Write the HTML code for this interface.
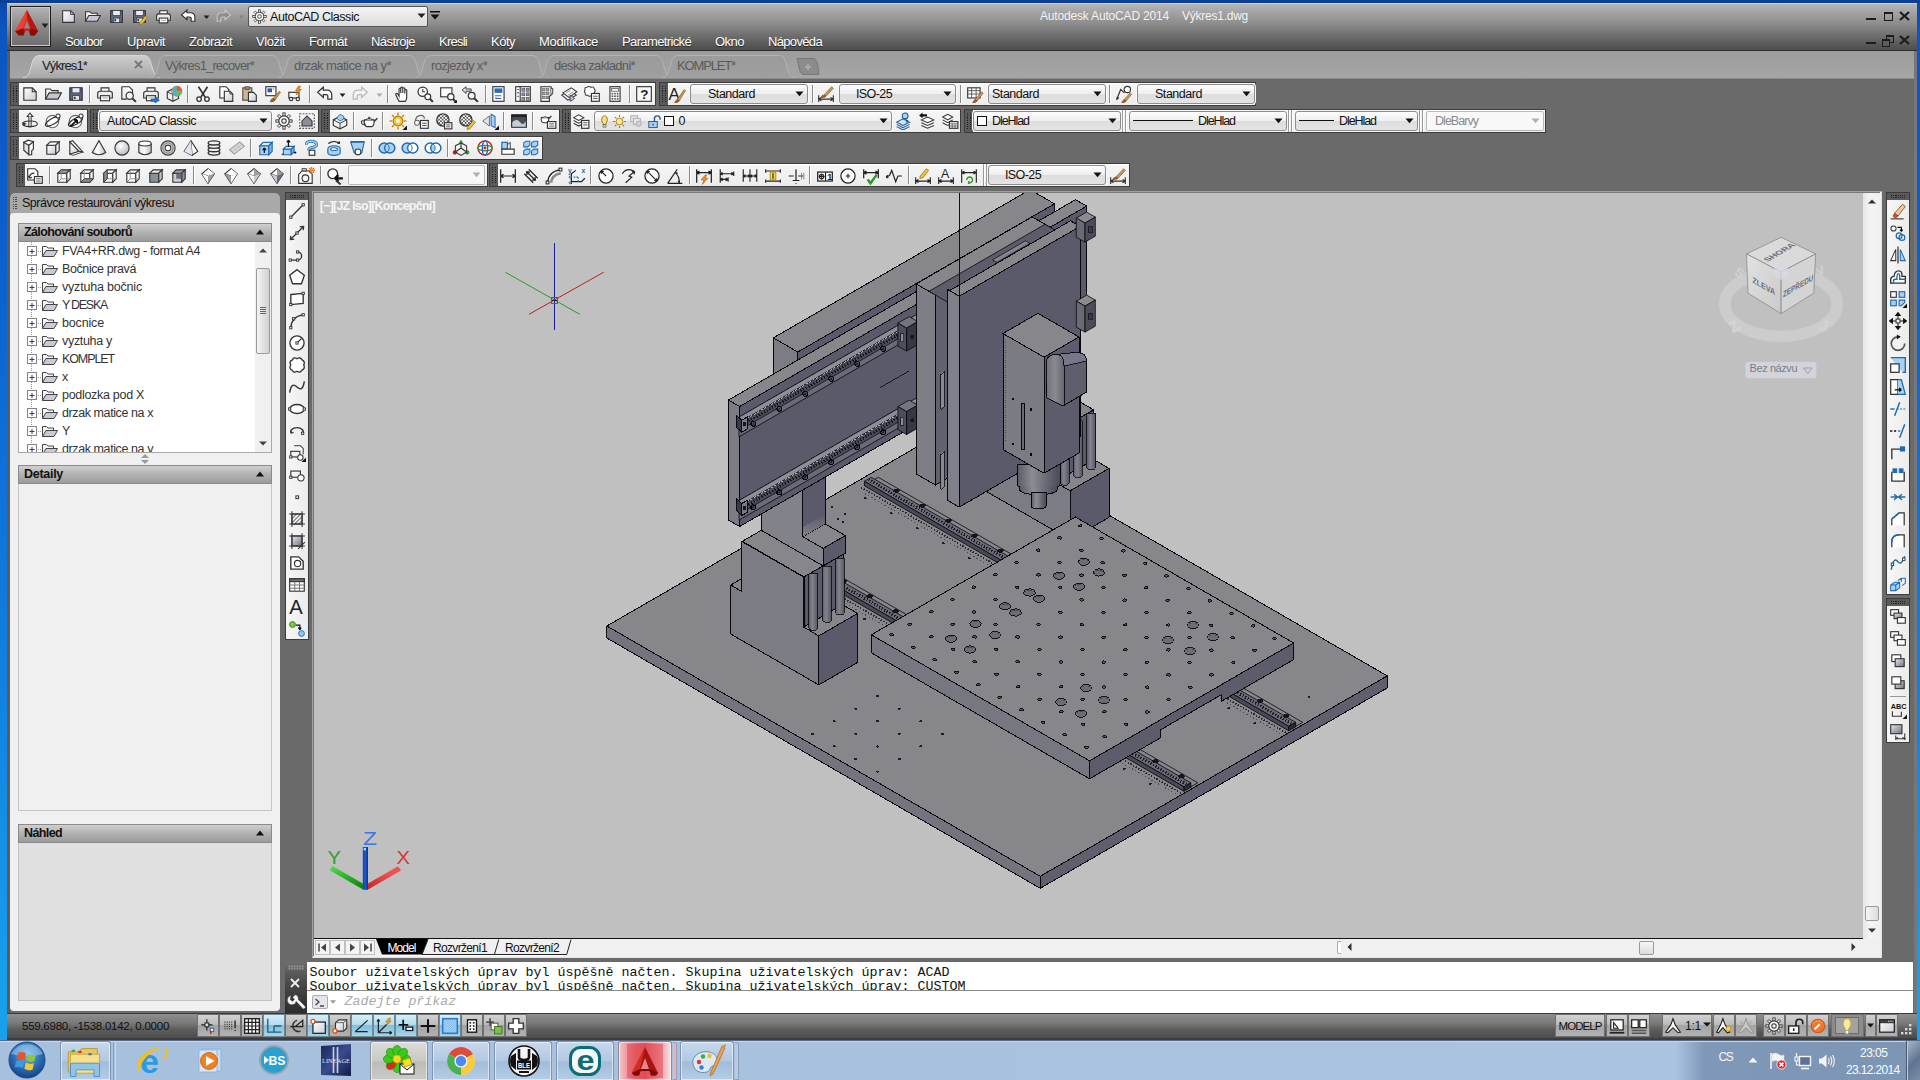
<!DOCTYPE html>
<html lang="cs"><head><meta charset="utf-8"><title>Autodesk AutoCAD 2014 - Výkres1.dwg</title>
<style>
*{box-sizing:border-box;margin:0;padding:0}
html,body{width:1920px;height:1080px;overflow:hidden;background:#0b55c4;font-family:"Liberation Sans",sans-serif}
#r{position:absolute;left:0;top:0;width:1920px;height:1080px;overflow:hidden}
#r div,#r svg{position:absolute}
.t{white-space:nowrap;line-height:1;}
.m{white-space:nowrap;line-height:1;font-family:"Liberation Mono",monospace}
.tb{background:#f0f0f0;border-top:1px solid #fafafa;border-bottom:1px solid #d0d0d0}
.grip{background-image:radial-gradient(circle,#2a2a2a 0.8px,transparent 1px);background-size:3px 3px;background-color:#5a5a5a}
.dd{background:linear-gradient(#fbfbfb,#e6e6e6 55%,#dcdcdc);border:1px solid #8e8e8e;border-radius:3px}
</style></head>
<body><div id="r">
<div style="left:0px;top:0px;width:1920px;height:1080px;background:linear-gradient(#0b47a5 0,#0c55c0 30px,#0d62d2 300px,#1183e0 700px,#18a0ec 1000px)"></div>
<div style="left:0px;top:0px;width:1920px;height:3px;background:#0b3f95"></div>
<div style="left:7px;top:3px;width:1910px;height:1037px;background:#6a6a6a"></div>
<div style="left:7px;top:3px;width:3px;height:1037px;background:#5c5c5c"></div>
<div style="left:7px;top:3px;width:1910px;height:48px;background:linear-gradient(#b6b6b6 0,#a4a4a4 8px,#8c8c8c 20px,#727272 30px,#5a5a5a 40px,#4a4a4a 48px);border-top:1px solid #d0d0d0"></div>
<div style="left:7px;top:50px;width:1910px;height:1px;background:#2e2e2e"></div>
<div style="left:10px;top:6px;width:41px;height:41px;background:linear-gradient(#b4b4b4,#8a8a8a 50%,#6e6e6e);border:1px solid #1e1e1e;box-shadow:inset 0 0 0 1px #c8c8c8"></div>
<svg style="left:13px;top:8px;" width="28" height="30" viewBox="0 0 28 30"><defs><linearGradient id="ag" x1="0" y1="0" x2="1" y2="0"><stop offset="0" stop-color="#f04a38"/><stop offset="0.5" stop-color="#d82a1c"/><stop offset="1" stop-color="#8e0e08"/></linearGradient></defs><path d="M13.9 2 L2 23.2 L5.75 27.6 L10.5 27.6 L12 23 L16 23 L17.5 27.6 L21.5 27.6 L25.1 23.2 Z" fill="url(#ag)"/><path d="M13.9 2 L2 23.2 L9.5 20.5 L13.9 9 Z" fill="#ee4030"/><path d="M13.9 2 L25.1 23.2 L18.5 20.5 L13.9 9 Z" fill="#b41a10"/><path d="M2 23.2 L9.5 20.5 L18.5 20.5 L25.1 23.2 L21.5 27.6 L17.5 27.6 L16 23 L12 23 L10.5 27.6 L5.75 27.6 Z" fill="#8a0e08"/><path d="M9.5 20.5 L18.5 20.5 L16 23 L12 23Z" fill="#c8281c"/><path d="M11 20.5 L13.9 12.5 L17 20.5 Z" fill="#8c8c8c"/></svg>
<svg style="left:41px;top:23px;" width="8" height="6" viewBox="0 0 8 6"><path d="M0.5 0.5 L7.5 0.5 L4 5 Z" fill="#222"/></svg>
<div style="left:248px;top:6px;width:180px;height:21px;background:linear-gradient(#f4f4f4,#dcdcdc);border:1px solid #555;border-radius:2px"></div>
<div class="t" style="left:270px;top:10.92px;font-size:12.5px;color:#111;letter-spacing:-0.457px;">AutoCAD Classic</div>
<svg style="left:417px;top:13px;" width="9" height="6" viewBox="0 0 9 6"><path d="M0.5 0.5 L8.5 0.5 L4.5 5 Z" fill="#222"/></svg>
<svg style="left:430px;top:11px;" width="10" height="9" viewBox="0 0 10 9"><path d="M0 0H10V1.6H0Z M0.5 3.5 L9.5 3.5 L5 8.5 Z" fill="#111"/></svg>
<div class="t" style="left:1040px;top:10.34px;font-size:12px;color:#f2f2f2;letter-spacing:-0.179px;">Autodesk AutoCAD 2014</div>
<div class="t" style="left:1182px;top:10.34px;font-size:12px;color:#f2f2f2;letter-spacing:-0.245px;">Výkres1.dwg</div>
<div style="left:1866px;top:18px;width:10px;height:2px;background:#1c1c1c"></div>
<svg style="left:1899px;top:11px;" width="11" height="10" viewBox="0 0 11 10"><path d="M1 1 L10 9 M10 1 L1 9" stroke="#1c1c1c" stroke-width="2.2"/></svg>
<div style="left:1866px;top:42px;width:10px;height:2px;background:#1c1c1c"></div>
<svg style="left:1899px;top:35px;" width="11" height="10" viewBox="0 0 11 10"><path d="M1 1 L10 9 M10 1 L1 9" stroke="#1c1c1c" stroke-width="2.2"/></svg>
<div style="left:1884px;top:12px;width:9px;height:9px;border:1px solid #1c1c1c;border-top:2px solid #1c1c1c"></div>
<div style="left:1886px;top:35px;width:8px;height:8px;border:1px solid #1c1c1c;border-top:2px solid #1c1c1c"></div>
<div style="left:1882px;top:39px;width:8px;height:8px;border:1px solid #1c1c1c;border-top:2px solid #1c1c1c;background:#5e5e5e"></div>
<div class="t" style="left:65px;top:34.5px;font-size:13px;color:#fff;text-shadow:0 1px 1px rgba(0,0,0,.6);letter-spacing:-0.653px;">Soubor</div>
<div class="t" style="left:127px;top:34.5px;font-size:13px;color:#fff;text-shadow:0 1px 1px rgba(0,0,0,.6);letter-spacing:-0.454px;">Upravit</div>
<div class="t" style="left:189px;top:34.5px;font-size:13px;color:#fff;text-shadow:0 1px 1px rgba(0,0,0,.6);letter-spacing:-0.495px;">Zobrazit</div>
<div class="t" style="left:256px;top:34.5px;font-size:13px;color:#fff;text-shadow:0 1px 1px rgba(0,0,0,.6);letter-spacing:-0.465px;">Vložit</div>
<div class="t" style="left:309px;top:34.5px;font-size:13px;color:#fff;text-shadow:0 1px 1px rgba(0,0,0,.6);letter-spacing:-0.528px;">Formát</div>
<div class="t" style="left:371px;top:34.5px;font-size:13px;color:#fff;text-shadow:0 1px 1px rgba(0,0,0,.6);letter-spacing:-0.551px;">Nástroje</div>
<div class="t" style="left:439px;top:34.5px;font-size:13px;color:#fff;text-shadow:0 1px 1px rgba(0,0,0,.6);letter-spacing:-0.751px;">Kresli</div>
<div class="t" style="left:491px;top:34.5px;font-size:13px;color:#fff;text-shadow:0 1px 1px rgba(0,0,0,.6);letter-spacing:-0.503px;">Kóty</div>
<div class="t" style="left:539px;top:34.5px;font-size:13px;color:#fff;text-shadow:0 1px 1px rgba(0,0,0,.6);letter-spacing:-0.313px;">Modifikace</div>
<div class="t" style="left:622px;top:34.5px;font-size:13px;color:#fff;text-shadow:0 1px 1px rgba(0,0,0,.6);letter-spacing:-0.631px;">Parametrické</div>
<div class="t" style="left:715px;top:34.5px;font-size:13px;color:#fff;text-shadow:0 1px 1px rgba(0,0,0,.6);letter-spacing:-0.518px;">Okno</div>
<div class="t" style="left:768px;top:34.5px;font-size:13px;color:#fff;text-shadow:0 1px 1px rgba(0,0,0,.6);letter-spacing:-0.658px;">Nápověda</div>
<div style="left:10px;top:51px;width:1904px;height:27px;background:linear-gradient(#9c9c9c,#a6a6a6)"></div>
<div style="left:1914px;top:51px;width:3px;height:989px;background:#777"></div>
<svg style="left:23px;top:55px;" width="139" height="23" viewBox="0 0 139 23"><defs><linearGradient id="tga" x1="0" y1="0" x2="0" y2="1"><stop offset="0" stop-color="#cdcdcd"/><stop offset="1" stop-color="#a9a9a9"/></linearGradient><linearGradient id="tgi" x1="0" y1="0" x2="0" y2="1"><stop offset="0" stop-color="#9b9b9b"/><stop offset="1" stop-color="#9f9f9f"/></linearGradient></defs><path d="M0 22.5 C6 22.5 6 18 8 12 C10 4 11 0.5 17 0.5 L120 0.5 C126 0.5 127 4 129 12 C131 18 131 22.5 137 22.5" fill="url(#tga)" stroke="#d8d8d8" stroke-width="1"/></svg>
<div class="t" style="left:42px;top:59.0px;font-size:13px;color:#1a1a1a;letter-spacing:-0.877px;">Výkres1*</div>
<svg style="left:150px;top:55px;" width="140" height="23" viewBox="0 0 140 23"><defs><linearGradient id="tga" x1="0" y1="0" x2="0" y2="1"><stop offset="0" stop-color="#cdcdcd"/><stop offset="1" stop-color="#a9a9a9"/></linearGradient><linearGradient id="tgi" x1="0" y1="0" x2="0" y2="1"><stop offset="0" stop-color="#9b9b9b"/><stop offset="1" stop-color="#9f9f9f"/></linearGradient></defs><path d="M0 22.5 C6 22.5 6 18 8 12 C10 4 11 0.5 17 0.5 L121 0.5 C127 0.5 128 4 130 12 C132 18 132 22.5 138 22.5" fill="url(#tgi)" stroke="#b4b4b4" stroke-width="1"/></svg>
<div class="t" style="left:165px;top:59.0px;font-size:13px;color:#5a5a5a;letter-spacing:-0.850px;">Výkres1_recover*</div>
<svg style="left:278px;top:55px;" width="149" height="23" viewBox="0 0 149 23"><defs><linearGradient id="tga" x1="0" y1="0" x2="0" y2="1"><stop offset="0" stop-color="#cdcdcd"/><stop offset="1" stop-color="#a9a9a9"/></linearGradient><linearGradient id="tgi" x1="0" y1="0" x2="0" y2="1"><stop offset="0" stop-color="#9b9b9b"/><stop offset="1" stop-color="#9f9f9f"/></linearGradient></defs><path d="M0 22.5 C6 22.5 6 18 8 12 C10 4 11 0.5 17 0.5 L130 0.5 C136 0.5 137 4 139 12 C141 18 141 22.5 147 22.5" fill="url(#tgi)" stroke="#b4b4b4" stroke-width="1"/></svg>
<div class="t" style="left:294px;top:59.0px;font-size:13px;color:#5a5a5a;letter-spacing:-0.552px;">drzak matice na y*</div>
<svg style="left:415px;top:55px;" width="135" height="23" viewBox="0 0 135 23"><defs><linearGradient id="tga" x1="0" y1="0" x2="0" y2="1"><stop offset="0" stop-color="#cdcdcd"/><stop offset="1" stop-color="#a9a9a9"/></linearGradient><linearGradient id="tgi" x1="0" y1="0" x2="0" y2="1"><stop offset="0" stop-color="#9b9b9b"/><stop offset="1" stop-color="#9f9f9f"/></linearGradient></defs><path d="M0 22.5 C6 22.5 6 18 8 12 C10 4 11 0.5 17 0.5 L116 0.5 C122 0.5 123 4 125 12 C127 18 127 22.5 133 22.5" fill="url(#tgi)" stroke="#b4b4b4" stroke-width="1"/></svg>
<div class="t" style="left:431px;top:59.0px;font-size:13px;color:#5a5a5a;letter-spacing:-0.689px;">rozjezdy x*</div>
<svg style="left:538px;top:55px;" width="136" height="23" viewBox="0 0 136 23"><defs><linearGradient id="tga" x1="0" y1="0" x2="0" y2="1"><stop offset="0" stop-color="#cdcdcd"/><stop offset="1" stop-color="#a9a9a9"/></linearGradient><linearGradient id="tgi" x1="0" y1="0" x2="0" y2="1"><stop offset="0" stop-color="#9b9b9b"/><stop offset="1" stop-color="#9f9f9f"/></linearGradient></defs><path d="M0 22.5 C6 22.5 6 18 8 12 C10 4 11 0.5 17 0.5 L117 0.5 C123 0.5 124 4 126 12 C128 18 128 22.5 134 22.5" fill="url(#tgi)" stroke="#b4b4b4" stroke-width="1"/></svg>
<div class="t" style="left:554px;top:59.0px;font-size:13px;color:#5a5a5a;letter-spacing:-0.670px;">deska zakladni*</div>
<svg style="left:662px;top:55px;" width="135" height="23" viewBox="0 0 135 23"><defs><linearGradient id="tga" x1="0" y1="0" x2="0" y2="1"><stop offset="0" stop-color="#cdcdcd"/><stop offset="1" stop-color="#a9a9a9"/></linearGradient><linearGradient id="tgi" x1="0" y1="0" x2="0" y2="1"><stop offset="0" stop-color="#9b9b9b"/><stop offset="1" stop-color="#9f9f9f"/></linearGradient></defs><path d="M0 22.5 C6 22.5 6 18 8 12 C10 4 11 0.5 17 0.5 L116 0.5 C122 0.5 123 4 125 12 C127 18 127 22.5 133 22.5" fill="url(#tgi)" stroke="#b4b4b4" stroke-width="1"/></svg>
<div class="t" style="left:677px;top:59.0px;font-size:13px;color:#5a5a5a;letter-spacing:-1.148px;">KOMPLET*</div>
<svg style="left:134px;top:60px;" width="9" height="9" viewBox="0 0 9 9"><path d="M1 1 L8 8 M8 1 L1 8" stroke="#777" stroke-width="1.8"/></svg>
<svg style="left:796px;top:57px;" width="24" height="19" viewBox="0 0 24 19"><path d="M1 1.5 L17 1.5 C20 1.5 21 4 22 9 L23 17.5 L8 17.5 C5 17.5 4 15 3 10 Z" fill="#8c8c8c" stroke="#777"/><path d="M9 10 H15 M12 7 V13" stroke="#aaa" stroke-width="2"/></svg>
<div style="left:10px;top:78px;width:1904px;height:1px;background:#8a8a8a"></div>
<div style="left:10px;top:82px;width:9px;height:24px;background:#5a5a5a;border:1px solid #3c3c3c;border-right:none"></div>
<div style="left:13px;top:86px;width:1.4px;height:16px;background:repeating-linear-gradient(to bottom,#1e1e1e 0,#1e1e1e 1.1px,transparent 1.1px,transparent 2.2px)"></div>
<div style="left:15.5px;top:86px;width:1.4px;height:16px;background:repeating-linear-gradient(to bottom,#1e1e1e 0,#1e1e1e 1.1px,transparent 1.1px,transparent 2.2px)"></div>
<div style="left:19px;top:82px;width:637px;height:24px;background:linear-gradient(#f6f6f6,#ececec);border:1px solid #3c3c3c;border-left:none;box-shadow:inset 0 1px 0 #fff"></div>
<div style="left:89px;top:85px;width:1px;height:18px;background:#8a8a8a"></div>
<div style="left:90px;top:85px;width:1px;height:18px;background:#fff"></div>
<div style="left:187px;top:85px;width:1px;height:18px;background:#8a8a8a"></div>
<div style="left:188px;top:85px;width:1px;height:18px;background:#fff"></div>
<div style="left:309px;top:85px;width:1px;height:18px;background:#8a8a8a"></div>
<div style="left:310px;top:85px;width:1px;height:18px;background:#fff"></div>
<div style="left:387px;top:85px;width:1px;height:18px;background:#8a8a8a"></div>
<div style="left:388px;top:85px;width:1px;height:18px;background:#fff"></div>
<div style="left:485px;top:85px;width:1px;height:18px;background:#8a8a8a"></div>
<div style="left:486px;top:85px;width:1px;height:18px;background:#fff"></div>
<div style="left:629px;top:85px;width:1px;height:18px;background:#8a8a8a"></div>
<div style="left:630px;top:85px;width:1px;height:18px;background:#fff"></div>
<div style="left:659px;top:82px;width:9px;height:24px;background:#5a5a5a;border:1px solid #3c3c3c;border-right:none"></div>
<div style="left:662px;top:86px;width:1.4px;height:16px;background:repeating-linear-gradient(to bottom,#1e1e1e 0,#1e1e1e 1.1px,transparent 1.1px,transparent 2.2px)"></div>
<div style="left:664.5px;top:86px;width:1.4px;height:16px;background:repeating-linear-gradient(to bottom,#1e1e1e 0,#1e1e1e 1.1px,transparent 1.1px,transparent 2.2px)"></div>
<div style="left:668px;top:82px;width:588px;height:24px;background:linear-gradient(#f6f6f6,#ececec);border:1px solid #3c3c3c;border-left:none;box-shadow:inset 0 1px 0 #fff"></div>
<div style="left:690px;top:84px;width:118px;height:20px;background:linear-gradient(#fdfdfd,#eeeeee 50%,#dddddd 52%,#e4e4e4);border:1px solid #8c8c8c;border-radius:3px;box-shadow:0 0 0 1px #f8f8f8"></div>
<svg style="left:795px;top:91px;" width="9" height="6" viewBox="0 0 9 6"><path d="M0.5 0.5 L8.5 0.5 L4.5 5.2 Z" fill="#111"/></svg>
<div class="t" style="left:708px;top:87.72px;font-size:12.5px;color:#111;letter-spacing:-0.466px;">Standard</div>
<div style="left:812px;top:85px;width:1px;height:18px;background:#8a8a8a"></div>
<div style="left:813px;top:85px;width:1px;height:18px;background:#fff"></div>
<div style="left:839px;top:84px;width:117px;height:20px;background:linear-gradient(#fdfdfd,#eeeeee 50%,#dddddd 52%,#e4e4e4);border:1px solid #8c8c8c;border-radius:3px;box-shadow:0 0 0 1px #f8f8f8"></div>
<svg style="left:943px;top:91px;" width="9" height="6" viewBox="0 0 9 6"><path d="M0.5 0.5 L8.5 0.5 L4.5 5.2 Z" fill="#111"/></svg>
<div class="t" style="left:856px;top:87.72px;font-size:12.5px;color:#111;letter-spacing:-0.600px;">ISO-25</div>
<div style="left:960px;top:85px;width:1px;height:18px;background:#8a8a8a"></div>
<div style="left:961px;top:85px;width:1px;height:18px;background:#fff"></div>
<div style="left:988px;top:84px;width:118px;height:20px;background:linear-gradient(#fdfdfd,#eeeeee 50%,#dddddd 52%,#e4e4e4);border:1px solid #8c8c8c;border-radius:3px;box-shadow:0 0 0 1px #f8f8f8"></div>
<svg style="left:1093px;top:91px;" width="9" height="6" viewBox="0 0 9 6"><path d="M0.5 0.5 L8.5 0.5 L4.5 5.2 Z" fill="#111"/></svg>
<div class="t" style="left:992px;top:87.72px;font-size:12.5px;color:#111;letter-spacing:-0.466px;">Standard</div>
<div style="left:1109px;top:85px;width:1px;height:18px;background:#8a8a8a"></div>
<div style="left:1110px;top:85px;width:1px;height:18px;background:#fff"></div>
<div style="left:1137px;top:84px;width:118px;height:20px;background:linear-gradient(#fdfdfd,#eeeeee 50%,#dddddd 52%,#e4e4e4);border:1px solid #8c8c8c;border-radius:3px;box-shadow:0 0 0 1px #f8f8f8"></div>
<svg style="left:1242px;top:91px;" width="9" height="6" viewBox="0 0 9 6"><path d="M0.5 0.5 L8.5 0.5 L4.5 5.2 Z" fill="#111"/></svg>
<div class="t" style="left:1155px;top:87.72px;font-size:12.5px;color:#111;letter-spacing:-0.466px;">Standard</div>
<div style="left:10px;top:109px;width:9px;height:24px;background:#5a5a5a;border:1px solid #3c3c3c;border-right:none"></div>
<div style="left:13px;top:113px;width:1.4px;height:16px;background:repeating-linear-gradient(to bottom,#1e1e1e 0,#1e1e1e 1.1px,transparent 1.1px,transparent 2.2px)"></div>
<div style="left:15.5px;top:113px;width:1.4px;height:16px;background:repeating-linear-gradient(to bottom,#1e1e1e 0,#1e1e1e 1.1px,transparent 1.1px,transparent 2.2px)"></div>
<div style="left:19px;top:109px;width:69px;height:24px;background:linear-gradient(#f6f6f6,#ececec);border:1px solid #3c3c3c;border-left:none;box-shadow:inset 0 1px 0 #fff"></div>
<div style="left:90px;top:109px;width:9px;height:24px;background:#5a5a5a;border:1px solid #3c3c3c;border-right:none"></div>
<div style="left:93px;top:113px;width:1.4px;height:16px;background:repeating-linear-gradient(to bottom,#1e1e1e 0,#1e1e1e 1.1px,transparent 1.1px,transparent 2.2px)"></div>
<div style="left:95.5px;top:113px;width:1.4px;height:16px;background:repeating-linear-gradient(to bottom,#1e1e1e 0,#1e1e1e 1.1px,transparent 1.1px,transparent 2.2px)"></div>
<div style="left:99px;top:109px;width:220px;height:24px;background:linear-gradient(#f6f6f6,#ececec);border:1px solid #3c3c3c;border-left:none;box-shadow:inset 0 1px 0 #fff"></div>
<div style="left:99px;top:111px;width:173px;height:20px;background:linear-gradient(#fdfdfd,#eeeeee 50%,#dddddd 52%,#e4e4e4);border:1px solid #8c8c8c;border-radius:3px;box-shadow:0 0 0 1px #f8f8f8"></div>
<svg style="left:259px;top:118px;" width="9" height="6" viewBox="0 0 9 6"><path d="M0.5 0.5 L8.5 0.5 L4.5 5.2 Z" fill="#111"/></svg>
<div class="t" style="left:107px;top:114.72px;font-size:12.5px;color:#111;letter-spacing:-0.457px;">AutoCAD Classic</div>
<div style="left:321px;top:109px;width:9px;height:24px;background:#5a5a5a;border:1px solid #3c3c3c;border-right:none"></div>
<div style="left:324px;top:113px;width:1.4px;height:16px;background:repeating-linear-gradient(to bottom,#1e1e1e 0,#1e1e1e 1.1px,transparent 1.1px,transparent 2.2px)"></div>
<div style="left:326.5px;top:113px;width:1.4px;height:16px;background:repeating-linear-gradient(to bottom,#1e1e1e 0,#1e1e1e 1.1px,transparent 1.1px,transparent 2.2px)"></div>
<div style="left:330px;top:109px;width:230px;height:24px;background:linear-gradient(#f6f6f6,#ececec);border:1px solid #3c3c3c;border-left:none;box-shadow:inset 0 1px 0 #fff"></div>
<div style="left:353px;top:112px;width:1px;height:18px;background:#8a8a8a"></div>
<div style="left:354px;top:112px;width:1px;height:18px;background:#fff"></div>
<div style="left:382px;top:112px;width:1px;height:18px;background:#8a8a8a"></div>
<div style="left:383px;top:112px;width:1px;height:18px;background:#fff"></div>
<div style="left:503px;top:112px;width:1px;height:18px;background:#8a8a8a"></div>
<div style="left:504px;top:112px;width:1px;height:18px;background:#fff"></div>
<div style="left:532px;top:112px;width:1px;height:18px;background:#8a8a8a"></div>
<div style="left:533px;top:112px;width:1px;height:18px;background:#fff"></div>
<div style="left:562px;top:109px;width:9px;height:24px;background:#5a5a5a;border:1px solid #3c3c3c;border-right:none"></div>
<div style="left:565px;top:113px;width:1.4px;height:16px;background:repeating-linear-gradient(to bottom,#1e1e1e 0,#1e1e1e 1.1px,transparent 1.1px,transparent 2.2px)"></div>
<div style="left:567.5px;top:113px;width:1.4px;height:16px;background:repeating-linear-gradient(to bottom,#1e1e1e 0,#1e1e1e 1.1px,transparent 1.1px,transparent 2.2px)"></div>
<div style="left:571px;top:109px;width:390px;height:24px;background:linear-gradient(#f6f6f6,#ececec);border:1px solid #3c3c3c;border-left:none;box-shadow:inset 0 1px 0 #fff"></div>
<div style="left:594px;top:111px;width:298px;height:20px;background:linear-gradient(#fdfdfd,#eeeeee 50%,#dddddd 52%,#e4e4e4);border:1px solid #8c8c8c;border-radius:3px;box-shadow:0 0 0 1px #f8f8f8"></div>
<svg style="left:879px;top:118px;" width="9" height="6" viewBox="0 0 9 6"><path d="M0.5 0.5 L8.5 0.5 L4.5 5.2 Z" fill="#111"/></svg>
<div class="t" style="left:678.5px;top:114.72px;font-size:12.5px;color:#111;">0</div>
<div style="left:964px;top:109px;width:9px;height:24px;background:#5a5a5a;border:1px solid #3c3c3c;border-right:none"></div>
<div style="left:967px;top:113px;width:1.4px;height:16px;background:repeating-linear-gradient(to bottom,#1e1e1e 0,#1e1e1e 1.1px,transparent 1.1px,transparent 2.2px)"></div>
<div style="left:969.5px;top:113px;width:1.4px;height:16px;background:repeating-linear-gradient(to bottom,#1e1e1e 0,#1e1e1e 1.1px,transparent 1.1px,transparent 2.2px)"></div>
<div style="left:973px;top:109px;width:573px;height:24px;background:linear-gradient(#f6f6f6,#ececec);border:1px solid #3c3c3c;border-left:none;box-shadow:inset 0 1px 0 #fff"></div>
<div style="left:973px;top:111px;width:148px;height:20px;background:linear-gradient(#fdfdfd,#eeeeee 50%,#dddddd 52%,#e4e4e4);border:1px solid #8c8c8c;border-radius:3px;box-shadow:0 0 0 1px #f8f8f8"></div>
<svg style="left:1108px;top:118px;" width="9" height="6" viewBox="0 0 9 6"><path d="M0.5 0.5 L8.5 0.5 L4.5 5.2 Z" fill="#111"/></svg>
<div class="t" style="left:992px;top:114.72px;font-size:12.5px;color:#111;letter-spacing:-1.066px;">DleHlad</div>
<div style="left:1122px;top:110px;width:1px;height:22px;background:#9a9a9a"></div>
<div style="left:1123px;top:110px;width:1px;height:22px;background:#fff"></div>
<div style="left:1125px;top:110px;width:1px;height:22px;background:#9a9a9a"></div>
<div style="left:1126px;top:110px;width:1px;height:22px;background:#fff"></div>
<div style="left:1129px;top:111px;width:158px;height:20px;background:linear-gradient(#fdfdfd,#eeeeee 50%,#dddddd 52%,#e4e4e4);border:1px solid #8c8c8c;border-radius:3px;box-shadow:0 0 0 1px #f8f8f8"></div>
<svg style="left:1274px;top:118px;" width="9" height="6" viewBox="0 0 9 6"><path d="M0.5 0.5 L8.5 0.5 L4.5 5.2 Z" fill="#111"/></svg>
<div class="t" style="left:1198px;top:114.72px;font-size:12.5px;color:#111;letter-spacing:-1.066px;">DleHlad</div>
<div style="left:1133px;top:120px;width:60px;height:1px;background:#111"></div>
<div style="left:1288px;top:110px;width:1px;height:22px;background:#9a9a9a"></div>
<div style="left:1289px;top:110px;width:1px;height:22px;background:#fff"></div>
<div style="left:1291px;top:110px;width:1px;height:22px;background:#9a9a9a"></div>
<div style="left:1292px;top:110px;width:1px;height:22px;background:#fff"></div>
<div style="left:1295px;top:111px;width:123px;height:20px;background:linear-gradient(#fdfdfd,#eeeeee 50%,#dddddd 52%,#e4e4e4);border:1px solid #8c8c8c;border-radius:3px;box-shadow:0 0 0 1px #f8f8f8"></div>
<svg style="left:1405px;top:118px;" width="9" height="6" viewBox="0 0 9 6"><path d="M0.5 0.5 L8.5 0.5 L4.5 5.2 Z" fill="#111"/></svg>
<div class="t" style="left:1339px;top:114.72px;font-size:12.5px;color:#111;letter-spacing:-1.066px;">DleHlad</div>
<div style="left:1299px;top:120px;width:35px;height:1px;background:#111"></div>
<div style="left:1419px;top:110px;width:1px;height:22px;background:#9a9a9a"></div>
<div style="left:1420px;top:110px;width:1px;height:22px;background:#fff"></div>
<div style="left:1422px;top:110px;width:1px;height:22px;background:#9a9a9a"></div>
<div style="left:1423px;top:110px;width:1px;height:22px;background:#fff"></div>
<div style="left:1426px;top:111px;width:118px;height:20px;background:#f8f8f8;border:1px solid #b8b8b8;border-radius:2px"></div>
<svg style="left:1531px;top:118px;" width="9" height="6" viewBox="0 0 9 6"><path d="M0.5 0.5 L8.5 0.5 L4.5 5.2 Z" fill="#b0b0b0"/></svg>
<div class="t" style="left:1435px;top:114.72px;font-size:12.5px;color:#8a8a8a;letter-spacing:-0.963px;">DleBarvy</div>
<div style="left:10px;top:136px;width:9px;height:24px;background:#5a5a5a;border:1px solid #3c3c3c;border-right:none"></div>
<div style="left:13px;top:140px;width:1.4px;height:16px;background:repeating-linear-gradient(to bottom,#1e1e1e 0,#1e1e1e 1.1px,transparent 1.1px,transparent 2.2px)"></div>
<div style="left:15.5px;top:140px;width:1.4px;height:16px;background:repeating-linear-gradient(to bottom,#1e1e1e 0,#1e1e1e 1.1px,transparent 1.1px,transparent 2.2px)"></div>
<div style="left:19px;top:136px;width:524px;height:24px;background:linear-gradient(#f6f6f6,#ececec);border:1px solid #3c3c3c;border-left:none;box-shadow:inset 0 1px 0 #fff"></div>
<div style="left:250px;top:139px;width:1px;height:18px;background:#8a8a8a"></div>
<div style="left:251px;top:139px;width:1px;height:18px;background:#fff"></div>
<div style="left:371px;top:139px;width:1px;height:18px;background:#8a8a8a"></div>
<div style="left:372px;top:139px;width:1px;height:18px;background:#fff"></div>
<div style="left:447px;top:139px;width:1px;height:18px;background:#8a8a8a"></div>
<div style="left:448px;top:139px;width:1px;height:18px;background:#fff"></div>
<div style="left:16px;top:163px;width:9px;height:24px;background:#5a5a5a;border:1px solid #3c3c3c;border-right:none"></div>
<div style="left:19px;top:167px;width:1.4px;height:16px;background:repeating-linear-gradient(to bottom,#1e1e1e 0,#1e1e1e 1.1px,transparent 1.1px,transparent 2.2px)"></div>
<div style="left:21.5px;top:167px;width:1.4px;height:16px;background:repeating-linear-gradient(to bottom,#1e1e1e 0,#1e1e1e 1.1px,transparent 1.1px,transparent 2.2px)"></div>
<div style="left:25px;top:163px;width:463px;height:24px;background:linear-gradient(#f6f6f6,#ececec);border:1px solid #3c3c3c;border-left:none;box-shadow:inset 0 1px 0 #fff"></div>
<div style="left:49px;top:166px;width:1px;height:18px;background:#8a8a8a"></div>
<div style="left:50px;top:166px;width:1px;height:18px;background:#fff"></div>
<div style="left:193px;top:166px;width:1px;height:18px;background:#8a8a8a"></div>
<div style="left:194px;top:166px;width:1px;height:18px;background:#fff"></div>
<div style="left:290px;top:166px;width:1px;height:18px;background:#8a8a8a"></div>
<div style="left:291px;top:166px;width:1px;height:18px;background:#fff"></div>
<div style="left:320px;top:166px;width:1px;height:18px;background:#8a8a8a"></div>
<div style="left:321px;top:166px;width:1px;height:18px;background:#fff"></div>
<div style="left:348px;top:165px;width:137px;height:20px;background:#f8f8f8;border:1px solid #b8b8b8;border-radius:2px"></div>
<svg style="left:472px;top:172px;" width="9" height="6" viewBox="0 0 9 6"><path d="M0.5 0.5 L8.5 0.5 L4.5 5.2 Z" fill="#b0b0b0"/></svg>
<div style="left:489px;top:163px;width:9px;height:24px;background:#5a5a5a;border:1px solid #3c3c3c;border-right:none"></div>
<div style="left:492px;top:167px;width:1.4px;height:16px;background:repeating-linear-gradient(to bottom,#1e1e1e 0,#1e1e1e 1.1px,transparent 1.1px,transparent 2.2px)"></div>
<div style="left:494.5px;top:167px;width:1.4px;height:16px;background:repeating-linear-gradient(to bottom,#1e1e1e 0,#1e1e1e 1.1px,transparent 1.1px,transparent 2.2px)"></div>
<div style="left:498px;top:163px;width:632px;height:24px;background:linear-gradient(#f6f6f6,#ececec);border:1px solid #3c3c3c;border-left:none;box-shadow:inset 0 1px 0 #fff"></div>
<div style="left:590px;top:166px;width:1px;height:18px;background:#8a8a8a"></div>
<div style="left:591px;top:166px;width:1px;height:18px;background:#fff"></div>
<div style="left:689px;top:166px;width:1px;height:18px;background:#8a8a8a"></div>
<div style="left:690px;top:166px;width:1px;height:18px;background:#fff"></div>
<div style="left:809px;top:166px;width:1px;height:18px;background:#8a8a8a"></div>
<div style="left:810px;top:166px;width:1px;height:18px;background:#fff"></div>
<div style="left:908px;top:166px;width:1px;height:18px;background:#8a8a8a"></div>
<div style="left:909px;top:166px;width:1px;height:18px;background:#fff"></div>
<div style="left:983px;top:164px;width:1px;height:22px;background:#9a9a9a"></div>
<div style="left:984px;top:164px;width:1px;height:22px;background:#fff"></div>
<div style="left:986px;top:164px;width:1px;height:22px;background:#9a9a9a"></div>
<div style="left:987px;top:164px;width:1px;height:22px;background:#fff"></div>
<div style="left:988px;top:165px;width:118px;height:20px;background:linear-gradient(#fdfdfd,#eeeeee 50%,#dddddd 52%,#e4e4e4);border:1px solid #8c8c8c;border-radius:3px;box-shadow:0 0 0 1px #f8f8f8"></div>
<svg style="left:1093px;top:172px;" width="9" height="6" viewBox="0 0 9 6"><path d="M0.5 0.5 L8.5 0.5 L4.5 5.2 Z" fill="#111"/></svg>
<div class="t" style="left:1005px;top:168.72px;font-size:12.5px;color:#111;letter-spacing:-0.600px;">ISO-25</div>
<div style="left:10px;top:193px;width:270px;height:30px;background:#a9a9a9;border-radius:5px 5px 0 0"></div>
<div style="left:13px;top:197px;width:1.3px;height:12px;background:repeating-linear-gradient(to bottom,#4a4a4a 0,#4a4a4a 1.1px,transparent 1.1px,transparent 2.2px)"></div>
<div style="left:15.3px;top:197px;width:1.3px;height:12px;background:repeating-linear-gradient(to bottom,#4a4a4a 0,#4a4a4a 1.1px,transparent 1.1px,transparent 2.2px)"></div>
<div class="t" style="left:22px;top:197.42px;font-size:12.5px;color:#111;letter-spacing:-0.476px;">Správce restaurování výkresu</div>
<div style="left:10px;top:213px;width:270px;height:798px;background:#f0f0f0;border-radius:4px 4px 4px 4px"></div>
<div style="left:18px;top:223px;width:254px;height:19px;background:linear-gradient(#cfcfcf,#b4b4b4 45%,#9b9b9b);border:1px solid #8a8a8a"></div>
<div class="t" style="left:24px;top:226.42px;font-size:12.5px;color:#111;font-weight:bold;letter-spacing:-0.635px;">Zálohování souborů</div>
<svg style="left:256px;top:229px;" width="8" height="6" viewBox="0 0 8 6"><path d="M0 5.5 L4 0.5 L8 5.5 Z" fill="#111"/></svg>
<div style="left:18px;top:242px;width:254px;height:211px;background:#fff;border:1px solid #a8a8a8;border-top:none"></div>
<svg style="left:19px;top:242px" width="236" height="210" viewBox="0 0 236 210"><path d="M12.5 0 V210" stroke="#999" stroke-dasharray="1 1"/><path d="M17 9.5 H23" stroke="#999" stroke-dasharray="1 1"/><rect x="8.5" y="4.5" width="9" height="9" fill="#fff" stroke="#848484"/><path d="M10.5 9.5 H15.5 M13 7 V12" stroke="#2a3a8a"/><path d="M23.5 14.5 V4.5 H27.5 L29 6 H34.5 V8" fill="#f4f4f4" stroke="#444"/><path d="M23.5 14.5 L27 8.5 H38.5 L35 14.5 Z" fill="#c9ccd4" stroke="#444"/><path d="M17 27.5 H23" stroke="#999" stroke-dasharray="1 1"/><rect x="8.5" y="22.5" width="9" height="9" fill="#fff" stroke="#848484"/><path d="M10.5 27.5 H15.5 M13 25 V30" stroke="#2a3a8a"/><path d="M23.5 32.5 V22.5 H27.5 L29 24 H34.5 V26" fill="#f4f4f4" stroke="#444"/><path d="M23.5 32.5 L27 26.5 H38.5 L35 32.5 Z" fill="#c9ccd4" stroke="#444"/><path d="M17 45.5 H23" stroke="#999" stroke-dasharray="1 1"/><rect x="8.5" y="40.5" width="9" height="9" fill="#fff" stroke="#848484"/><path d="M10.5 45.5 H15.5 M13 43 V48" stroke="#2a3a8a"/><path d="M23.5 50.5 V40.5 H27.5 L29 42 H34.5 V44" fill="#f4f4f4" stroke="#444"/><path d="M23.5 50.5 L27 44.5 H38.5 L35 50.5 Z" fill="#c9ccd4" stroke="#444"/><path d="M17 63.5 H23" stroke="#999" stroke-dasharray="1 1"/><rect x="8.5" y="58.5" width="9" height="9" fill="#fff" stroke="#848484"/><path d="M10.5 63.5 H15.5 M13 61 V66" stroke="#2a3a8a"/><path d="M23.5 68.5 V58.5 H27.5 L29 60 H34.5 V62" fill="#f4f4f4" stroke="#444"/><path d="M23.5 68.5 L27 62.5 H38.5 L35 68.5 Z" fill="#c9ccd4" stroke="#444"/><path d="M17 81.5 H23" stroke="#999" stroke-dasharray="1 1"/><rect x="8.5" y="76.5" width="9" height="9" fill="#fff" stroke="#848484"/><path d="M10.5 81.5 H15.5 M13 79 V84" stroke="#2a3a8a"/><path d="M23.5 86.5 V76.5 H27.5 L29 78 H34.5 V80" fill="#f4f4f4" stroke="#444"/><path d="M23.5 86.5 L27 80.5 H38.5 L35 86.5 Z" fill="#c9ccd4" stroke="#444"/><path d="M17 99.5 H23" stroke="#999" stroke-dasharray="1 1"/><rect x="8.5" y="94.5" width="9" height="9" fill="#fff" stroke="#848484"/><path d="M10.5 99.5 H15.5 M13 97 V102" stroke="#2a3a8a"/><path d="M23.5 104.5 V94.5 H27.5 L29 96 H34.5 V98" fill="#f4f4f4" stroke="#444"/><path d="M23.5 104.5 L27 98.5 H38.5 L35 104.5 Z" fill="#c9ccd4" stroke="#444"/><path d="M17 117.5 H23" stroke="#999" stroke-dasharray="1 1"/><rect x="8.5" y="112.5" width="9" height="9" fill="#fff" stroke="#848484"/><path d="M10.5 117.5 H15.5 M13 115 V120" stroke="#2a3a8a"/><path d="M23.5 122.5 V112.5 H27.5 L29 114 H34.5 V116" fill="#f4f4f4" stroke="#444"/><path d="M23.5 122.5 L27 116.5 H38.5 L35 122.5 Z" fill="#c9ccd4" stroke="#444"/><path d="M17 135.5 H23" stroke="#999" stroke-dasharray="1 1"/><rect x="8.5" y="130.5" width="9" height="9" fill="#fff" stroke="#848484"/><path d="M10.5 135.5 H15.5 M13 133 V138" stroke="#2a3a8a"/><path d="M23.5 140.5 V130.5 H27.5 L29 132 H34.5 V134" fill="#f4f4f4" stroke="#444"/><path d="M23.5 140.5 L27 134.5 H38.5 L35 140.5 Z" fill="#c9ccd4" stroke="#444"/><path d="M17 153.5 H23" stroke="#999" stroke-dasharray="1 1"/><rect x="8.5" y="148.5" width="9" height="9" fill="#fff" stroke="#848484"/><path d="M10.5 153.5 H15.5 M13 151 V156" stroke="#2a3a8a"/><path d="M23.5 158.5 V148.5 H27.5 L29 150 H34.5 V152" fill="#f4f4f4" stroke="#444"/><path d="M23.5 158.5 L27 152.5 H38.5 L35 158.5 Z" fill="#c9ccd4" stroke="#444"/><path d="M17 171.5 H23" stroke="#999" stroke-dasharray="1 1"/><rect x="8.5" y="166.5" width="9" height="9" fill="#fff" stroke="#848484"/><path d="M10.5 171.5 H15.5 M13 169 V174" stroke="#2a3a8a"/><path d="M23.5 176.5 V166.5 H27.5 L29 168 H34.5 V170" fill="#f4f4f4" stroke="#444"/><path d="M23.5 176.5 L27 170.5 H38.5 L35 176.5 Z" fill="#c9ccd4" stroke="#444"/><path d="M17 189.5 H23" stroke="#999" stroke-dasharray="1 1"/><rect x="8.5" y="184.5" width="9" height="9" fill="#fff" stroke="#848484"/><path d="M10.5 189.5 H15.5 M13 187 V192" stroke="#2a3a8a"/><path d="M23.5 194.5 V184.5 H27.5 L29 186 H34.5 V188" fill="#f4f4f4" stroke="#444"/><path d="M23.5 194.5 L27 188.5 H38.5 L35 194.5 Z" fill="#c9ccd4" stroke="#444"/><path d="M17 207.5 H23" stroke="#999" stroke-dasharray="1 1"/><rect x="8.5" y="202.5" width="9" height="9" fill="#fff" stroke="#848484"/><path d="M10.5 207.5 H15.5 M13 205 V210" stroke="#2a3a8a"/><path d="M23.5 212.5 V202.5 H27.5 L29 204 H34.5 V206" fill="#f4f4f4" stroke="#444"/><path d="M23.5 212.5 L27 206.5 H38.5 L35 212.5 Z" fill="#c9ccd4" stroke="#444"/></svg>
<div style="left:19px;top:242px;width:236px;height:210px;overflow:hidden"><div class="t" style="left:43px;top:2.72px;font-size:12.5px;color:#333;letter-spacing:-0.378px">FVA4+RR.dwg - format A4</div><div class="t" style="left:43px;top:20.72px;font-size:12.5px;color:#333;letter-spacing:-0.401px">Bočnice pravá</div><div class="t" style="left:43px;top:38.72px;font-size:12.5px;color:#333;letter-spacing:-0.191px">vyztuha bočnic</div><div class="t" style="left:43px;top:56.72px;font-size:12.5px;color:#333;letter-spacing:-1.280px">Y DESKA</div><div class="t" style="left:43px;top:74.72px;font-size:12.5px;color:#333;letter-spacing:-0.155px">bocnice</div><div class="t" style="left:43px;top:92.72px;font-size:12.5px;color:#333;letter-spacing:-0.311px">vyztuha y</div><div class="t" style="left:43px;top:110.72px;font-size:12.5px;color:#333;letter-spacing:-1.105px">KOMPLET</div><div class="t" style="left:43px;top:128.72px;font-size:12.5px;color:#333;letter-spacing:-0.250px">x</div><div class="t" style="left:43px;top:146.72px;font-size:12.5px;color:#333;letter-spacing:-0.298px">podlozka pod X</div><div class="t" style="left:43px;top:164.72px;font-size:12.5px;color:#333;letter-spacing:-0.409px">drzak matice na x</div><div class="t" style="left:43px;top:182.72px;font-size:12.5px;color:#333;letter-spacing:-1.338px">Y</div><div class="t" style="left:43px;top:200.72px;font-size:12.5px;color:#333;letter-spacing:-0.409px">drzak matice na y</div></div>
<div style="left:255px;top:242px;width:16px;height:210px;background:#f0f0f0"></div>
<svg style="left:259px;top:248px;" width="8" height="5" viewBox="0 0 8 5"><path d="M0 4.5 L4 0.5 L8 4.5Z" fill="#444"/></svg>
<svg style="left:259px;top:441px;" width="8" height="5" viewBox="0 0 8 5"><path d="M0 0.5 L4 4.5 L8 0.5Z" fill="#444"/></svg>
<div style="left:256px;top:268px;width:14px;height:86px;background:linear-gradient(90deg,#f4f4f4,#e2e2e2 50%,#d2d2d2);border:1px solid #9a9a9a;border-radius:2px"></div>
<div style="left:260px;top:307px;width:6px;height:1px;background:#666"></div>
<div style="left:260px;top:309px;width:6px;height:1px;background:#666"></div>
<div style="left:260px;top:311px;width:6px;height:1px;background:#666"></div>
<div style="left:260px;top:313px;width:6px;height:1px;background:#666"></div>
<svg style="left:141px;top:454px;" width="8" height="10" viewBox="0 0 8 10"><path d="M0 4 L4 0 L8 4Z M0 6 L4 10 L8 6Z" fill="#9a9a9a"/></svg>
<div style="left:18px;top:465px;width:254px;height:19px;background:linear-gradient(#cfcfcf,#b4b4b4 45%,#9b9b9b);border:1px solid #8a8a8a"></div>
<div class="t" style="left:24px;top:468.42px;font-size:12.5px;color:#111;font-weight:bold;letter-spacing:-0.284px;">Detaily</div>
<svg style="left:256px;top:471px;" width="8" height="6" viewBox="0 0 8 6"><path d="M0 5.5 L4 0.5 L8 5.5 Z" fill="#111"/></svg>
<div style="left:18px;top:484px;width:254px;height:327px;background:#f0f0f0;border:1px solid #c6c6c6;border-top:none"></div>
<div style="left:18px;top:824px;width:254px;height:19px;background:linear-gradient(#cfcfcf,#b4b4b4 45%,#9b9b9b);border:1px solid #8a8a8a"></div>
<div class="t" style="left:24px;top:827.42px;font-size:12.5px;color:#111;font-weight:bold;letter-spacing:-0.612px;">Náhled</div>
<svg style="left:256px;top:830px;" width="8" height="6" viewBox="0 0 8 6"><path d="M0 5.5 L4 0.5 L8 5.5 Z" fill="#111"/></svg>
<div style="left:18px;top:843px;width:254px;height:158px;background:#e0e0e0;border:1px solid #c2c2c2;border-top:none"></div>
<div style="left:285px;top:192px;width:24px;height:8px;background:#5a5a5a;border:1px solid #3c3c3c;border-bottom:none"></div>
<div style="left:290px;top:194.5px;width:14px;height:1.4px;background:repeating-linear-gradient(to right,#1e1e1e 0,#1e1e1e 1.1px,transparent 1.1px,transparent 2.2px)"></div>
<div style="left:290px;top:197px;width:14px;height:1.4px;background:repeating-linear-gradient(to right,#1e1e1e 0,#1e1e1e 1.1px,transparent 1.1px,transparent 2.2px)"></div>
<div style="left:285px;top:200px;width:24px;height:440px;background:linear-gradient(90deg,#f6f6f6,#ececec);border:1px solid #3c3c3c;border-top:none"></div>
<div style="left:1886px;top:192px;width:24px;height:8px;background:#5a5a5a;border:1px solid #3c3c3c;border-bottom:none"></div>
<div style="left:1891px;top:194.5px;width:14px;height:1.4px;background:repeating-linear-gradient(to right,#1e1e1e 0,#1e1e1e 1.1px,transparent 1.1px,transparent 2.2px)"></div>
<div style="left:1891px;top:197px;width:14px;height:1.4px;background:repeating-linear-gradient(to right,#1e1e1e 0,#1e1e1e 1.1px,transparent 1.1px,transparent 2.2px)"></div>
<div style="left:1886px;top:200px;width:24px;height:395px;background:linear-gradient(90deg,#f6f6f6,#ececec);border:1px solid #3c3c3c;border-top:none"></div>
<div style="left:1886px;top:598px;width:24px;height:8px;background:#5a5a5a;border:1px solid #3c3c3c;border-bottom:none"></div>
<div style="left:1891px;top:600.5px;width:14px;height:1.4px;background:repeating-linear-gradient(to right,#1e1e1e 0,#1e1e1e 1.1px,transparent 1.1px,transparent 2.2px)"></div>
<div style="left:1891px;top:603px;width:14px;height:1.4px;background:repeating-linear-gradient(to right,#1e1e1e 0,#1e1e1e 1.1px,transparent 1.1px,transparent 2.2px)"></div>
<div style="left:1886px;top:606px;width:24px;height:137px;background:linear-gradient(90deg,#f6f6f6,#ececec);border:1px solid #3c3c3c;border-top:none"></div>
<div style="left:312px;top:191px;width:1570px;height:767px;background:#f0f0f0;border-top:1px solid #a0a0a0;border-left:1px solid #a0a0a0;border-right:1px solid #e4e4e4;border-bottom:1px solid #e4e4e4"></div>
<div style="left:313px;top:192px;width:1567px;height:1px;background:#787878"></div>
<div style="left:313px;top:192px;width:1px;height:764px;background:#787878"></div>
<div style="left:314px;top:193px;width:1549px;height:745px;background:#c0c0c0"></div>
<div style="left:314px;top:938px;width:1549px;height:1px;background:#111"></div>
<div style="left:1863px;top:193px;width:17px;height:746px;background:linear-gradient(90deg,#e6e6e6,#f4f4f4 40%,#f0f0f0)"></div>
<svg style="left:1868px;top:199px;" width="8" height="5" viewBox="0 0 8 5"><path d="M0 4.5 L4 0.5 L8 4.5Z" fill="#333"/></svg>
<svg style="left:1868px;top:928px;" width="8" height="5" viewBox="0 0 8 5"><path d="M0 0.5 L4 4.5 L8 0.5Z" fill="#333"/></svg>
<div style="left:1865px;top:906px;width:14px;height:15px;background:linear-gradient(90deg,#f6f6f6,#dcdcdc);border:1px solid #9a9a9a;border-radius:2px"></div>
<div style="left:314px;top:939px;width:1566px;height:17px;background:#f0f0f0"></div>
<div style="left:315px;top:940px;width:15px;height:15px;background:#f4f4f4;border:1px solid #c0c0c0"></div>
<div style="left:330px;top:940px;width:15px;height:15px;background:#f4f4f4;border:1px solid #c0c0c0"></div>
<div style="left:345px;top:940px;width:15px;height:15px;background:#f4f4f4;border:1px solid #c0c0c0"></div>
<div style="left:360px;top:940px;width:15px;height:15px;background:#f4f4f4;border:1px solid #c0c0c0"></div>
<svg style="left:315px;top:940px;" width="60" height="15" viewBox="0 0 60 15"><path d="M4 3.5V11.5" stroke="#444" stroke-width="1.5"/><path d="M11 3.5 L6 7.5 L11 11.5Z M25 3.5 L20 7.5 L25 11.5Z M35 3.5 L40 7.5 L35 11.5Z M49 3.5 L54 7.5 L49 11.5Z" fill="#444"/><path d="M56 3.5V11.5" stroke="#444" stroke-width="1.5"/></svg>
<svg style="left:374px;top:939px;" width="200" height="17" viewBox="0 0 200 17"><path d="M2 0 L8 15.5 L48 15.5 L54 0 Z" fill="#000"/><path d="M48 15.5 L54 0.5 M48 15.5 H120.4 L124.75 0.5 M120.4 15.5 H192.7 L197 0.5" fill="none" stroke="#222"/><path d="M8 16.5 H192" stroke="#fff"/></svg>
<div class="t" style="left:387.5px;top:942.14px;font-size:12px;color:#fff;letter-spacing:-0.936px;">Model</div>
<div class="t" style="left:433px;top:942.14px;font-size:12px;color:#111;letter-spacing:-0.669px;">Rozvržení1</div>
<div class="t" style="left:505px;top:942.14px;font-size:12px;color:#111;letter-spacing:-0.669px;">Rozvržení2</div>
<div style="left:1337px;top:941px;width:4px;height:13px;border:1px solid #aaa;border-right:none;border-radius:2px 0 0 2px;background:#fff"></div>
<svg style="left:1347px;top:943px;" width="5" height="8" viewBox="0 0 5 8"><path d="M4.5 0 L0.5 4 L4.5 8Z" fill="#333"/></svg>
<svg style="left:1851px;top:943px;" width="5" height="8" viewBox="0 0 5 8"><path d="M0.5 0 L4.5 4 L0.5 8Z" fill="#333"/></svg>
<div style="left:1639px;top:941px;width:15px;height:14px;background:linear-gradient(#f6f6f6,#dcdcdc);border:1px solid #9a9a9a;border-radius:2px"></div>
<div style="left:285px;top:962px;width:22px;height:51px;background:linear-gradient(#6e6e6e,#4a4a4a 40%,#2c2c2c)"></div>
<div style="left:288px;top:965px;width:16px;height:5px;background-image:radial-gradient(circle,#9a9a9a 0.8px,transparent 1px);background-size:2.7px 2.5px"></div>
<svg style="left:290px;top:978px;" width="10" height="10" viewBox="0 0 10 10"><path d="M1 1 L9 9 M9 1 L1 9" stroke="#f0f0f0" stroke-width="1.8"/></svg>
<svg style="left:287px;top:994px;" width="19" height="19" viewBox="0 0 19 19"><path d="M4.2 1.6 A4.6 4.6 0 1 0 9.2 7.6 L15.6 14.4 A1.7 1.7 0 0 0 18 12 L11.4 5.6 A4.6 4.6 0 0 0 8 0.6 L5.6 3.4 L7.4 5.4 L5.4 7.2 L3.2 5.4 Z" fill="#f6f6f6" stroke="#222" stroke-width="0.5"/></svg>
<div style="left:307px;top:962px;width:1606px;height:28px;background:#fff;overflow:hidden"><div class="m" style="left:2.6px;top:3.6px;font-size:13.33px;color:#111">Soubor uživatelských úprav byl úspěšně načten. Skupina uživatelských úprav: ACAD</div><div class="m" style="left:2.6px;top:18.4px;font-size:13.33px;color:#111">Soubor uživatelských úprav byl úspěšně načten. Skupina uživatelských úprav: CUSTOM</div></div>
<div style="left:307px;top:990px;width:1606px;height:1px;background:#8a8a8a"></div>
<div style="left:307px;top:991px;width:1606px;height:22px;background:#fff"></div>
<div style="left:312px;top:995px;width:16px;height:14px;background:#e4e6ea;border:1px solid #aab;border-radius:2px"></div>
<svg style="left:314px;top:998px;" width="12" height="9" viewBox="0 0 12 9"><path d="M1.5 1 L5 4 L1.5 7 M6 8 H10" stroke="#445" stroke-width="1.3" fill="none"/></svg>
<svg style="left:330px;top:1000px;" width="6" height="4" viewBox="0 0 6 4"><path d="M0 0.3 L6 0.3 L3 3.7Z" fill="#999"/></svg>
<div class="m" style="left:344.4px;top:995.3px;font-size:13.33px;color:#aaa;font-style:italic">Zadejte příkaz</div>
<div style="left:7px;top:1013px;width:1910px;height:25px;background:linear-gradient(#8e8e8e,#787878 40%,#5e5e5e 62%,#4c4c4c);border-top:1px solid #3a3a3a"></div>
<div style="left:7px;top:1038px;width:1910px;height:2px;background:#3c3c3c"></div>
<div class="t" style="left:22px;top:1020.77px;font-size:11.5px;color:#111;letter-spacing:-0.253px;">559.6980, -1538.0142, 0.0000</div>
<div style="left:197px;top:1014px;width:22px;height:23px;background:linear-gradient(#d2d2d2,#bcbcbc 45%,#a4a4a4 50%,#b2b2b2);border:1px solid #707070"></div>
<div style="left:219px;top:1014px;width:22px;height:23px;background:linear-gradient(#d2d2d2,#bcbcbc 45%,#a4a4a4 50%,#b2b2b2);border:1px solid #707070"></div>
<div style="left:241px;top:1014px;width:22px;height:23px;background:linear-gradient(#d2d2d2,#bcbcbc 45%,#a4a4a4 50%,#b2b2b2);border:1px solid #707070"></div>
<div style="left:263px;top:1014px;width:22px;height:23px;background:linear-gradient(#d8eef8,#b4dcee 45%,#7fc0dc 50%,#a6d6ea);border:1px solid #6d8a96"></div>
<div style="left:285px;top:1014px;width:22px;height:23px;background:linear-gradient(#d2d2d2,#bcbcbc 45%,#a4a4a4 50%,#b2b2b2);border:1px solid #707070"></div>
<div style="left:307px;top:1014px;width:22px;height:23px;background:linear-gradient(#d8eef8,#b4dcee 45%,#7fc0dc 50%,#a6d6ea);border:1px solid #6d8a96"></div>
<div style="left:329px;top:1014px;width:22px;height:23px;background:linear-gradient(#d2d2d2,#bcbcbc 45%,#a4a4a4 50%,#b2b2b2);border:1px solid #707070"></div>
<div style="left:351px;top:1014px;width:22px;height:23px;background:linear-gradient(#d8eef8,#b4dcee 45%,#7fc0dc 50%,#a6d6ea);border:1px solid #6d8a96"></div>
<div style="left:373px;top:1014px;width:22px;height:23px;background:linear-gradient(#d8eef8,#b4dcee 45%,#7fc0dc 50%,#a6d6ea);border:1px solid #6d8a96"></div>
<div style="left:395px;top:1014px;width:22px;height:23px;background:linear-gradient(#d8eef8,#b4dcee 45%,#7fc0dc 50%,#a6d6ea);border:1px solid #6d8a96"></div>
<div style="left:417px;top:1014px;width:22px;height:23px;background:linear-gradient(#d2d2d2,#bcbcbc 45%,#a4a4a4 50%,#b2b2b2);border:1px solid #707070"></div>
<div style="left:439px;top:1014px;width:22px;height:23px;background:linear-gradient(#d8eef8,#b4dcee 45%,#7fc0dc 50%,#a6d6ea);border:1px solid #6d8a96"></div>
<div style="left:461px;top:1014px;width:22px;height:23px;background:linear-gradient(#d2d2d2,#bcbcbc 45%,#a4a4a4 50%,#b2b2b2);border:1px solid #707070"></div>
<div style="left:483px;top:1014px;width:22px;height:23px;background:linear-gradient(#d2d2d2,#bcbcbc 45%,#a4a4a4 50%,#b2b2b2);border:1px solid #707070"></div>
<div style="left:505px;top:1014px;width:22px;height:23px;background:linear-gradient(#d2d2d2,#bcbcbc 45%,#a4a4a4 50%,#b2b2b2);border:1px solid #707070"></div>
<div style="left:1555px;top:1014px;width:50px;height:23px;background:linear-gradient(#d2d2d2,#bcbcbc 45%,#a4a4a4 50%,#b2b2b2);border:1px solid #707070"></div>
<div class="t" style="left:1558.5px;top:1020.77px;font-size:11.5px;color:#111;letter-spacing:-0.928px;">MODELP</div>
<div style="left:1606px;top:1014px;width:22px;height:23px;background:linear-gradient(#d2d2d2,#bcbcbc 45%,#a4a4a4 50%,#b2b2b2);border:1px solid #707070"></div>
<div style="left:1628px;top:1014px;width:22px;height:23px;background:linear-gradient(#d2d2d2,#bcbcbc 45%,#a4a4a4 50%,#b2b2b2);border:1px solid #707070"></div>
<div style="left:1662px;top:1014px;width:50px;height:23px;background:linear-gradient(#d2d2d2,#bcbcbc 45%,#a4a4a4 50%,#b2b2b2);border:1px solid #707070"></div>
<div class="t" style="left:1685px;top:1020.34px;font-size:12px;color:#111;letter-spacing:-0.227px;">1:1</div>
<svg style="left:1703px;top:1022px;" width="8" height="5" viewBox="0 0 8 5"><path d="M0 0.5 L8 0.5 L4 4.5Z" fill="#111"/></svg>
<div style="left:1713px;top:1014px;width:22px;height:23px;background:linear-gradient(#d2d2d2,#bcbcbc 45%,#a4a4a4 50%,#b2b2b2);border:1px solid #707070"></div>
<div style="left:1735px;top:1014px;width:22px;height:23px;background:linear-gradient(#d2d2d2,#bcbcbc 45%,#a4a4a4 50%,#b2b2b2);border:1px solid #707070"></div>
<div style="left:1763px;top:1014px;width:22px;height:23px;background:linear-gradient(#d2d2d2,#bcbcbc 45%,#a4a4a4 50%,#b2b2b2);border:1px solid #707070"></div>
<div style="left:1785px;top:1014px;width:22px;height:23px;background:linear-gradient(#d2d2d2,#bcbcbc 45%,#a4a4a4 50%,#b2b2b2);border:1px solid #707070"></div>
<div style="left:1807px;top:1014px;width:22px;height:23px;background:linear-gradient(#d2d2d2,#bcbcbc 45%,#a4a4a4 50%,#b2b2b2);border:1px solid #707070"></div>
<div style="left:1831px;top:1014px;width:33px;height:23px;background:#8c8c8c;border:1px solid #707070"></div>
<div style="left:1835px;top:1017px;width:24px;height:17px;background:#a2a2a2;border:1px solid #6c6c6c"></div>
<div style="left:1865px;top:1014px;width:11px;height:23px;background:linear-gradient(#d2d2d2,#bcbcbc 45%,#a4a4a4 50%,#b2b2b2);border:1px solid #707070"></div>
<svg style="left:1867px;top:1023px;" width="7" height="5" viewBox="0 0 7 5"><path d="M0 0.5 L7 0.5 L3.5 4.5Z" fill="#111"/></svg>
<div style="left:1876px;top:1014px;width:22px;height:23px;background:linear-gradient(#d2d2d2,#bcbcbc 45%,#a4a4a4 50%,#b2b2b2);border:1px solid #707070"></div>
<svg style="left:1900px;top:1023px;" width="13" height="13" viewBox="0 0 13 13"><g fill="#d8d8d8"><rect x="9" y="1" width="2.4" height="2.4"/><rect x="5" y="5" width="2.4" height="2.4"/><rect x="9" y="5" width="2.4" height="2.4"/><rect x="1" y="9" width="2.4" height="2.4"/><rect x="5" y="9" width="2.4" height="2.4"/><rect x="9" y="9" width="2.4" height="2.4"/></g></svg>
<svg style="left:314px;top:193px" width="1549" height="745" viewBox="314 193 1549 745" shape-rendering="crispEdges"><defs><linearGradient id="cyl" x1="0" y1="0" x2="1" y2="0"><stop offset="0" stop-color="#5a5a68"/><stop offset="0.35" stop-color="#8c8c94"/><stop offset="1" stop-color="#4a4a58"/></linearGradient><linearGradient id="rod" x1="0" y1="0" x2="1" y2="0"><stop offset="0" stop-color="#5e5e6c"/><stop offset="0.4" stop-color="#84848e"/><stop offset="1" stop-color="#565664"/></linearGradient><linearGradient id="fil" x1="0" y1="0" x2="0" y2="1"><stop offset="0" stop-color="#5a5a6a"/><stop offset="1" stop-color="#82828c"/></linearGradient><linearGradient id="cbx" x1="0" y1="0" x2="1" y2="0"><stop offset="0" stop-color="#70707c"/><stop offset="0.5" stop-color="#8a8a92"/><stop offset="1" stop-color="#666674"/></linearGradient></defs><polygon points="1040.2,876.3 1387.3,675.9 953.9,425.6 606.8,626.0" fill="#87878b" stroke="#08080c" stroke-width="1" stroke-linejoin="round" /><polygon points="1040.2,876.3 606.8,626.0 606.8,638.0 1040.2,888.3" fill="#74747e" stroke="#08080c" stroke-width="1" stroke-linejoin="round" /><polygon points="1040.2,876.3 1387.3,675.9 1387.3,687.9 1040.2,888.3" fill="#5f5f6e" stroke="#08080c" stroke-width="1" stroke-linejoin="round" /><ellipse cx="877.5" cy="696.0" rx="1.6" ry="1.1" fill="#1c1c24"/><ellipse cx="855.8" cy="708.6" rx="1.6" ry="1.1" fill="#1c1c24"/><ellipse cx="834.1" cy="721.2" rx="1.6" ry="1.1" fill="#1c1c24"/><ellipse cx="812.4" cy="733.8" rx="1.6" ry="1.1" fill="#1c1c24"/><ellipse cx="899.2" cy="708.6" rx="1.6" ry="1.1" fill="#1c1c24"/><ellipse cx="877.5" cy="721.2" rx="1.6" ry="1.1" fill="#1c1c24"/><ellipse cx="855.8" cy="733.8" rx="1.6" ry="1.1" fill="#1c1c24"/><ellipse cx="834.1" cy="746.4" rx="1.6" ry="1.1" fill="#1c1c24"/><ellipse cx="920.9" cy="721.2" rx="1.6" ry="1.1" fill="#1c1c24"/><ellipse cx="899.2" cy="733.8" rx="1.6" ry="1.1" fill="#1c1c24"/><ellipse cx="877.5" cy="746.4" rx="1.6" ry="1.1" fill="#1c1c24"/><ellipse cx="855.8" cy="759.0" rx="1.6" ry="1.1" fill="#1c1c24"/><ellipse cx="942.6" cy="733.8" rx="1.6" ry="1.1" fill="#1c1c24"/><ellipse cx="920.9" cy="746.4" rx="1.6" ry="1.1" fill="#1c1c24"/><ellipse cx="899.2" cy="759.0" rx="1.6" ry="1.1" fill="#1c1c24"/><ellipse cx="877.5" cy="771.6" rx="1.6" ry="1.1" fill="#1c1c24"/><ellipse cx="832" cy="507" rx="1.6" ry="1" fill="#1c1c24"/><ellipse cx="845" cy="514" rx="1.6" ry="1" fill="#1c1c24"/><ellipse cx="838" cy="519" rx="1.6" ry="1" fill="#1c1c24"/><ellipse cx="843" cy="522" rx="1.6" ry="1" fill="#1c1c24"/><ellipse cx="1309" cy="697" rx="1.6" ry="1" fill="#1c1c24"/><polygon points="1288.7,730.3 1302.6,722.3 878.3,477.3 864.4,485.3" fill="none" stroke="#08080c" stroke-width="0.8" stroke-linejoin="round" /><polygon points="1288.7,726.3 1295.7,722.3 871.3,477.3 864.4,481.3" fill="#6a6a76" stroke="#08080c" stroke-width="0.8" stroke-linejoin="round" /><polygon points="1288.7,726.3 864.4,481.3 864.4,485.8 1288.7,730.8" fill="#4a4a56" stroke="#08080c" stroke-width="0.8" stroke-linejoin="round" /><polygon points="1288.7,726.3 1295.7,722.3 1295.7,726.8 1288.7,730.8" fill="#2c2c36" stroke="#08080c" stroke-width="0.8" stroke-linejoin="round" /><polyline points="1291.3,723.8 868.7,479.8" fill="none" stroke="#1c1c24" stroke-width="3.0" stroke-dasharray="1.2 1.7"/><polyline points="1285.7,732.5 861.4,487.5" fill="none" stroke="#2a2a32" stroke-width="1.8" stroke-dasharray="1.4 1.6"/><polyline points="1280.5,733.5 859.6,490.5" fill="none" stroke="#4a4a54" stroke-width="1.1" stroke-dasharray="1.2 2.6"/><ellipse cx="1286.2" cy="715.8" rx="3.2" ry="2" fill="#15151c"/><ellipse cx="1260.2" cy="700.8" rx="3.2" ry="2" fill="#15151c"/><ellipse cx="1234.2" cy="685.8" rx="3.2" ry="2" fill="#15151c"/><ellipse cx="1208.2" cy="670.8" rx="3.2" ry="2" fill="#15151c"/><ellipse cx="1182.2" cy="655.8" rx="3.2" ry="2" fill="#15151c"/><ellipse cx="1156.2" cy="640.8" rx="3.2" ry="2" fill="#15151c"/><ellipse cx="1130.3" cy="625.8" rx="3.2" ry="2" fill="#15151c"/><ellipse cx="1104.3" cy="610.8" rx="3.2" ry="2" fill="#15151c"/><ellipse cx="1078.3" cy="595.8" rx="3.2" ry="2" fill="#15151c"/><ellipse cx="1052.3" cy="580.8" rx="3.2" ry="2" fill="#15151c"/><ellipse cx="1026.3" cy="565.8" rx="3.2" ry="2" fill="#15151c"/><ellipse cx="1000.4" cy="550.8" rx="3.2" ry="2" fill="#15151c"/><ellipse cx="974.4" cy="535.8" rx="3.2" ry="2" fill="#15151c"/><ellipse cx="948.4" cy="520.8" rx="3.2" ry="2" fill="#15151c"/><ellipse cx="922.4" cy="505.8" rx="3.2" ry="2" fill="#15151c"/><ellipse cx="896.4" cy="490.8" rx="3.2" ry="2" fill="#15151c"/><ellipse cx="1255.0" cy="723.3" rx="1.6" ry="1.0" fill="#1c1c24"/><ellipse cx="1229.0" cy="708.3" rx="1.6" ry="1.0" fill="#1c1c24"/><ellipse cx="1203.0" cy="693.3" rx="1.6" ry="1.0" fill="#1c1c24"/><ellipse cx="1177.0" cy="678.3" rx="1.6" ry="1.0" fill="#1c1c24"/><ellipse cx="1151.1" cy="663.3" rx="1.6" ry="1.0" fill="#1c1c24"/><ellipse cx="1125.1" cy="648.3" rx="1.6" ry="1.0" fill="#1c1c24"/><ellipse cx="1099.1" cy="633.3" rx="1.6" ry="1.0" fill="#1c1c24"/><ellipse cx="1073.1" cy="618.3" rx="1.6" ry="1.0" fill="#1c1c24"/><ellipse cx="1047.1" cy="603.3" rx="1.6" ry="1.0" fill="#1c1c24"/><ellipse cx="1021.1" cy="588.3" rx="1.6" ry="1.0" fill="#1c1c24"/><ellipse cx="995.2" cy="573.3" rx="1.6" ry="1.0" fill="#1c1c24"/><ellipse cx="969.2" cy="558.3" rx="1.6" ry="1.0" fill="#1c1c24"/><ellipse cx="943.2" cy="543.3" rx="1.6" ry="1.0" fill="#1c1c24"/><ellipse cx="917.2" cy="528.3" rx="1.6" ry="1.0" fill="#1c1c24"/><ellipse cx="891.2" cy="513.3" rx="1.6" ry="1.0" fill="#1c1c24"/><ellipse cx="865.3" cy="498.3" rx="1.6" ry="1.0" fill="#1c1c24"/><polygon points="1184.0,790.8 1197.8,782.8 773.5,537.8 759.6,545.8" fill="none" stroke="#08080c" stroke-width="0.8" stroke-linejoin="round" /><polygon points="1184.0,786.8 1190.9,782.8 766.5,537.8 759.6,541.8" fill="#6a6a76" stroke="#08080c" stroke-width="0.8" stroke-linejoin="round" /><polygon points="1184.0,786.8 759.6,541.8 759.6,546.3 1184.0,791.3" fill="#4a4a56" stroke="#08080c" stroke-width="0.8" stroke-linejoin="round" /><polygon points="1184.0,786.8 1190.9,782.8 1190.9,787.3 1184.0,791.3" fill="#2c2c36" stroke="#08080c" stroke-width="0.8" stroke-linejoin="round" /><polyline points="1186.6,784.3 763.9,540.3" fill="none" stroke="#1c1c24" stroke-width="3.0" stroke-dasharray="1.2 1.7"/><polyline points="1180.9,793.0 756.6,548.0" fill="none" stroke="#2a2a32" stroke-width="1.8" stroke-dasharray="1.4 1.6"/><polyline points="1175.7,794.0 754.8,551.0" fill="none" stroke="#4a4a54" stroke-width="1.1" stroke-dasharray="1.2 2.6"/><ellipse cx="1181.4" cy="776.3" rx="3.2" ry="2" fill="#15151c"/><ellipse cx="1155.4" cy="761.3" rx="3.2" ry="2" fill="#15151c"/><ellipse cx="1129.4" cy="746.3" rx="3.2" ry="2" fill="#15151c"/><ellipse cx="1103.4" cy="731.3" rx="3.2" ry="2" fill="#15151c"/><ellipse cx="1077.4" cy="716.3" rx="3.2" ry="2" fill="#15151c"/><ellipse cx="1051.5" cy="701.3" rx="3.2" ry="2" fill="#15151c"/><ellipse cx="1025.5" cy="686.3" rx="3.2" ry="2" fill="#15151c"/><ellipse cx="999.5" cy="671.3" rx="3.2" ry="2" fill="#15151c"/><ellipse cx="973.5" cy="656.3" rx="3.2" ry="2" fill="#15151c"/><ellipse cx="947.5" cy="641.3" rx="3.2" ry="2" fill="#15151c"/><ellipse cx="921.6" cy="626.3" rx="3.2" ry="2" fill="#15151c"/><ellipse cx="895.6" cy="611.3" rx="3.2" ry="2" fill="#15151c"/><ellipse cx="869.6" cy="596.3" rx="3.2" ry="2" fill="#15151c"/><ellipse cx="843.6" cy="581.3" rx="3.2" ry="2" fill="#15151c"/><ellipse cx="817.6" cy="566.3" rx="3.2" ry="2" fill="#15151c"/><ellipse cx="791.7" cy="551.3" rx="3.2" ry="2" fill="#15151c"/><ellipse cx="1150.2" cy="783.8" rx="1.6" ry="1.0" fill="#1c1c24"/><ellipse cx="1124.2" cy="768.8" rx="1.6" ry="1.0" fill="#1c1c24"/><ellipse cx="1098.2" cy="753.8" rx="1.6" ry="1.0" fill="#1c1c24"/><ellipse cx="1072.2" cy="738.8" rx="1.6" ry="1.0" fill="#1c1c24"/><ellipse cx="1046.3" cy="723.8" rx="1.6" ry="1.0" fill="#1c1c24"/><ellipse cx="1020.3" cy="708.8" rx="1.6" ry="1.0" fill="#1c1c24"/><ellipse cx="994.3" cy="693.8" rx="1.6" ry="1.0" fill="#1c1c24"/><ellipse cx="968.3" cy="678.8" rx="1.6" ry="1.0" fill="#1c1c24"/><ellipse cx="942.3" cy="663.8" rx="1.6" ry="1.0" fill="#1c1c24"/><ellipse cx="916.4" cy="648.8" rx="1.6" ry="1.0" fill="#1c1c24"/><ellipse cx="890.4" cy="633.8" rx="1.6" ry="1.0" fill="#1c1c24"/><ellipse cx="864.4" cy="618.8" rx="1.6" ry="1.0" fill="#1c1c24"/><ellipse cx="838.4" cy="603.8" rx="1.6" ry="1.0" fill="#1c1c24"/><ellipse cx="812.4" cy="588.8" rx="1.6" ry="1.0" fill="#1c1c24"/><ellipse cx="786.5" cy="573.8" rx="1.6" ry="1.0" fill="#1c1c24"/><ellipse cx="760.5" cy="558.8" rx="1.6" ry="1.0" fill="#1c1c24"/><polygon points="1070.1,490.8 1109.0,468.4 1020.8,417.5 982.0,439.9" fill="#87878b" stroke="#08080c" stroke-width="1" stroke-linejoin="round" /><polygon points="1070.1,490.8 1109.0,468.4 1109.0,517.4 1070.1,539.8" fill="#5a5a6a" stroke="#08080c" stroke-width="1" stroke-linejoin="round" /><polygon points="1053.7,432.8 1093.5,409.8 1031.8,374.2 991.9,397.2" fill="#87878b" stroke="#08080c" stroke-width="1" stroke-linejoin="round" /><polygon points="1053.7,432.8 1093.5,409.8 1093.5,459.8 1053.7,482.8" fill="#5a5a6a" stroke="#08080c" stroke-width="1" stroke-linejoin="round" /><polygon points="1070.1,539.8 1070.1,490.8 1055.0,482.1 1055.0,432.1 993.2,396.4 993.2,446.4 982.0,439.9 982.0,488.9" fill="#7c7c85" stroke="#08080c" stroke-width="1" stroke-linejoin="round" /><path d="M1060.2 428.7 V482.7 A4.4 2.5 0 0 0 1069.0 482.7 V428.7Z" fill="url(#rod)" stroke="#08080c" stroke-width="0.8"/><path d="M1073.6 420.9 V474.9 A4.4 2.5 0 0 0 1082.4 474.9 V420.9Z" fill="url(#rod)" stroke="#08080c" stroke-width="0.8"/><path d="M1086.9 413.3 V467.3 A4.4 2.5 0 0 0 1095.7 467.3 V413.3Z" fill="url(#rod)" stroke="#08080c" stroke-width="0.8"/><polygon points="1052.2,416.2 1074.5,403.3 1054.1,391.6 1031.8,404.4" fill="#87878b" stroke="#08080c" stroke-width="1" stroke-linejoin="round" /><polygon points="1052.2,416.2 1074.5,403.3 1074.5,420.8 1052.2,433.7" fill="#5a5a6a" stroke="#08080c" stroke-width="1" stroke-linejoin="round" /><polyline points="1052.2,433.7 1074.5,420.8" fill="none" stroke="#08080c" stroke-width="0.8" /><polygon points="1031.8,280.9 1054.1,268.1 1054.1,391.6 1031.8,404.4" fill="#5a5a6a" stroke="#08080c" stroke-width="1" stroke-linejoin="round" /><polygon points="1052.2,433.7 1052.2,416.2 1031.8,404.4 1031.8,280.9 990.4,257.0 990.4,398.0" fill="#82828a" stroke="#08080c" stroke-width="1" stroke-linejoin="round" /><polygon points="1031.8,394.9 1054.1,382.1 1054.1,391.6 1031.8,404.4" fill="url(#fil)" stroke="none" stroke-width="1" stroke-linejoin="round" /><polygon points="1089.6,770.8 871.3,644.8 871.3,651.4 1089.6,777.4" fill="#7c7c85" stroke="#08080c" stroke-width="1" stroke-linejoin="round" /><polygon points="1089.6,770.8 1160.6,729.8 1160.6,736.4 1089.6,777.4" fill="#5a5a6a" stroke="#08080c" stroke-width="1" stroke-linejoin="round" /><polygon points="1221.2,694.8 1293.6,653.0 1293.6,659.6 1221.2,701.4" fill="#5a5a6a" stroke="#08080c" stroke-width="1" stroke-linejoin="round" /><polygon points="1089.6,760.8 871.3,634.8 871.3,652.8 1089.6,778.8" fill="#777781" stroke="#08080c" stroke-width="1" stroke-linejoin="round" /><polygon points="1089.6,760.8 1293.6,643.0 1293.6,659.6 1221.2,701.4 1221.2,694.8 1160.6,729.8 1160.6,737.8 1089.6,778.8" fill="#5c5c6b" stroke="#08080c" stroke-width="1" stroke-linejoin="round" /><polygon points="1089.6,760.8 1293.6,643.0 1075.4,517.0 871.3,634.8" fill="#87878b" stroke="#08080c" stroke-width="1" stroke-linejoin="round" /><ellipse cx="1086.4" cy="747.2" rx="2.0" ry="1.2" fill="#565662" stroke="#08080c" stroke-width="0.9"/><ellipse cx="1064.8" cy="734.7" rx="2.0" ry="1.2" fill="#565662" stroke="#08080c" stroke-width="0.9"/><ellipse cx="1043.1" cy="722.2" rx="2.0" ry="1.2" fill="#565662" stroke="#08080c" stroke-width="0.9"/><ellipse cx="1021.5" cy="709.7" rx="2.0" ry="1.2" fill="#565662" stroke="#08080c" stroke-width="0.9"/><ellipse cx="999.8" cy="697.2" rx="2.0" ry="1.2" fill="#565662" stroke="#08080c" stroke-width="0.9"/><ellipse cx="978.2" cy="684.7" rx="2.0" ry="1.2" fill="#565662" stroke="#08080c" stroke-width="0.9"/><ellipse cx="956.5" cy="672.2" rx="2.0" ry="1.2" fill="#565662" stroke="#08080c" stroke-width="0.9"/><ellipse cx="934.9" cy="659.7" rx="2.0" ry="1.2" fill="#565662" stroke="#08080c" stroke-width="0.9"/><ellipse cx="913.2" cy="647.2" rx="2.0" ry="1.2" fill="#565662" stroke="#08080c" stroke-width="0.9"/><ellipse cx="891.6" cy="634.7" rx="2.0" ry="1.2" fill="#565662" stroke="#08080c" stroke-width="0.9"/><ellipse cx="1104.6" cy="736.7" rx="2.0" ry="1.2" fill="#565662" stroke="#08080c" stroke-width="0.9"/><ellipse cx="1083.0" cy="724.2" rx="2.0" ry="1.2" fill="#565662" stroke="#08080c" stroke-width="0.9"/><ellipse cx="1061.3" cy="711.7" rx="2.0" ry="1.2" fill="#565662" stroke="#08080c" stroke-width="0.9"/><ellipse cx="1039.7" cy="699.2" rx="2.0" ry="1.2" fill="#565662" stroke="#08080c" stroke-width="0.9"/><ellipse cx="1018.0" cy="686.7" rx="2.0" ry="1.2" fill="#565662" stroke="#08080c" stroke-width="0.9"/><ellipse cx="996.4" cy="674.2" rx="2.0" ry="1.2" fill="#565662" stroke="#08080c" stroke-width="0.9"/><ellipse cx="974.7" cy="661.7" rx="2.0" ry="1.2" fill="#565662" stroke="#08080c" stroke-width="0.9"/><ellipse cx="953.1" cy="649.2" rx="2.0" ry="1.2" fill="#565662" stroke="#08080c" stroke-width="0.9"/><ellipse cx="931.4" cy="636.7" rx="2.0" ry="1.2" fill="#565662" stroke="#08080c" stroke-width="0.9"/><ellipse cx="909.8" cy="624.2" rx="2.0" ry="1.2" fill="#565662" stroke="#08080c" stroke-width="0.9"/><ellipse cx="1126.0" cy="724.3" rx="2.0" ry="1.2" fill="#565662" stroke="#08080c" stroke-width="0.9"/><ellipse cx="1104.4" cy="711.8" rx="2.0" ry="1.2" fill="#565662" stroke="#08080c" stroke-width="0.9"/><ellipse cx="1082.7" cy="699.3" rx="2.0" ry="1.2" fill="#565662" stroke="#08080c" stroke-width="0.9"/><ellipse cx="1061.1" cy="686.8" rx="2.0" ry="1.2" fill="#565662" stroke="#08080c" stroke-width="0.9"/><ellipse cx="1039.4" cy="674.3" rx="2.0" ry="1.2" fill="#565662" stroke="#08080c" stroke-width="0.9"/><ellipse cx="1017.8" cy="661.8" rx="2.0" ry="1.2" fill="#565662" stroke="#08080c" stroke-width="0.9"/><ellipse cx="996.1" cy="649.3" rx="2.0" ry="1.2" fill="#565662" stroke="#08080c" stroke-width="0.9"/><ellipse cx="974.5" cy="636.8" rx="2.0" ry="1.2" fill="#565662" stroke="#08080c" stroke-width="0.9"/><ellipse cx="952.8" cy="624.3" rx="2.0" ry="1.2" fill="#565662" stroke="#08080c" stroke-width="0.9"/><ellipse cx="931.2" cy="611.8" rx="2.0" ry="1.2" fill="#565662" stroke="#08080c" stroke-width="0.9"/><ellipse cx="1147.4" cy="712.0" rx="2.0" ry="1.2" fill="#565662" stroke="#08080c" stroke-width="0.9"/><ellipse cx="1125.8" cy="699.5" rx="2.0" ry="1.2" fill="#565662" stroke="#08080c" stroke-width="0.9"/><ellipse cx="1104.1" cy="687.0" rx="2.0" ry="1.2" fill="#565662" stroke="#08080c" stroke-width="0.9"/><ellipse cx="1082.5" cy="674.5" rx="2.0" ry="1.2" fill="#565662" stroke="#08080c" stroke-width="0.9"/><ellipse cx="1060.8" cy="662.0" rx="2.0" ry="1.2" fill="#565662" stroke="#08080c" stroke-width="0.9"/><ellipse cx="1039.2" cy="649.5" rx="2.0" ry="1.2" fill="#565662" stroke="#08080c" stroke-width="0.9"/><ellipse cx="1017.5" cy="637.0" rx="2.0" ry="1.2" fill="#565662" stroke="#08080c" stroke-width="0.9"/><ellipse cx="995.9" cy="624.5" rx="2.0" ry="1.2" fill="#565662" stroke="#08080c" stroke-width="0.9"/><ellipse cx="974.2" cy="612.0" rx="2.0" ry="1.2" fill="#565662" stroke="#08080c" stroke-width="0.9"/><ellipse cx="952.6" cy="599.5" rx="2.0" ry="1.2" fill="#565662" stroke="#08080c" stroke-width="0.9"/><ellipse cx="1168.8" cy="699.6" rx="2.0" ry="1.2" fill="#565662" stroke="#08080c" stroke-width="0.9"/><ellipse cx="1147.2" cy="687.1" rx="2.0" ry="1.2" fill="#565662" stroke="#08080c" stroke-width="0.9"/><ellipse cx="1125.5" cy="674.6" rx="2.0" ry="1.2" fill="#565662" stroke="#08080c" stroke-width="0.9"/><ellipse cx="1103.9" cy="662.1" rx="2.0" ry="1.2" fill="#565662" stroke="#08080c" stroke-width="0.9"/><ellipse cx="1082.2" cy="649.6" rx="2.0" ry="1.2" fill="#565662" stroke="#08080c" stroke-width="0.9"/><ellipse cx="1060.6" cy="637.1" rx="2.0" ry="1.2" fill="#565662" stroke="#08080c" stroke-width="0.9"/><ellipse cx="1038.9" cy="624.6" rx="2.0" ry="1.2" fill="#565662" stroke="#08080c" stroke-width="0.9"/><ellipse cx="1017.3" cy="612.1" rx="2.0" ry="1.2" fill="#565662" stroke="#08080c" stroke-width="0.9"/><ellipse cx="995.6" cy="599.6" rx="2.0" ry="1.2" fill="#565662" stroke="#08080c" stroke-width="0.9"/><ellipse cx="973.9" cy="587.1" rx="2.0" ry="1.2" fill="#565662" stroke="#08080c" stroke-width="0.9"/><ellipse cx="1190.2" cy="687.3" rx="2.0" ry="1.2" fill="#565662" stroke="#08080c" stroke-width="0.9"/><ellipse cx="1168.5" cy="674.8" rx="2.0" ry="1.2" fill="#565662" stroke="#08080c" stroke-width="0.9"/><ellipse cx="1146.9" cy="662.3" rx="2.0" ry="1.2" fill="#565662" stroke="#08080c" stroke-width="0.9"/><ellipse cx="1125.2" cy="649.8" rx="2.0" ry="1.2" fill="#565662" stroke="#08080c" stroke-width="0.9"/><ellipse cx="1103.6" cy="637.3" rx="2.0" ry="1.2" fill="#565662" stroke="#08080c" stroke-width="0.9"/><ellipse cx="1081.9" cy="624.8" rx="2.0" ry="1.2" fill="#565662" stroke="#08080c" stroke-width="0.9"/><ellipse cx="1060.3" cy="612.3" rx="2.0" ry="1.2" fill="#565662" stroke="#08080c" stroke-width="0.9"/><ellipse cx="1038.6" cy="599.8" rx="2.0" ry="1.2" fill="#565662" stroke="#08080c" stroke-width="0.9"/><ellipse cx="1017.0" cy="587.3" rx="2.0" ry="1.2" fill="#565662" stroke="#08080c" stroke-width="0.9"/><ellipse cx="995.3" cy="574.8" rx="2.0" ry="1.2" fill="#565662" stroke="#08080c" stroke-width="0.9"/><ellipse cx="1211.6" cy="674.9" rx="2.0" ry="1.2" fill="#565662" stroke="#08080c" stroke-width="0.9"/><ellipse cx="1189.9" cy="662.4" rx="2.0" ry="1.2" fill="#565662" stroke="#08080c" stroke-width="0.9"/><ellipse cx="1168.3" cy="649.9" rx="2.0" ry="1.2" fill="#565662" stroke="#08080c" stroke-width="0.9"/><ellipse cx="1146.6" cy="637.4" rx="2.0" ry="1.2" fill="#565662" stroke="#08080c" stroke-width="0.9"/><ellipse cx="1125.0" cy="624.9" rx="2.0" ry="1.2" fill="#565662" stroke="#08080c" stroke-width="0.9"/><ellipse cx="1103.3" cy="612.4" rx="2.0" ry="1.2" fill="#565662" stroke="#08080c" stroke-width="0.9"/><ellipse cx="1081.7" cy="599.9" rx="2.0" ry="1.2" fill="#565662" stroke="#08080c" stroke-width="0.9"/><ellipse cx="1060.0" cy="587.4" rx="2.0" ry="1.2" fill="#565662" stroke="#08080c" stroke-width="0.9"/><ellipse cx="1038.4" cy="574.9" rx="2.0" ry="1.2" fill="#565662" stroke="#08080c" stroke-width="0.9"/><ellipse cx="1016.7" cy="562.4" rx="2.0" ry="1.2" fill="#565662" stroke="#08080c" stroke-width="0.9"/><ellipse cx="1233.0" cy="662.6" rx="2.0" ry="1.2" fill="#565662" stroke="#08080c" stroke-width="0.9"/><ellipse cx="1211.3" cy="650.1" rx="2.0" ry="1.2" fill="#565662" stroke="#08080c" stroke-width="0.9"/><ellipse cx="1189.7" cy="637.6" rx="2.0" ry="1.2" fill="#565662" stroke="#08080c" stroke-width="0.9"/><ellipse cx="1168.0" cy="625.1" rx="2.0" ry="1.2" fill="#565662" stroke="#08080c" stroke-width="0.9"/><ellipse cx="1146.4" cy="612.6" rx="2.0" ry="1.2" fill="#565662" stroke="#08080c" stroke-width="0.9"/><ellipse cx="1124.7" cy="600.1" rx="2.0" ry="1.2" fill="#565662" stroke="#08080c" stroke-width="0.9"/><ellipse cx="1103.1" cy="587.6" rx="2.0" ry="1.2" fill="#565662" stroke="#08080c" stroke-width="0.9"/><ellipse cx="1081.4" cy="575.1" rx="2.0" ry="1.2" fill="#565662" stroke="#08080c" stroke-width="0.9"/><ellipse cx="1059.8" cy="562.6" rx="2.0" ry="1.2" fill="#565662" stroke="#08080c" stroke-width="0.9"/><ellipse cx="1038.1" cy="550.1" rx="2.0" ry="1.2" fill="#565662" stroke="#08080c" stroke-width="0.9"/><ellipse cx="1254.4" cy="650.2" rx="2.0" ry="1.2" fill="#565662" stroke="#08080c" stroke-width="0.9"/><ellipse cx="1232.7" cy="637.8" rx="2.0" ry="1.2" fill="#565662" stroke="#08080c" stroke-width="0.9"/><ellipse cx="1211.1" cy="625.2" rx="2.0" ry="1.2" fill="#565662" stroke="#08080c" stroke-width="0.9"/><ellipse cx="1189.4" cy="612.8" rx="2.0" ry="1.2" fill="#565662" stroke="#08080c" stroke-width="0.9"/><ellipse cx="1167.8" cy="600.2" rx="2.0" ry="1.2" fill="#565662" stroke="#08080c" stroke-width="0.9"/><ellipse cx="1146.1" cy="587.8" rx="2.0" ry="1.2" fill="#565662" stroke="#08080c" stroke-width="0.9"/><ellipse cx="1124.5" cy="575.2" rx="2.0" ry="1.2" fill="#565662" stroke="#08080c" stroke-width="0.9"/><ellipse cx="1102.8" cy="562.8" rx="2.0" ry="1.2" fill="#565662" stroke="#08080c" stroke-width="0.9"/><ellipse cx="1081.2" cy="550.2" rx="2.0" ry="1.2" fill="#565662" stroke="#08080c" stroke-width="0.9"/><ellipse cx="1059.5" cy="537.8" rx="2.0" ry="1.2" fill="#565662" stroke="#08080c" stroke-width="0.9"/><ellipse cx="1274.9" cy="638.4" rx="2.0" ry="1.2" fill="#565662" stroke="#08080c" stroke-width="0.9"/><ellipse cx="1253.2" cy="625.9" rx="2.0" ry="1.2" fill="#565662" stroke="#08080c" stroke-width="0.9"/><ellipse cx="1231.6" cy="613.4" rx="2.0" ry="1.2" fill="#565662" stroke="#08080c" stroke-width="0.9"/><ellipse cx="1209.9" cy="600.9" rx="2.0" ry="1.2" fill="#565662" stroke="#08080c" stroke-width="0.9"/><ellipse cx="1188.3" cy="588.4" rx="2.0" ry="1.2" fill="#565662" stroke="#08080c" stroke-width="0.9"/><ellipse cx="1166.6" cy="575.9" rx="2.0" ry="1.2" fill="#565662" stroke="#08080c" stroke-width="0.9"/><ellipse cx="1145.0" cy="563.4" rx="2.0" ry="1.2" fill="#565662" stroke="#08080c" stroke-width="0.9"/><ellipse cx="1123.3" cy="550.9" rx="2.0" ry="1.2" fill="#565662" stroke="#08080c" stroke-width="0.9"/><ellipse cx="1101.7" cy="538.4" rx="2.0" ry="1.2" fill="#565662" stroke="#08080c" stroke-width="0.9"/><ellipse cx="1080.0" cy="525.9" rx="2.0" ry="1.2" fill="#565662" stroke="#08080c" stroke-width="0.9"/><ellipse cx="1083.7" cy="561.7" rx="5.6" ry="3.6" fill="#6c6c76" stroke="#08080c" stroke-width="0.9"/><path d="M1078.7 561.2 A5.6 3.6 0 0 1 1088.7 561.2 A6 2.6 0 0 0 1078.7 561.2Z" fill="#4a4a58"/><ellipse cx="1059.2" cy="575.7" rx="5.6" ry="3.6" fill="#6c6c76" stroke="#08080c" stroke-width="0.9"/><path d="M1054.2 575.2 A5.6 3.6 0 0 1 1064.2 575.2 A6 2.6 0 0 0 1054.2 575.2Z" fill="#4a4a58"/><ellipse cx="1079.2" cy="586.7" rx="5.6" ry="3.6" fill="#6c6c76" stroke="#08080c" stroke-width="0.9"/><path d="M1074.2 586.2 A5.6 3.6 0 0 1 1084.2 586.2 A6 2.6 0 0 0 1074.2 586.2Z" fill="#4a4a58"/><ellipse cx="1029.5" cy="592.5" rx="5.6" ry="3.6" fill="#6c6c76" stroke="#08080c" stroke-width="0.9"/><path d="M1024.5 592.0 A5.6 3.6 0 0 1 1034.5 592.0 A6 2.6 0 0 0 1024.5 592.0Z" fill="#4a4a58"/><ellipse cx="1039.2" cy="598.7" rx="5.6" ry="3.6" fill="#6c6c76" stroke="#08080c" stroke-width="0.9"/><path d="M1034.2 598.2 A5.6 3.6 0 0 1 1044.2 598.2 A6 2.6 0 0 0 1034.2 598.2Z" fill="#4a4a58"/><ellipse cx="1005.0" cy="606.2" rx="5.6" ry="3.6" fill="#6c6c76" stroke="#08080c" stroke-width="0.9"/><path d="M1000.0 605.7 A5.6 3.6 0 0 1 1010.0 605.7 A6 2.6 0 0 0 1000.0 605.7Z" fill="#4a4a58"/><ellipse cx="1015.5" cy="612.5" rx="5.6" ry="3.6" fill="#6c6c76" stroke="#08080c" stroke-width="0.9"/><path d="M1010.5 612.0 A5.6 3.6 0 0 1 1020.5 612.0 A6 2.6 0 0 0 1010.5 612.0Z" fill="#4a4a58"/><ellipse cx="975.5" cy="623.7" rx="5.6" ry="3.6" fill="#6c6c76" stroke="#08080c" stroke-width="0.9"/><path d="M970.5 623.2 A5.6 3.6 0 0 1 980.5 623.2 A6 2.6 0 0 0 970.5 623.2Z" fill="#4a4a58"/><ellipse cx="995.2" cy="635.0" rx="5.6" ry="3.6" fill="#6c6c76" stroke="#08080c" stroke-width="0.9"/><path d="M990.2 634.5 A5.6 3.6 0 0 1 1000.2 634.5 A6 2.6 0 0 0 990.2 634.5Z" fill="#4a4a58"/><ellipse cx="951.2" cy="638.7" rx="5.6" ry="3.6" fill="#6c6c76" stroke="#08080c" stroke-width="0.9"/><path d="M946.2 638.2 A5.6 3.6 0 0 1 956.2 638.2 A6 2.6 0 0 0 946.2 638.2Z" fill="#4a4a58"/><ellipse cx="970.0" cy="649.5" rx="5.6" ry="3.6" fill="#6c6c76" stroke="#08080c" stroke-width="0.9"/><path d="M965.0 649.0 A5.6 3.6 0 0 1 975.0 649.0 A6 2.6 0 0 0 965.0 649.0Z" fill="#4a4a58"/><ellipse cx="1086.2" cy="688.0" rx="5.6" ry="3.6" fill="#6c6c76" stroke="#08080c" stroke-width="0.9"/><path d="M1081.2 687.5 A5.6 3.6 0 0 1 1091.2 687.5 A6 2.6 0 0 0 1081.2 687.5Z" fill="#4a4a58"/><ellipse cx="1061.2" cy="702.0" rx="5.6" ry="3.6" fill="#6c6c76" stroke="#08080c" stroke-width="0.9"/><path d="M1056.2 701.5 A5.6 3.6 0 0 1 1066.2 701.5 A6 2.6 0 0 0 1056.2 701.5Z" fill="#4a4a58"/><ellipse cx="1081.2" cy="713.7" rx="5.6" ry="3.6" fill="#6c6c76" stroke="#08080c" stroke-width="0.9"/><path d="M1076.2 713.2 A5.6 3.6 0 0 1 1086.2 713.2 A6 2.6 0 0 0 1076.2 713.2Z" fill="#4a4a58"/><ellipse cx="1098.7" cy="572.5" rx="5.6" ry="3.6" fill="#6c6c76" stroke="#08080c" stroke-width="0.9"/><path d="M1093.7 572.0 A5.6 3.6 0 0 1 1103.7 572.0 A6 2.6 0 0 0 1093.7 572.0Z" fill="#4a4a58"/><ellipse cx="1193.0" cy="625.0" rx="5.6" ry="3.6" fill="#6c6c76" stroke="#08080c" stroke-width="0.9"/><path d="M1188.0 624.5 A5.6 3.6 0 0 1 1198.0 624.5 A6 2.6 0 0 0 1188.0 624.5Z" fill="#4a4a58"/><ellipse cx="1168.0" cy="640.0" rx="5.6" ry="3.6" fill="#6c6c76" stroke="#08080c" stroke-width="0.9"/><path d="M1163.0 639.5 A5.6 3.6 0 0 1 1173.0 639.5 A6 2.6 0 0 0 1163.0 639.5Z" fill="#4a4a58"/><ellipse cx="1213.0" cy="637.0" rx="5.6" ry="3.6" fill="#6c6c76" stroke="#08080c" stroke-width="0.9"/><path d="M1208.0 636.5 A5.6 3.6 0 0 1 1218.0 636.5 A6 2.6 0 0 0 1208.0 636.5Z" fill="#4a4a58"/><ellipse cx="1190.0" cy="651.0" rx="5.6" ry="3.6" fill="#6c6c76" stroke="#08080c" stroke-width="0.9"/><path d="M1185.0 650.5 A5.6 3.6 0 0 1 1195.0 650.5 A6 2.6 0 0 0 1185.0 650.5Z" fill="#4a4a58"/><ellipse cx="1104.0" cy="700.0" rx="5.6" ry="3.6" fill="#6c6c76" stroke="#08080c" stroke-width="0.9"/><path d="M1099.0 699.5 A5.6 3.6 0 0 1 1109.0 699.5 A6 2.6 0 0 0 1099.0 699.5Z" fill="#4a4a58"/><polygon points="797.8,352.0 1054.5,203.8 1030.0,189.7 773.3,337.9" fill="#87878b" stroke="#08080c" stroke-width="1" stroke-linejoin="round" /><polygon points="797.8,352.0 773.3,337.9 773.3,461.9 797.8,476.0" fill="#7c7c85" stroke="#08080c" stroke-width="1" stroke-linejoin="round" /><polygon points="797.8,352.0 1054.5,203.8 1054.5,327.8 797.8,476.0" fill="#5a5a6a" stroke="#08080c" stroke-width="1" stroke-linejoin="round" /><polygon points="818.8,635.9 857.7,613.4 769.6,562.5 730.7,585.0" fill="#87878b" stroke="#08080c" stroke-width="1" stroke-linejoin="round" /><polygon points="818.8,635.9 857.7,613.4 857.7,662.4 818.8,684.9" fill="#5a5a6a" stroke="#08080c" stroke-width="1" stroke-linejoin="round" /><polygon points="804.0,576.9 843.9,553.9 782.1,518.3 742.3,541.3" fill="#87878b" stroke="#08080c" stroke-width="1" stroke-linejoin="round" /><polygon points="804.0,576.9 843.9,553.9 843.9,603.9 804.0,626.9" fill="#5a5a6a" stroke="#08080c" stroke-width="1" stroke-linejoin="round" /><polygon points="818.8,684.9 818.8,635.9 803.7,627.1 803.7,577.1 741.9,541.5 741.9,591.5 730.7,585.0 730.7,634.0" fill="#7c7c85" stroke="#08080c" stroke-width="1" stroke-linejoin="round" /><path d="M808.9 573.8 V627.8 A4.4 2.5 0 0 0 817.7 627.8 V573.8Z" fill="url(#rod)" stroke="#08080c" stroke-width="0.8"/><path d="M822.4 566.0 V620.0 A4.4 2.5 0 0 0 831.2 620.0 V566.0Z" fill="url(#rod)" stroke="#08080c" stroke-width="0.8"/><path d="M835.6 558.4 V612.4 A4.4 2.5 0 0 0 844.4 612.4 V558.4Z" fill="url(#rod)" stroke="#08080c" stroke-width="0.8"/><polygon points="823.1,548.4 845.3,535.6 825.0,523.8 802.7,536.7" fill="#87878b" stroke="#08080c" stroke-width="1" stroke-linejoin="round" /><polygon points="823.1,548.4 845.3,535.6 845.3,553.1 823.1,565.9" fill="#5a5a6a" stroke="#08080c" stroke-width="1" stroke-linejoin="round" /><polyline points="823.1,565.9 845.3,553.1" fill="none" stroke="#08080c" stroke-width="0.8" /><polygon points="802.7,413.2 825.0,400.3 825.0,523.8 802.7,536.7" fill="#5a5a6a" stroke="#08080c" stroke-width="1" stroke-linejoin="round" /><polygon points="823.1,565.9 823.1,548.4 802.7,536.7 802.7,413.2 761.3,389.3 761.3,530.3" fill="#82828a" stroke="#08080c" stroke-width="1" stroke-linejoin="round" /><polygon points="802.7,527.2 825.0,514.3 825.0,523.8 802.7,536.7" fill="url(#fil)" stroke="none" stroke-width="1" stroke-linejoin="round" /><polygon points="739.6,406.5 1086.7,206.1 1075.5,199.7 728.4,400.1" fill="#87878b" stroke="#08080c" stroke-width="1" stroke-linejoin="round" /><polygon points="739.6,406.5 728.4,400.1 728.4,520.1 739.6,526.5" fill="#7c7c85" stroke="#08080c" stroke-width="1" stroke-linejoin="round" /><polygon points="739.6,406.5 1086.7,206.1 1086.7,326.1 739.6,526.5" fill="#5a5a6a" stroke="#08080c" stroke-width="1" stroke-linejoin="round" /><polygon points="739.0,417.2 1085.8,216.9 1085.8,236.4 739.0,436.7" fill="#6a6a78" stroke="#08080c" stroke-width="0.8" stroke-linejoin="round" /><polygon points="739.0,417.2 1085.8,216.9 1088.4,220.9 741.6,421.2" fill="#8e8e98" stroke="#08080c" stroke-width="0.7" stroke-linejoin="round" /><polygon points="741.6,421.2 1088.4,220.9 1088.4,228.9 741.6,429.2" fill="#4a4a58" stroke="#08080c" stroke-width="0.7" stroke-linejoin="round" /><polyline points="748.5,421.2 1086.7,225.9" fill="none" stroke="#17171e" stroke-width="3.0" stroke-dasharray="1.3 1.7"/><polyline points="743.3,420.5 1086.7,222.2" fill="none" stroke="#b8b8c2" stroke-width="0.9" stroke-dasharray="2.2 1.8"/><polygon points="741.6,420.2 747.7,416.7 747.7,428.7 741.6,432.2" fill="#7a7a86" stroke="#08080c" stroke-width="1" stroke-linejoin="round" /><polygon points="736.4,415.2 741.6,420.2 741.6,432.2 736.4,427.2" fill="#3a3a46" stroke="#08080c" stroke-width="1" stroke-linejoin="round" /><rect x="743.1" y="422.4" width="3" height="4" fill="#16161c"/><circle cx="753.3" cy="423.9" r="2.4" fill="#4a4a58" stroke="#08080c" stroke-width="1.1"/><circle cx="753.3" cy="423.9" r="0.9" fill="#22222a"/><circle cx="779.3" cy="408.9" r="2.4" fill="#4a4a58" stroke="#08080c" stroke-width="1.1"/><circle cx="779.3" cy="408.9" r="0.9" fill="#22222a"/><circle cx="805.2" cy="393.9" r="2.4" fill="#4a4a58" stroke="#08080c" stroke-width="1.1"/><circle cx="805.2" cy="393.9" r="0.9" fill="#22222a"/><circle cx="831.2" cy="378.9" r="2.4" fill="#4a4a58" stroke="#08080c" stroke-width="1.1"/><circle cx="831.2" cy="378.9" r="0.9" fill="#22222a"/><circle cx="857.2" cy="363.9" r="2.4" fill="#4a4a58" stroke="#08080c" stroke-width="1.1"/><circle cx="857.2" cy="363.9" r="0.9" fill="#22222a"/><circle cx="883.2" cy="348.9" r="2.4" fill="#4a4a58" stroke="#08080c" stroke-width="1.1"/><circle cx="883.2" cy="348.9" r="0.9" fill="#22222a"/><circle cx="909.2" cy="333.9" r="2.4" fill="#4a4a58" stroke="#08080c" stroke-width="1.1"/><circle cx="909.2" cy="333.9" r="0.9" fill="#22222a"/><polygon points="739.0,500.6 1085.8,300.3 1085.8,319.8 739.0,520.1" fill="#6a6a78" stroke="#08080c" stroke-width="0.8" stroke-linejoin="round" /><polygon points="739.0,500.6 1085.8,300.3 1088.4,304.3 741.6,504.6" fill="#8e8e98" stroke="#08080c" stroke-width="0.7" stroke-linejoin="round" /><polygon points="741.6,504.6 1088.4,304.3 1088.4,312.3 741.6,512.6" fill="#4a4a58" stroke="#08080c" stroke-width="0.7" stroke-linejoin="round" /><polyline points="748.5,504.6 1086.7,309.3" fill="none" stroke="#17171e" stroke-width="3.0" stroke-dasharray="1.3 1.7"/><polyline points="743.3,503.9 1086.7,305.6" fill="none" stroke="#b8b8c2" stroke-width="0.9" stroke-dasharray="2.2 1.8"/><polygon points="741.6,503.6 747.7,500.1 747.7,512.1 741.6,515.6" fill="#7a7a86" stroke="#08080c" stroke-width="1" stroke-linejoin="round" /><polygon points="736.4,498.6 741.6,503.6 741.6,515.6 736.4,510.6" fill="#3a3a46" stroke="#08080c" stroke-width="1" stroke-linejoin="round" /><rect x="743.1" y="505.8" width="3" height="4" fill="#16161c"/><circle cx="753.3" cy="507.3" r="2.4" fill="#4a4a58" stroke="#08080c" stroke-width="1.1"/><circle cx="753.3" cy="507.3" r="0.9" fill="#22222a"/><circle cx="779.3" cy="492.3" r="2.4" fill="#4a4a58" stroke="#08080c" stroke-width="1.1"/><circle cx="779.3" cy="492.3" r="0.9" fill="#22222a"/><circle cx="805.2" cy="477.3" r="2.4" fill="#4a4a58" stroke="#08080c" stroke-width="1.1"/><circle cx="805.2" cy="477.3" r="0.9" fill="#22222a"/><circle cx="831.2" cy="462.3" r="2.4" fill="#4a4a58" stroke="#08080c" stroke-width="1.1"/><circle cx="831.2" cy="462.3" r="0.9" fill="#22222a"/><circle cx="857.2" cy="447.3" r="2.4" fill="#4a4a58" stroke="#08080c" stroke-width="1.1"/><circle cx="857.2" cy="447.3" r="0.9" fill="#22222a"/><circle cx="883.2" cy="432.3" r="2.4" fill="#4a4a58" stroke="#08080c" stroke-width="1.1"/><circle cx="883.2" cy="432.3" r="0.9" fill="#22222a"/><circle cx="909.2" cy="417.3" r="2.4" fill="#4a4a58" stroke="#08080c" stroke-width="1.1"/><circle cx="909.2" cy="417.3" r="0.9" fill="#22222a"/><polyline points="879.7,387.9 909.2,370.9" fill="none" stroke="#08080c" stroke-width="0.8" /><polygon points="906.6,328.1 917.8,321.6 909.2,316.6 897.9,323.1" fill="#74747f" stroke="#08080c" stroke-width="0.8" stroke-linejoin="round" /><polygon points="906.6,328.1 897.9,323.1 897.9,346.1 906.6,351.1" fill="#4e4e5a" stroke="#08080c" stroke-width="0.8" stroke-linejoin="round" /><polygon points="906.6,328.1 917.8,321.6 917.8,344.6 906.6,351.1" fill="#383844" stroke="#08080c" stroke-width="0.8" stroke-linejoin="round" /><circle cx="912.2" cy="336.9" r="2" fill="#16161c"/><rect x="900.7" y="333.6" width="3" height="8" fill="#8a8a94" stroke="#08080c" stroke-width="0.6"/><polygon points="906.6,411.6 917.8,405.1 909.2,400.1 897.9,406.6" fill="#74747f" stroke="#08080c" stroke-width="0.8" stroke-linejoin="round" /><polygon points="906.6,411.6 897.9,406.6 897.9,429.6 906.6,434.6" fill="#4e4e5a" stroke="#08080c" stroke-width="0.8" stroke-linejoin="round" /><polygon points="906.6,411.6 917.8,405.1 917.8,428.1 906.6,434.6" fill="#383844" stroke="#08080c" stroke-width="0.8" stroke-linejoin="round" /><circle cx="912.2" cy="420.4" r="2" fill="#16161c"/><rect x="900.7" y="417.1" width="3" height="8" fill="#8a8a94" stroke="#08080c" stroke-width="0.6"/><polygon points="935.5,295.0 916.2,283.9 916.2,473.9 935.5,485.0" fill="#7e7e87" stroke="#08080c" stroke-width="1" stroke-linejoin="round" /><polygon points="935.5,295.0 1051.5,228.0 1051.5,418.0 935.5,485.0" fill="#62626f" stroke="#08080c" stroke-width="1" stroke-linejoin="round" /><polygon points="935.5,295.0 1051.5,228.0 1032.2,216.9 916.2,283.9" fill="#87878b" stroke="#08080c" stroke-width="1" stroke-linejoin="round" /><polygon points="947.1,301.8 1063.1,234.8 1045.0,224.3 929.0,291.3" fill="#5c5c6b" stroke="#08080c" stroke-width="0.8" stroke-linejoin="round" /><polygon points="996.9,262.3 1029.8,243.3 1025.5,240.8 992.6,259.8" fill="#84848c" stroke="#08080c" stroke-width="0.7" stroke-linejoin="round" /><polygon points="959.2,296.2 947.1,289.2 947.1,500.1 959.2,507.1" fill="#80808a" stroke="#08080c" stroke-width="1" stroke-linejoin="round" /><polygon points="959.2,296.2 1080.1,226.4 1080.1,437.2 959.2,507.1" fill="#5a5a6a" stroke="#08080c" stroke-width="1" stroke-linejoin="round" /><polygon points="959.2,296.2 1080.1,226.4 1070.4,220.8 949.5,290.6" fill="#87878b" stroke="#08080c" stroke-width="1" stroke-linejoin="round" /><polygon points="1085.0,223.1 1095.4,217.1 1086.7,212.1 1076.3,218.1" fill="#8a8a90" stroke="#08080c" stroke-width="0.8" stroke-linejoin="round" /><polygon points="1085.0,223.1 1076.3,218.1 1076.3,237.1 1085.0,242.1" fill="#6a6a74" stroke="#08080c" stroke-width="0.8" stroke-linejoin="round" /><polygon points="1085.0,223.1 1095.4,217.1 1095.4,236.1 1085.0,242.1" fill="#4c4c5a" stroke="#08080c" stroke-width="0.8" stroke-linejoin="round" /><rect x="1088.2" y="226.6" width="4" height="6" fill="#3a3a46" stroke="#08080c" stroke-width="0.6"/><polygon points="1085.0,306.1 1095.4,300.1 1086.7,295.1 1076.3,301.1" fill="#8a8a90" stroke="#08080c" stroke-width="0.8" stroke-linejoin="round" /><polygon points="1085.0,306.1 1076.3,301.1 1076.3,327.1 1085.0,332.1" fill="#6a6a74" stroke="#08080c" stroke-width="0.8" stroke-linejoin="round" /><polygon points="1085.0,306.1 1095.4,300.1 1095.4,326.1 1085.0,332.1" fill="#4c4c5a" stroke="#08080c" stroke-width="0.8" stroke-linejoin="round" /><rect x="1088.2" y="313.1" width="4" height="6" fill="#3a3a46" stroke="#08080c" stroke-width="0.6"/><path d="M940.5 374 L944.5 371 V406 L940.5 409Z" fill="#8a8a94" stroke="#08080c" stroke-width="0.8"/><path d="M940.5 454 L944.5 451 V486 L940.5 489Z" fill="#8a8a94" stroke="#08080c" stroke-width="0.8"/><path d="M1017.0 464 V484 A21.5 7 0 0 0 1060.0 484 V464Z" fill="url(#cyl)" stroke="#08080c"/><path d="M1019.5 486 V489 A19 6 0 0 0 1057.5 489 V486" fill="url(#cyl)" stroke="#08080c"/><path d="M1031.0 492 V506 A7.5 2.6 0 0 0 1046.0 506 V492Z" fill="url(#cyl)" stroke="#08080c"/><polygon points="1044.0,357.2 1079.0,337.0 1037.9,313.3 1003.0,333.5" fill="#87878b" stroke="#08080c" stroke-width="1" stroke-linejoin="round" /><polygon points="1044.0,357.2 1003.0,333.5 1003.0,449.5 1044.0,473.2" fill="#7b7b83" stroke="#08080c" stroke-width="1" stroke-linejoin="round" /><polygon points="1044.0,357.2 1079.0,337.0 1079.0,453.0 1044.0,473.2" fill="#5c5c6c" stroke="#08080c" stroke-width="1" stroke-linejoin="round" /><path d="M1021.1 403.6 V449.4 H1024.3 V403.6Z" fill="#6a6a76" stroke="#08080c" stroke-width="1"/><path d="M1024.3 403.6 V449.4" stroke="#08080c" stroke-width="1.6"/><circle cx="1013.0" cy="398.9" r="1.4" fill="#08080c"/><circle cx="1031.1" cy="409.4" r="1.4" fill="#08080c"/><circle cx="1013.0" cy="444.1" r="1.4" fill="#08080c"/><circle cx="1031.1" cy="454.6" r="1.4" fill="#08080c"/><polyline points="1005.0,339.6 1005.0,441.6" fill="none" stroke="#3a3a44" stroke-width="0.8" stroke-dasharray="1 1.5"/><path d="M1046 364 Q1046 357 1052 355 L1074 352.5 Q1086.5 351.5 1086.5 361 V392 L1063 406 L1047 398 Z" fill="#5e5e6d" stroke="#08080c"/><path d="M1046 364 Q1046 357 1052 355 L1058 354.4 Q1064 355.5 1064 364 V405.5 L1063 406 L1047 398 Z" fill="url(#cbx)" stroke="#08080c" stroke-width="0.9"/><path d="M1052 355 L1074 352.5 Q1086.5 351.5 1086.5 361 L1064 366 Q1064 355.5 1058 354.4Z" fill="#77778a" stroke="#08080c" stroke-width="0.8"/><polyline points="959.5,193.0 959.5,296.0" fill="none" stroke="#111" stroke-width="1" /></svg>
<div class="t" style="left:319.8px;top:199.72px;font-size:12.5px;color:#f6f6f6;font-weight:bold;font-weight:bold;letter-spacing:-0.786px;">[−][JZ Iso][Koncepční]</div>
<svg style="left:500px;top:240px;" width="110" height="95" viewBox="0 0 110 95"><path d="M54.5 3 V90" stroke="#1c1ca0" stroke-width="1"/><path d="M5.3 32.2 L79.8 74.3" stroke="#2c9a2c" stroke-width="1"/><path d="M29 74.3 L103.7 32.2" stroke="#b42222" stroke-width="1"/><rect x="51.5" y="57.5" width="6" height="6" fill="none" stroke="#1e8a1e" stroke-width="1"/><path d="M52 60.5 H57" stroke="#222" stroke-width="1"/></svg>
<svg style="left:320px;top:825px;" width="100" height="75" viewBox="0 0 100 75"><defs><linearGradient id="ug" x1="0" y1="0" x2="0.5" y2="1"><stop offset="0" stop-color="#4ee04e"/><stop offset="1" stop-color="#128a12"/></linearGradient><linearGradient id="ur" x1="0" y1="0" x2="-0.5" y2="1"><stop offset="0" stop-color="#f05050"/><stop offset="1" stop-color="#b01818"/></linearGradient><linearGradient id="ub" x1="0" y1="0" x2="1" y2="0"><stop offset="0" stop-color="#1848b8"/><stop offset="0.6" stop-color="#1a56cc"/><stop offset="1" stop-color="#0c2c88"/></linearGradient></defs><path d="M45.4 60 L12.5 41 L9.8 45.3 L43 64.6 Z" fill="url(#ug)"/><path d="M45.4 60 L78 41.2 L81 45.6 L48 64.6 Z" fill="url(#ur)"/><rect x="42.8" y="22" width="5.2" height="42.8" fill="url(#ub)"/><rect x="43.6" y="23" width="2.4" height="2.4" fill="#9ad8ff"/><text x="43" y="20" font-family="Liberation Sans, sans-serif" font-size="18" fill="#3a78e0" textLength="14" lengthAdjust="spacingAndGlyphs">Z</text><text x="7.5" y="39" font-family="Liberation Sans, sans-serif" font-size="18" fill="#2e9e2e" textLength="13.5" lengthAdjust="spacingAndGlyphs">Y</text><text x="76.5" y="39" font-family="Liberation Sans, sans-serif" font-size="18" fill="#d03a3a" textLength="13.5" lengthAdjust="spacingAndGlyphs">X</text></svg>
<svg style="left:1700px;top:220px;" width="160" height="170" viewBox="0 0 160 170"><defs><linearGradient id="vc1" x1="0" y1="0" x2="1" y2="1"><stop offset="0" stop-color="#e2e2e2"/><stop offset="1" stop-color="#cacaca"/></linearGradient></defs><ellipse cx="81" cy="83.9" rx="56.3" ry="32.5" fill="none" stroke="#cccccc" stroke-width="11.5"/><text x="29" y="111" font-family="Liberation Sans, sans-serif" font-size="15" fill="none" stroke="#d6d6d6" stroke-width="0.9" transform="rotate(-28 35 105)">Z</text><text x="120" y="112" font-family="Liberation Sans, sans-serif" font-size="15" fill="none" stroke="#d6d6d6" stroke-width="0.9" transform="rotate(28 126 106)">J</text><text x="36" y="57" font-family="Liberation Sans, sans-serif" font-size="12" fill="none" stroke="#d2d2d2" stroke-width="0.8" transform="rotate(28 40 52)">S</text><text x="116" y="55" font-family="Liberation Sans, sans-serif" font-size="12" fill="none" stroke="#d2d2d2" stroke-width="0.8" transform="rotate(-28 120 50)">V</text><path d="M81.1 17.3 L115.7 33.9 L81.1 52 L46.5 33.9 Z" fill="#dadada" stroke="#8a8a8a" stroke-width="0.8"/><path d="M46.5 33.9 L81.1 52 L81.1 93.7 L48 73.2 Z" fill="url(#vc1)" stroke="#8a8a8a" stroke-width="0.8"/><path d="M115.7 33.9 L81.1 52 L81.1 93.7 L113.7 73.2 Z" fill="#d4d4d4" stroke="#8a8a8a" stroke-width="0.8"/><path d="M81.1 45 L88 49 L88 56 L81.1 60 L74 56 L74 49Z" fill="#d8d8e2" opacity="0.8"/><text font-family="Liberation Sans, sans-serif" font-weight="bold" fill="#6e6e7c" font-size="8" transform="matrix(0.866,-0.5,0.866,0.5,67.5,42)" textLength="33" lengthAdjust="spacingAndGlyphs">SHORA</text><text font-family="Liberation Sans, sans-serif" font-weight="bold" fill="#6e6e7c" font-size="8.5" transform="matrix(0.866,0.5,0,1,52.5,62.5)" textLength="26" lengthAdjust="spacingAndGlyphs">ZLEVA</text><text font-family="Liberation Sans, sans-serif" font-weight="bold" fill="#6e6e7c" font-size="8.5" transform="matrix(0.866,-0.5,0,1,83,77.5)" textLength="35" lengthAdjust="spacingAndGlyphs">ZEPŘEDU</text><rect x="45.4" y="141.7" width="71" height="16.6" rx="3" fill="#d3d3dc"/><path d="M103.5 148 H112 L107.8 153.5 Z" fill="none" stroke="#9a9aa6" stroke-width="0.9"/></svg>
<div class="t" style="left:1749.6px;top:363.49px;font-size:11px;color:#7c7c88;letter-spacing:-0.429px;">Bez názvu</div>
<svg width="0" height="0" style="left:0;top:0"><defs><linearGradient id="ig" x1="0" y1="0" x2="1" y2="1"><stop offset="0" stop-color="#ffffff"/><stop offset="1" stop-color="#c8ccd6"/></linearGradient><linearGradient id="igh" x1="0" y1="0" x2="1" y2="0"><stop offset="0" stop-color="#d8dae0"/><stop offset="0.4" stop-color="#ffffff"/><stop offset="1" stop-color="#b8bcc6"/></linearGradient><radialGradient id="igr" cx="0.4" cy="0.35" r="0.7"><stop offset="0" stop-color="#ffffff"/><stop offset="1" stop-color="#b4b8c2"/></radialGradient><linearGradient id="grd" x1="0" y1="0" x2="1" y2="1"><stop offset="0" stop-color="#e8eaee"/><stop offset="1" stop-color="#6a707c"/></linearGradient><pattern id="chk" width="3" height="3" patternUnits="userSpaceOnUse"><rect width="3" height="3" fill="#fff"/><rect width="1.5" height="1.5" fill="#555"/><rect x="1.5" y="1.5" width="1.5" height="1.5" fill="#555"/></pattern><pattern id="chkb" width="2" height="2" patternUnits="userSpaceOnUse"><rect width="2" height="2" fill="#d8ecfa"/><rect width="1" height="1" fill="#5aa0e0"/><rect x="1" y="1" width="1" height="1" fill="#5aa0e0"/></pattern><pattern id="hat" width="2.5" height="2.5" patternUnits="userSpaceOnUse" patternTransform="rotate(45)"><rect width="2.5" height="2.5" fill="#fff"/><rect width="1" height="2.5" fill="#666"/></pattern></defs></svg>
<svg style="left:59.5px;top:8px" width="17" height="17" viewBox="0 0 16 16"><path d="M2.5 2.5 H10 L13.5 6 V13.5 H2.5Z" fill="url(#ig)" stroke="#333" stroke-width="1" /><path d="M10 2.5 V6 H13.5" fill="none" stroke="#333" stroke-width="0.9" /></svg>
<svg style="left:83.5px;top:8px" width="17" height="17" viewBox="0 0 16 16"><path d="M1.5 12.5 V3.5 H5.5 L7 5 H12.5 V7" fill="#f4f4f4" stroke="#333" stroke-width="1" /><path d="M1.5 12.5 L4.5 7 H15.5 L12.5 12.5Z" fill="#c4c8d2" stroke="#333" stroke-width="1" /></svg>
<svg style="left:107.5px;top:8px" width="17" height="17" viewBox="0 0 16 16"><rect x="2.5" y="2.5" width="11" height="11" fill="#5e687c" stroke="#2a2e38" stroke-width="1" /><rect x="4.5" y="2.5" width="7" height="4.5" fill="#e8eaf2" stroke="#2a2e38" stroke-width="0.6" /><rect x="5" y="9.5" width="6" height="4" fill="#dfe2ea" stroke="#2a2e38" stroke-width="0.6" /><rect x="6" y="10.5" width="1.6" height="2" fill="#333" stroke="none" stroke-width="1" /></svg>
<svg style="left:131px;top:8px" width="17" height="17" viewBox="0 0 16 16"><rect x="2.5" y="2.5" width="11" height="11" fill="#5e687c" stroke="#2a2e38" stroke-width="1" /><rect x="4.5" y="2.5" width="7" height="4.5" fill="#e8eaf2" stroke="#2a2e38" stroke-width="0.6" /><rect x="5" y="9.5" width="6" height="4" fill="#dfe2ea" stroke="#2a2e38" stroke-width="0.6" /><rect x="6" y="10.5" width="1.6" height="2" fill="#333" stroke="none" stroke-width="1" /><path d="M8.5 13.5 L13.5 7.5 L15.5 9 L10.5 15 L8 15.5Z" fill="#f0c030" stroke="#8a6a10" stroke-width="0.6" /></svg>
<svg style="left:154.5px;top:8px" width="17" height="17" viewBox="0 0 16 16"><path d="M4.5 6 V2.5 H11.5 V6" fill="#fff" stroke="#333" stroke-width="1" /><path d="M1.5 7.5 Q1.5 5.5 3.5 5.5 H12.5 Q14.5 5.5 14.5 7.5 V11.5 H1.5Z" fill="#ececec" stroke="#333" stroke-width="1" /><rect x="4" y="9.5" width="8" height="4.5" fill="#fff" stroke="#333" stroke-width="1" /><path d="M5.5 11.5 H10.5" fill="none" stroke="#999" stroke-width="0.8" /></svg>
<svg style="left:179.5px;top:8px" width="17" height="17" viewBox="0 0 16 16"><path d="M1.5 6.5 L6.5 2 V4.5 H9.5 Q14 4.5 14 9 V12.5 H10.5 V9.5 Q10.5 8.5 9 8.5 H6.5 V11Z" fill="#fff" stroke="#333" stroke-width="1.1" /></svg>
<svg style="left:214.5px;top:8px" width="17" height="17" viewBox="0 0 16 16"><path d="M14.5 6.5 L9.5 2 V4.5 H6.5 Q2 4.5 2 9 V12.5 H5.5 V9.5 Q5.5 8.5 7 8.5 H9.5 V11Z" fill="#8e8e8e" stroke="#c4c4c4" stroke-width="1.1" /></svg>
<svg style="left:202.5px;top:15px" width="7" height="5" viewBox="0 0 7 5"><path d="M0.5 0.5 L6.5 0.5 L3.5 4Z" fill="#222" stroke="none" stroke-width="1" /></svg>
<svg style="left:237.5px;top:15px" width="7" height="5" viewBox="0 0 7 5"><path d="M0.5 0.5 L6.5 0.5 L3.5 4Z" fill="#888" stroke="none" stroke-width="1" /></svg>
<svg style="left:251.5px;top:9px" width="15" height="15" viewBox="0 0 16 16"><rect x="7" y="0.8" width="2" height="3" fill="#fff" stroke="#333" stroke-width="0.8" transform="rotate(0 8 8)"/><rect x="7" y="0.8" width="2" height="3" fill="#fff" stroke="#333" stroke-width="0.8" transform="rotate(45 8 8)"/><rect x="7" y="0.8" width="2" height="3" fill="#fff" stroke="#333" stroke-width="0.8" transform="rotate(90 8 8)"/><rect x="7" y="0.8" width="2" height="3" fill="#fff" stroke="#333" stroke-width="0.8" transform="rotate(135 8 8)"/><rect x="7" y="0.8" width="2" height="3" fill="#fff" stroke="#333" stroke-width="0.8" transform="rotate(180 8 8)"/><rect x="7" y="0.8" width="2" height="3" fill="#fff" stroke="#333" stroke-width="0.8" transform="rotate(225 8 8)"/><rect x="7" y="0.8" width="2" height="3" fill="#fff" stroke="#333" stroke-width="0.8" transform="rotate(270 8 8)"/><rect x="7" y="0.8" width="2" height="3" fill="#fff" stroke="#333" stroke-width="0.8" transform="rotate(315 8 8)"/><circle cx="8" cy="8" r="4.6" fill="#fff" stroke="#333" stroke-width="1"/><circle cx="8" cy="8" r="2" fill="#f0f0f0" stroke="#333" stroke-width="0.9"/></svg>
<svg style="left:21px;top:85px" width="18" height="18" viewBox="0 0 16 16"><path d="M2.5 2.5 H10 L13.5 6 V13.5 H2.5Z" fill="url(#ig)" stroke="#333" stroke-width="1" /><path d="M10 2.5 V6 H13.5" fill="none" stroke="#333" stroke-width="0.9" /></svg>
<svg style="left:44px;top:85px" width="18" height="18" viewBox="0 0 16 16"><path d="M1.5 12.5 V3.5 H5.5 L7 5 H12.5 V7" fill="#f4f4f4" stroke="#333" stroke-width="1" /><path d="M1.5 12.5 L4.5 7 H15.5 L12.5 12.5Z" fill="#c4c8d2" stroke="#333" stroke-width="1" /></svg>
<svg style="left:67px;top:85px" width="18" height="18" viewBox="0 0 16 16"><rect x="2.5" y="2.5" width="11" height="11" fill="#5e687c" stroke="#2a2e38" stroke-width="1" /><rect x="4.5" y="2.5" width="7" height="4.5" fill="#e8eaf2" stroke="#2a2e38" stroke-width="0.6" /><rect x="5" y="9.5" width="6" height="4" fill="#dfe2ea" stroke="#2a2e38" stroke-width="0.6" /><rect x="6" y="10.5" width="1.6" height="2" fill="#333" stroke="none" stroke-width="1" /></svg>
<svg style="left:96px;top:85px" width="18" height="18" viewBox="0 0 16 16"><path d="M4.5 6 V2.5 H11.5 V6" fill="#fff" stroke="#333" stroke-width="1" /><path d="M1.5 7.5 Q1.5 5.5 3.5 5.5 H12.5 Q14.5 5.5 14.5 7.5 V11.5 H1.5Z" fill="#ececec" stroke="#333" stroke-width="1" /><rect x="4" y="9.5" width="8" height="4.5" fill="#fff" stroke="#333" stroke-width="1" /><path d="M5.5 11.5 H10.5" fill="none" stroke="#999" stroke-width="0.8" /></svg>
<svg style="left:119px;top:85px" width="18" height="18" viewBox="0 0 16 16"><path d="M2.5 1.5 H9 L12 4.5 V10" fill="#fff" stroke="#333" stroke-width="1" /><path d="M2.5 1.5 V12.5 H7" fill="none" stroke="#333" stroke-width="1" /><circle cx="9.5" cy="9.5" r="3.2" fill="#f4f8fc" stroke="#333" stroke-width="1.1"/><path d="M12 12 L15 15" fill="none" stroke="#333" stroke-width="1.8" /></svg>
<svg style="left:142px;top:85px" width="18" height="18" viewBox="0 0 16 16"><path d="M4.5 6 V2.5 H11.5 V6" fill="#fff" stroke="#333" stroke-width="1" /><path d="M1.5 7.5 Q1.5 5.5 3.5 5.5 H12.5 Q14.5 5.5 14.5 7.5 V11.5 H1.5Z" fill="#ececec" stroke="#333" stroke-width="1" /><rect x="4" y="9.5" width="8" height="4.5" fill="#fff" stroke="#333" stroke-width="1" /><path d="M5.5 11.5 H10.5" fill="none" stroke="#999" stroke-width="0.8" /><path d="M8 12.5 H11.5 V10.5 L15.5 13.5 L11.5 16 V14.5 H8Z" fill="#1f78d8" stroke="#0c4a98" stroke-width="0.5" /></svg>
<svg style="left:165px;top:85px" width="18" height="18" viewBox="0 0 16 16"><path d="M2 6 L7 3.5 L12 6 V12 L7 14.5 L2 12Z" fill="#eef0f4" stroke="#333" stroke-width="1" /><path d="M2 6 L7 8.5 L12 6 M7 8.5 V14.5" fill="none" stroke="#333" stroke-width="0.8" /><circle cx="10.5" cy="5.5" r="4.5" fill="#f0c040" stroke="#666" stroke-width="0.6"/><path d="M7 3 A4.5 4.5 0 0 1 10.5 1 V10 A4.5 4.5 0 0 1 7 8Z" fill="#3cb4e0" stroke="none" stroke-width="1" /><path d="M10.5 1 A4.5 4.5 0 0 1 15 5.5 H10.5Z" fill="#e05a3a" stroke="none" stroke-width="1" /><path d="M10.5 5.5 H15 A4.5 4.5 0 0 1 10.5 10Z" fill="#5cc05c" stroke="none" stroke-width="1" /></svg>
<svg style="left:193.5px;top:85px" width="18" height="18" viewBox="0 0 16 16"><path d="M4 1.5 L10 11 M12 1.5 L6 11" fill="none" stroke="#333" stroke-width="1.5" /><circle cx="4.5" cy="12.5" r="2" fill="#fff" stroke="#333" stroke-width="1.2"/><circle cx="11.5" cy="12.5" r="2" fill="#fff" stroke="#333" stroke-width="1.2"/></svg>
<svg style="left:217px;top:85px" width="18" height="18" viewBox="0 0 16 16"><path d="M2.5 1.5 H8 L10.5 4 V11.5 H2.5Z" fill="#fff" stroke="#333" stroke-width="1" /><path d="M6.5 5.5 H11.5 L14 8 V14.5 H6.5Z" fill="url(#ig)" stroke="#333" stroke-width="1" /><path d="M11.5 5.5 V8 H14" fill="none" stroke="#333" stroke-width="0.8" /></svg>
<svg style="left:240px;top:85px" width="18" height="18" viewBox="0 0 16 16"><rect x="2.5" y="2.5" width="8" height="11" fill="#c8b898" stroke="#5a4a30" stroke-width="1" /><rect x="4.5" y="1.5" width="4" height="2.5" fill="#888" stroke="#444" stroke-width="0.6" /><path d="M7.5 6.5 H12 L14.5 9 V14.5 H7.5Z" fill="url(#ig)" stroke="#333" stroke-width="1" /></svg>
<svg style="left:263px;top:85px" width="18" height="18" viewBox="0 0 16 16"><rect x="2.5" y="1.5" width="9" height="8" fill="#fff" stroke="#333" stroke-width="1" /><rect x="4" y="3" width="4" height="3.5" fill="#2a5aa8" stroke="none" stroke-width="1" /><path d="M8.5 3.5 H10" fill="none" stroke="#888" stroke-width="1" /><path d="M9 12 L14.5 5.5 L15.5 6.5 L11 13Z" fill="#c89858" stroke="#8a5a20" stroke-width="0.6" /><path d="M9 12 Q7 12 6.5 15 Q10 15 11 13Z" fill="#b05a20" stroke="#7a3a10" stroke-width="0.5" /></svg>
<svg style="left:286px;top:85px" width="18" height="18" viewBox="0 0 16 16"><rect x="2.5" y="6.5" width="9" height="5" fill="#f4f4f4" stroke="#333" stroke-width="1" /><circle cx="4.5" cy="12.5" r="1.5" fill="#fff" stroke="#333" stroke-width="1"/><circle cx="10.5" cy="12.5" r="1.5" fill="#fff" stroke="#333" stroke-width="1"/><path d="M11 1 L8.5 5 H10.5 L9 9 L13.5 4 H11.5 L13 1Z" fill="#f09020" stroke="#a85a10" stroke-width="0.5" /></svg>
<svg style="left:316px;top:85px" width="18" height="18" viewBox="0 0 16 16"><path d="M1.5 6.5 L6.5 2 V4.5 H9.5 Q14 4.5 14 9 V12.5 H10.5 V9.5 Q10.5 8.5 9 8.5 H6.5 V11Z" fill="#fff" stroke="#333" stroke-width="1.1" /></svg>
<svg style="left:351px;top:85px" width="18" height="18" viewBox="0 0 16 16"><path d="M14.5 6.5 L9.5 2 V4.5 H6.5 Q2 4.5 2 9 V12.5 H5.5 V9.5 Q5.5 8.5 7 8.5 H9.5 V11Z" fill="#f4f4f4" stroke="#b8b8b8" stroke-width="1.1" /></svg>
<svg style="left:393.5px;top:85px" width="18" height="18" viewBox="0 0 16 16"><path d="M4.5 14.5 Q2.5 11 1.5 8.5 Q1.5 7 3 7.5 L4.5 10 V3.5 Q5.3 2.3 6 3.5 V7 V2.5 Q7 1.2 7.8 2.5 V7 V3 Q8.8 1.8 9.6 3 V7.5 V4.5 Q10.5 3.5 11.3 4.5 V11 Q11.3 13 10 14.5Z" fill="#fff" stroke="#333" stroke-width="1" /></svg>
<svg style="left:416px;top:85px" width="18" height="18" viewBox="0 0 16 16"><circle cx="6" cy="6" r="4.2" fill="#f4f8fc" stroke="#333" stroke-width="1.1"/><path d="M6 3.5 V6 H8" fill="none" stroke="#333" stroke-width="0.9" /><circle cx="10.5" cy="10.5" r="2.6" fill="#fff" stroke="#333" stroke-width="1"/><path d="M12.5 12.5 L15 15" fill="none" stroke="#333" stroke-width="1.8" /></svg>
<svg style="left:438.5px;top:85px" width="18" height="18" viewBox="0 0 16 16"><rect x="1.5" y="2.5" width="10" height="8" fill="#fff" stroke="#333" stroke-width="1" /><circle cx="10.5" cy="10.5" r="2.8" fill="#f4f8fc" stroke="#333" stroke-width="1.1"/><path d="M12.5 12.5 L15 15" fill="none" stroke="#333" stroke-width="1.8" /><path d="M13 16 L16 16 L16 13Z" fill="#111" stroke="none" stroke-width="1" /></svg>
<svg style="left:461px;top:85px" width="18" height="18" viewBox="0 0 16 16"><path d="M1 4.5 L4.5 1.5 V3.5 H9 V5.5 H4.5 V7.5Z" fill="#cde" stroke="#333" stroke-width="0.8" /><circle cx="9.5" cy="9.5" r="3" fill="#f4f8fc" stroke="#333" stroke-width="1.1"/><path d="M11.8 11.8 L15 15" fill="none" stroke="#333" stroke-width="1.8" /></svg>
<svg style="left:490px;top:85px" width="18" height="18" viewBox="0 0 16 16"><rect x="2.5" y="1.5" width="10" height="13" fill="#fff" stroke="#333" stroke-width="1" /><rect x="4" y="3" width="7" height="4" fill="#2a6ab8" stroke="none" stroke-width="1" /><path d="M4.5 9.5 H10 M6 11.5 L4.5 11.5" fill="none" stroke="#666" stroke-width="0.9" /><path d="M5 12 H10" fill="none" stroke="#2a6ab8" stroke-width="1" /></svg>
<svg style="left:514px;top:85px" width="18" height="18" viewBox="0 0 16 16"><rect x="1.5" y="1.5" width="13" height="13" fill="#fff" stroke="#333" stroke-width="1" /><path d="M5.5 1.5 V14.5" fill="none" stroke="#333" stroke-width="1" /><rect x="7" y="3" width="2.6" height="2.6" fill="#8a94a8" stroke="#444" stroke-width="0.5" /><rect x="7" y="7" width="2.6" height="2.6" fill="#8a94a8" stroke="#444" stroke-width="0.5" /><rect x="7" y="11" width="2.6" height="2.6" fill="#8a94a8" stroke="#444" stroke-width="0.5" /><rect x="10.8" y="3" width="2.6" height="2.6" fill="#8a94a8" stroke="#444" stroke-width="0.5" /><rect x="10.8" y="7" width="2.6" height="2.6" fill="#8a94a8" stroke="#444" stroke-width="0.5" /><rect x="10.8" y="11" width="2.6" height="2.6" fill="#8a94a8" stroke="#444" stroke-width="0.5" /><path d="M2.8 4 H4.4 M2.8 7 H4.4 M2.8 10 H4.4" fill="none" stroke="#555" stroke-width="0.9" /></svg>
<svg style="left:536.5px;top:85px" width="18" height="18" viewBox="0 0 16 16"><path d="M3.5 1.5 H12.5 V9 L11 10 V14.5 H3.5Z" fill="#fff" stroke="#333" stroke-width="1" /><rect x="5" y="3.2" width="2.2" height="2.2" fill="#9aa" stroke="#555" stroke-width="0.5" /><rect x="5" y="6.6" width="2.2" height="2.2" fill="#9aa" stroke="#555" stroke-width="0.5" /><rect x="5" y="10" width="2.2" height="2.2" fill="#9aa" stroke="#555" stroke-width="0.5" /><rect x="8.4" y="3.2" width="2.2" height="2.2" fill="#9aa" stroke="#555" stroke-width="0.5" /><rect x="8.4" y="6.6" width="2.2" height="2.2" fill="#9aa" stroke="#555" stroke-width="0.5" /><rect x="8.4" y="10" width="2.2" height="2.2" fill="#9aa" stroke="#555" stroke-width="0.5" /><path d="M12.5 3 H14 V8 H12.5" fill="#ccd" stroke="#333" stroke-width="0.8" /></svg>
<svg style="left:560px;top:85px" width="18" height="18" viewBox="0 0 16 16"><path d="M1.5 9 L9 4.5 L14.5 9 L7 13.5Z" fill="#eef" stroke="#333" stroke-width="0.9" /><path d="M2.5 7 L10 2.5 L15 6 L8 11Z" fill="#fff" stroke="#333" stroke-width="0.9" /><path d="M5 7.5 L9.5 4.5 M7 9 L12 6" fill="none" stroke="#888" stroke-width="0.8" /><path d="M9 9 L13 12 L9 14.5Z" fill="#bcd" stroke="#333" stroke-width="0.7" /></svg>
<svg style="left:583px;top:85px" width="18" height="18" viewBox="0 0 16 16"><path d="M2 4 Q1 2 3.5 2 Q5 0.5 7 2 Q9.5 1 10 3.5 Q11.5 5 10 7 Q10.5 9.5 8 9 Q6 11 4 9 Q1.5 9.5 2 7 Q0.5 5.5 2 4Z" fill="#fff" stroke="#333" stroke-width="0.9" /><rect x="7.5" y="7.5" width="7" height="7" fill="#f4f4f4" stroke="#333" stroke-width="1" /><path d="M9 10 H13 M9 12 H13" fill="none" stroke="#666" stroke-width="0.9" /></svg>
<svg style="left:605.5px;top:85px" width="18" height="18" viewBox="0 0 16 16"><rect x="3.5" y="1.5" width="9" height="13" fill="#f4f4f4" stroke="#333" stroke-width="1" /><rect x="5" y="3" width="6" height="2.5" fill="#fff" stroke="#555" stroke-width="0.7" /><rect x="5" y="7" width="1.4" height="1.4" fill="#555" stroke="none" stroke-width="1" /><rect x="5" y="9.3" width="1.4" height="1.4" fill="#555" stroke="none" stroke-width="1" /><rect x="5" y="11.6" width="1.4" height="1.4" fill="#555" stroke="none" stroke-width="1" /><rect x="7.3" y="7" width="1.4" height="1.4" fill="#555" stroke="none" stroke-width="1" /><rect x="7.3" y="9.3" width="1.4" height="1.4" fill="#555" stroke="none" stroke-width="1" /><rect x="7.3" y="11.6" width="1.4" height="1.4" fill="#555" stroke="none" stroke-width="1" /><rect x="9.6" y="7" width="1.4" height="1.4" fill="#555" stroke="none" stroke-width="1" /><rect x="9.6" y="9.3" width="1.4" height="1.4" fill="#555" stroke="none" stroke-width="1" /><rect x="9.6" y="11.6" width="1.4" height="1.4" fill="#555" stroke="none" stroke-width="1" /></svg>
<svg style="left:635px;top:85px" width="18" height="18" viewBox="0 0 16 16"><rect x="1.5" y="1.5" width="13" height="13" fill="#f8f8f8" stroke="#333" stroke-width="1" /><text x="4.6" y="12.6" font-family="Liberation Sans, sans-serif" font-size="12" font-weight='bold' fill="#222" >?</text></svg>
<svg style="left:668px;top:85px" width="18" height="18" viewBox="0 0 16 16"><text x="0.5" y="13" font-family="Liberation Sans, sans-serif" font-size="15"  fill="#222" >A</text><path d="M8 13 L14.5 4 L15.5 5 L10 14Z" fill="#c89858" stroke="#8a5a20" stroke-width="0.6" /><path d="M8 13 Q6.5 13.5 6 16 Q9.5 15.5 10 14Z" fill="#b05a20" stroke="#7a3a10" stroke-width="0.5" /></svg>
<svg style="left:817px;top:85px" width="18" height="18" viewBox="0 0 16 16"><path d="M1.5 9 V15 M14.5 9 V15 M1.5 12.5 H14.5 M1.5 12.5 L4 11 M1.5 12.5 L4 14 M14.5 12.5 L12 11 M14.5 12.5 L12 14" fill="none" stroke="#333" stroke-width="1" /><path d="M6 9 L13 1.5 L14.5 3 L8 10Z" fill="#c89858" stroke="#8a5a20" stroke-width="0.6" /><path d="M6 9 Q4 9 3.5 11 Q7 11.5 8 10Z" fill="#b05a20" stroke="#7a3a10" stroke-width="0.5" /></svg>
<svg style="left:966px;top:85px" width="18" height="18" viewBox="0 0 16 16"><rect x="1.5" y="2.5" width="11" height="9" fill="#fff" stroke="#333" stroke-width="1" /><path d="M1.5 5 H12.5 M1.5 8 H12.5 M5 2.5 V11.5 M9 2.5 V11.5" fill="none" stroke="#555" stroke-width="0.8" /><path d="M8 13 L14 6 L15.3 7.2 L10 14Z" fill="#c89858" stroke="#8a5a20" stroke-width="0.6" /><path d="M8 13 Q6.5 13.5 6 16 Q9.5 15.5 10 14Z" fill="#b05a20" stroke="#7a3a10" stroke-width="0.5" /></svg>
<svg style="left:1115px;top:85px" width="18" height="18" viewBox="0 0 16 16"><path d="M1.5 13 L5 4 L8.5 7" fill="none" stroke="#333" stroke-width="1.1" /><path d="M1.5 13 L1.8 10.5 L3.6 11.6Z" fill="#333" stroke="#333" stroke-width="0.5" /><circle cx="11" cy="4" r="2.8" fill="#fff" stroke="#333" stroke-width="1"/><path d="M8 13 L13.5 7 L14.8 8.2 L10 14Z" fill="#c89858" stroke="#8a5a20" stroke-width="0.6" /><path d="M8 13 Q6.5 13.5 6 16 Q9.5 15.5 10 14Z" fill="#b05a20" stroke="#7a3a10" stroke-width="0.5" /></svg>
<svg style="left:339px;top:92.5px" width="7" height="5" viewBox="0 0 7 5"><path d="M0.5 0.5 L6.5 0.5 L3.5 4Z" fill="#222" stroke="none" stroke-width="1" /></svg>
<svg style="left:375.5px;top:92.5px" width="7" height="5" viewBox="0 0 7 5"><path d="M0.5 0.5 L6.5 0.5 L3.5 4Z" fill="#aaa" stroke="none" stroke-width="1" /></svg>
<svg style="left:21px;top:112px" width="18" height="18" viewBox="0 0 16 16"><path d="M8 1 L10.5 4 H9 V13 H7 V4 H5.5Z" fill="#fff" stroke="#333" stroke-width="0.9" /><ellipse cx="8" cy="10.5" rx="6.5" ry="2.5" fill="none" stroke="#333" stroke-width="1" /><path d="M2.5 12.5 L1.5 9.5 L4.5 10Z" fill="#333" stroke="#333" stroke-width="0.5" /></svg>
<svg style="left:44px;top:112px" width="18" height="18" viewBox="0 0 16 16"><circle cx="7.5" cy="8.5" r="5.5" fill="#fff" stroke="#666" stroke-width="1"/><ellipse cx="7.5" cy="8.5" rx="7" ry="2.6" fill="none" stroke="#333" stroke-width="1" transform="rotate(-30 7.5 8.5)"/><circle cx="12.5" cy="3.5" r="1.8" fill="#fff" stroke="#333" stroke-width="0.9"/></svg>
<svg style="left:67px;top:112px" width="18" height="18" viewBox="0 0 16 16"><circle cx="7.5" cy="8.5" r="5.5" fill="#fff" stroke="#666" stroke-width="1"/><ellipse cx="7.5" cy="8.5" rx="7" ry="2.6" fill="none" stroke="#333" stroke-width="1" transform="rotate(-30 7.5 8.5)"/><circle cx="12.5" cy="3.5" r="1.8" fill="#fff" stroke="#333" stroke-width="0.9"/><path d="M3 13 L9 7 M9 7 H6 M9 7 V10" fill="none" stroke="#111" stroke-width="1.6" /></svg>
<svg style="left:275px;top:112px" width="18" height="18" viewBox="0 0 16 16"><rect x="7" y="0.8" width="2" height="3" fill="#fff" stroke="#333" stroke-width="0.8" transform="rotate(0 8 8)"/><rect x="7" y="0.8" width="2" height="3" fill="#fff" stroke="#333" stroke-width="0.8" transform="rotate(45 8 8)"/><rect x="7" y="0.8" width="2" height="3" fill="#fff" stroke="#333" stroke-width="0.8" transform="rotate(90 8 8)"/><rect x="7" y="0.8" width="2" height="3" fill="#fff" stroke="#333" stroke-width="0.8" transform="rotate(135 8 8)"/><rect x="7" y="0.8" width="2" height="3" fill="#fff" stroke="#333" stroke-width="0.8" transform="rotate(180 8 8)"/><rect x="7" y="0.8" width="2" height="3" fill="#fff" stroke="#333" stroke-width="0.8" transform="rotate(225 8 8)"/><rect x="7" y="0.8" width="2" height="3" fill="#fff" stroke="#333" stroke-width="0.8" transform="rotate(270 8 8)"/><rect x="7" y="0.8" width="2" height="3" fill="#fff" stroke="#333" stroke-width="0.8" transform="rotate(315 8 8)"/><circle cx="8" cy="8" r="4.6" fill="#fff" stroke="#333" stroke-width="1"/><circle cx="8" cy="8" r="2" fill="#f0f0f0" stroke="#333" stroke-width="0.9"/></svg>
<svg style="left:298px;top:112px" width="18" height="18" viewBox="0 0 16 16"><rect x="1.5" y="1.5" width="13" height="13" fill="none" stroke="#555" stroke-width="1" stroke-dasharray="1.5 1.2"/><path d="M3.5 8 L8 3.5 L12.5 8 V12.5 H3.5Z" fill="#8a8e98" stroke="#333" stroke-width="0.9" /></svg>
<svg style="left:331px;top:112px" width="18" height="18" viewBox="0 0 16 16"><path d="M2 7 L8 4 L14 7 V12 L8 15 L2 12Z" fill="#eef0f4" stroke="#333" stroke-width="1" /><path d="M2 7 L8 10 L14 7 M8 10 V15" fill="none" stroke="#333" stroke-width="0.8" /><path d="M5 5.5 L8 2 L11.5 4 L11 6.5 L8 8Z" fill="#a8d0f0" stroke="#3a6a9a" stroke-width="0.8" /></svg>
<svg style="left:360px;top:112px" width="18" height="18" viewBox="0 0 16 16"><path d="M4 7 Q3 12 6 13 H10.5 Q13 12 12.5 7Z" fill="#fff" stroke="#333" stroke-width="1" /><path d="M4 8 Q0.5 7 1.5 10 Q2.5 12 5 11" fill="none" stroke="#333" stroke-width="1" /><path d="M12.5 8.5 L15.5 5.5" fill="none" stroke="#333" stroke-width="1.3" /><path d="M5 7 Q8 5 11.5 7" fill="#fff" stroke="#333" stroke-width="0.9" /><circle cx="8.2" cy="5.3" r="0.8" fill="#333" stroke="#333" stroke-width="0.5"/></svg>
<svg style="left:388.5px;top:112px" width="18" height="18" viewBox="0 0 16 16"><path d="M8 0.5 V3" stroke="#c88a10" stroke-width="1.3" transform="rotate(0 8 8)"/><path d="M8 0.5 V3" stroke="#c88a10" stroke-width="1.3" transform="rotate(45 8 8)"/><path d="M8 0.5 V3" stroke="#c88a10" stroke-width="1.3" transform="rotate(90 8 8)"/><path d="M8 0.5 V3" stroke="#c88a10" stroke-width="1.3" transform="rotate(135 8 8)"/><path d="M8 0.5 V3" stroke="#c88a10" stroke-width="1.3" transform="rotate(180 8 8)"/><path d="M8 0.5 V3" stroke="#c88a10" stroke-width="1.3" transform="rotate(225 8 8)"/><path d="M8 0.5 V3" stroke="#c88a10" stroke-width="1.3" transform="rotate(270 8 8)"/><path d="M8 0.5 V3" stroke="#c88a10" stroke-width="1.3" transform="rotate(315 8 8)"/><circle cx="8" cy="8" r="4.3" fill="#f8c838" stroke="#b07a10" stroke-width="1"/><circle cx="8" cy="8" r="1.8" fill="#fff" stroke="none" stroke-width="1"/><path d="M12 16 L16 16 L16 12Z" fill="#111" stroke="none" stroke-width="1" /></svg>
<svg style="left:412px;top:112px" width="18" height="18" viewBox="0 0 16 16"><path d="M3 9 Q3 3 8 3 Q11 3 11 6" fill="none" stroke="#666" stroke-width="1" /><circle cx="4.5" cy="9.5" r="2.2" fill="#fff" stroke="#666" stroke-width="0.9"/><rect x="7.5" y="7.5" width="7" height="7" fill="#f4f4f4" stroke="#333" stroke-width="1" /><path d="M9 10 H13 M9 12 H13" fill="none" stroke="#555" stroke-width="0.9" /></svg>
<svg style="left:435px;top:112px" width="18" height="18" viewBox="0 0 16 16"><circle cx="7" cy="7" r="5.5" fill="url(#chk)" stroke="#333" stroke-width="1"/><rect x="8.5" y="9.5" width="6.5" height="5.5" fill="#f4f4f4" stroke="#333" stroke-width="1" /><path d="M10 11.5 H13.5 M10 13.2 H13.5" fill="none" stroke="#555" stroke-width="0.8" /></svg>
<svg style="left:457.5px;top:112px" width="18" height="18" viewBox="0 0 16 16"><circle cx="7" cy="7" r="5.5" fill="url(#chk)" stroke="#333" stroke-width="1"/><path d="M8.5 13.5 L13.5 7.5 L15.5 9 L10.5 15 L8 15.5Z" fill="#f0c030" stroke="#8a6a10" stroke-width="0.6" /></svg>
<svg style="left:481px;top:112px" width="18" height="18" viewBox="0 0 16 16"><path d="M1.5 8 L7.5 3.5 V12.5Z" fill="#dde4ee" stroke="#666" stroke-width="0.8" /><path d="M9 2 L12.5 4 V14 L9 12Z" fill="#a8d0f0" stroke="#2a6aa8" stroke-width="0.9" /><path d="M12 16 L16 16 L16 12Z" fill="#111" stroke="none" stroke-width="1" /></svg>
<svg style="left:510px;top:112px" width="18" height="18" viewBox="0 0 16 16"><rect x="1.5" y="2.5" width="13" height="11" fill="#4a5058" stroke="#222" stroke-width="1" /><path d="M2 9 Q6 5 9 9 T14 8 V13 H2Z" fill="#c8ccd4" stroke="none" stroke-width="1" /><rect x="1.5" y="2.5" width="13" height="2" fill="#222" stroke="none" stroke-width="1" /></svg>
<svg style="left:538.5px;top:112px" width="18" height="18" viewBox="0 0 16 16"><path d="M2 5 Q1.5 9 4 9.5 H7 Q9 9 8.5 5Z" fill="#fff" stroke="#333" stroke-width="0.9" /><path d="M8.5 6 L11 3.5" fill="none" stroke="#333" stroke-width="1.1" /><path d="M2.5 5 Q5.5 3.5 8 5" fill="#fff" stroke="#333" stroke-width="0.8" /><rect x="7.5" y="8.5" width="7.5" height="6" fill="#f4f4f4" stroke="#333" stroke-width="1" /><path d="M9 10.5 H13.5 M9 12.5 H13.5" fill="none" stroke="#555" stroke-width="0.8" /></svg>
<svg style="left:572px;top:112px" width="18" height="18" viewBox="0 0 16 16"><path d="M1.5 5 L6 2.5 L10.5 5 L6 7.5Z M1.5 7.5 L6 10 L10.5 7.5 M1.5 10 L6 12.5 L10.5 10" fill="#fff" stroke="#333" stroke-width="0.9" /><rect x="8.5" y="7.5" width="6.5" height="7" fill="#f4f4f4" stroke="#333" stroke-width="1" /><path d="M10 9.5 H13.5 M10 11.5 H13.5" fill="none" stroke="#555" stroke-width="0.8" /></svg>
<svg style="left:895px;top:112px" width="18" height="18" viewBox="0 0 16 16"><path d="M1.5 9 L7 6 L13 9 L7 12Z M1.5 11 L7 14 L13 11 M1.5 13 L7 16 L13 13" fill="#cfe4f6" stroke="#1f5a98" stroke-width="0.9" /><circle cx="9" cy="3.5" r="2.6" fill="#a8d0f0" stroke="#1f5a98" stroke-width="0.9"/><path d="M9 6 L10.5 10 L12 7.5Z" fill="#1f5a98" stroke="none" stroke-width="1" /></svg>
<svg style="left:918px;top:112px" width="18" height="18" viewBox="0 0 16 16"><path d="M3 7 L8.5 4.5 L14 7 L8.5 9.5Z M3 9.5 L8.5 12 L14 9.5 M3 12 L8.5 14.5 L14 12" fill="#fff" stroke="#333" stroke-width="0.9" /><path d="M1 3 L4 0.5 V2 H8 V4 H4 V5.5Z" fill="#111" stroke="none" stroke-width="1" /></svg>
<svg style="left:941px;top:112px" width="18" height="18" viewBox="0 0 16 16"><path d="M1.5 4.5 L6 2 L10.5 4.5 L6 7Z M1.5 7 L6 9.5 L10.5 7 M1.5 9.5 L6 12 L10.5 9.5" fill="#fff" stroke="#333" stroke-width="0.9" /><rect x="7.5" y="8.5" width="7.5" height="6" fill="#f4f4f4" stroke="#333" stroke-width="1" /><path d="M7.5 10.5 H15 M10 10.5 V14.5 M12.5 10.5 V14.5 M7.5 12.5 H15" fill="none" stroke="#555" stroke-width="0.7" /></svg>
<svg style="left:596.5px;top:113.5px" width="15" height="15" viewBox="0 0 16 16"><path d="M5 6.5 Q5 2 8 2 Q11 2 11 6.5 Q11 8.5 9.5 10 V11.5 H6.5 V10 Q5 8.5 5 6.5Z" fill="#f8e080" stroke="#8a6a10" stroke-width="0.9" /><rect x="6.5" y="11.5" width="3" height="2.5" fill="#ddd" stroke="#555" stroke-width="0.7" /></svg>
<svg style="left:612px;top:113.5px" width="15" height="15" viewBox="0 0 16 16"><path d="M8 1 V3.4" stroke="#a87a10" stroke-width="1.1" transform="rotate(0 8 8)"/><path d="M8 1 V3.4" stroke="#a87a10" stroke-width="1.1" transform="rotate(45 8 8)"/><path d="M8 1 V3.4" stroke="#a87a10" stroke-width="1.1" transform="rotate(90 8 8)"/><path d="M8 1 V3.4" stroke="#a87a10" stroke-width="1.1" transform="rotate(135 8 8)"/><path d="M8 1 V3.4" stroke="#a87a10" stroke-width="1.1" transform="rotate(180 8 8)"/><path d="M8 1 V3.4" stroke="#a87a10" stroke-width="1.1" transform="rotate(225 8 8)"/><path d="M8 1 V3.4" stroke="#a87a10" stroke-width="1.1" transform="rotate(270 8 8)"/><path d="M8 1 V3.4" stroke="#a87a10" stroke-width="1.1" transform="rotate(315 8 8)"/><circle cx="8" cy="8" r="3.6" fill="#f8e8a0" stroke="#a87a10" stroke-width="0.9"/></svg>
<svg style="left:629px;top:114px" width="14" height="14" viewBox="0 0 16 16"><rect x="2" y="2" width="8" height="7" fill="#e4e4e4" stroke="#aaa" stroke-width="1" /><rect x="5" y="5" width="8" height="7" fill="#e8e8e8" stroke="#aaa" stroke-width="1" /><circle cx="11" cy="11" r="3" fill="#d0d0d0" stroke="#aaa" stroke-width="1"/></svg>
<svg style="left:645.5px;top:113.5px" width="15" height="15" viewBox="0 0 16 16"><rect x="3" y="8" width="9" height="6.5" fill="#a8d0ee" stroke="#1f5a98" stroke-width="1" /><path d="M9 8 V5 Q9 2 12 2 Q15 2 15 5 V6" fill="none" stroke="#1f5a98" stroke-width="1.5" /><path d="M7.5 10 V12.5" fill="none" stroke="#1f5a98" stroke-width="1.2" /></svg>
<div style="left:664px;top:116px;width:10px;height:10px;background:#fff;border:1px solid #111"></div>
<div style="left:977px;top:116px;width:10px;height:10px;background:#fff;border:1px solid #111"></div>
<svg style="left:21px;top:139px" width="18" height="18" viewBox="0 0 16 16"><path d="M2.5 3 L7 5.5 V14 L2.5 10Z" fill="#dfe2e8" stroke="#333" stroke-width="1" /><path d="M7 5.5 L11 2.5 V9 L9.5 10.5 V14 L7 14Z" fill="#fff" stroke="#333" stroke-width="1" /><path d="M2.5 3 L6.5 1 L11 2.5 L7 5.5Z" fill="#fff" stroke="#333" stroke-width="1" /></svg>
<svg style="left:44px;top:139px" width="18" height="18" viewBox="0 0 16 16"><path d="M2.5 5.5 H10.5 V13.5 H2.5Z" fill="url(#ig)" stroke="#333" stroke-width="1" /><path d="M2.5 5.5 L5.5 2.5 H13.5 L10.5 5.5Z" fill="#fff" stroke="#333" stroke-width="1" /><path d="M10.5 5.5 L13.5 2.5 V10.5 L10.5 13.5Z" fill="#eef0f4" stroke="#333" stroke-width="1" /></svg>
<svg style="left:67px;top:139px" width="18" height="18" viewBox="0 0 16 16"><path d="M2.5 13.5 V2.5 L11 11Z" fill="url(#ig)" stroke="#333" stroke-width="1" /><path d="M2.5 2.5 L5 1.5 L14 11.5 L11 11Z" fill="#fff" stroke="#333" stroke-width="1" /><path d="M2.5 13.5 L11 11 L14 11.5 L5.5 14.5Z" fill="#fff" stroke="#333" stroke-width="0.8" /></svg>
<svg style="left:90px;top:139px" width="18" height="18" viewBox="0 0 16 16"><path d="M8 1.5 L14 12 Q8 16 2 12Z" fill="url(#igh)" stroke="#333" stroke-width="1" /></svg>
<svg style="left:113px;top:139px" width="18" height="18" viewBox="0 0 16 16"><circle cx="8" cy="8" r="6.3" fill="url(#igr)" stroke="#333" stroke-width="1"/></svg>
<svg style="left:136px;top:139px" width="18" height="18" viewBox="0 0 16 16"><path d="M2.5 4 V12 Q8 16 13.5 12 V4" fill="url(#igh)" stroke="#333" stroke-width="1" /><ellipse cx="8" cy="4" rx="5.5" ry="2.2" fill="#fff" stroke="#333" stroke-width="1" /></svg>
<svg style="left:159px;top:139px" width="18" height="18" viewBox="0 0 16 16"><circle cx="8" cy="8" r="6.3" fill="#f4f4f4" stroke="#333" stroke-width="1"/><circle cx="8" cy="8" r="4.6" fill="none" stroke="#999" stroke-width="1.6"/><circle cx="8" cy="8" r="2.6" fill="#fff" stroke="#333" stroke-width="1"/></svg>
<svg style="left:182px;top:139px" width="18" height="18" viewBox="0 0 16 16"><path d="M8 1.5 L14 11 L9 14.5 L2 11Z" fill="#fff" stroke="#333" stroke-width="1" /><path d="M8 1.5 L9 14.5" fill="none" stroke="#333" stroke-width="0.8" /><path d="M8 1.5 L2 11 L9 14.5Z" fill="#e0e4ea" stroke="none" stroke-width="1" /></svg>
<svg style="left:205px;top:139px" width="18" height="18" viewBox="0 0 16 16"><ellipse cx="8" cy="12.5" rx="5.2" ry="1.8" fill="#f0f0f0" stroke="#333" stroke-width="1.2" /><ellipse cx="8" cy="9.5" rx="5.2" ry="1.8" fill="#f0f0f0" stroke="#333" stroke-width="1.2" /><ellipse cx="8" cy="6.5" rx="5.2" ry="1.8" fill="#f0f0f0" stroke="#333" stroke-width="1.2" /><ellipse cx="8" cy="3.5" rx="5.2" ry="1.8" fill="#f0f0f0" stroke="#333" stroke-width="1.2" /></svg>
<svg style="left:228px;top:139px" width="18" height="18" viewBox="0 0 16 16"><path d="M1.5 9.5 L10.5 2.5 L14.5 6.5 L5.5 13.5Z" fill="#d8d8e0" stroke="#999" stroke-width="0.9" /><path d="M4.5 7.2 L8.5 11.2 M7.5 4.8 L11.5 8.8 M3.5 11.5 L12.5 4.5" fill="none" stroke="#bbb" stroke-width="0.8" /></svg>
<svg style="left:257px;top:139px" width="18" height="18" viewBox="0 0 16 16"><path d="M2.5 6 H10.5 V14 H2.5Z" fill="#a8d0f0" stroke="#1f6ab0" stroke-width="1" /><path d="M2.5 6 L5.5 3 H13.5 L10.5 6Z" fill="#d8ecfa" stroke="#1f6ab0" stroke-width="1" /><path d="M10.5 6 L13.5 3 V11 L10.5 14Z" fill="#7ab4e4" stroke="#1f6ab0" stroke-width="1" /><path d="M6.5 12.5 V8 M6.5 8 L5 9.8 M6.5 8 L8 9.8" fill="none" stroke="#111" stroke-width="1.1" /></svg>
<svg style="left:280px;top:139px" width="18" height="18" viewBox="0 0 16 16"><path d="M3 9 H10 V14 H3Z" fill="#a8d0f0" stroke="#1f6ab0" stroke-width="1" /><path d="M3 9 L5.5 6.5 H12.5 L10 9Z" fill="#d8ecfa" stroke="#1f6ab0" stroke-width="1" /><path d="M10 9 L12.5 6.5 V11.5 L10 14Z" fill="#7ab4e4" stroke="#1f6ab0" stroke-width="1" /><path d="M7.5 7 V1.5 M7.5 1 L6 3 M7.5 1 L9 3" fill="none" stroke="#111" stroke-width="1.1" /><path d="M1.5 13.5 H3 M12.5 12 L14.5 12 M13.5 11 V13" fill="none" stroke="#111" stroke-width="0.9" /></svg>
<svg style="left:302.5px;top:139px" width="18" height="18" viewBox="0 0 16 16"><path d="M3 5 Q3 2 7 2 Q12 2 12 5 Q12 7 8 7.5 Q5 8 5 10" fill="none" stroke="#1f6ab0" stroke-width="2.6" /><path d="M3 5 Q3 2 7 2 Q12 2 12 5 Q12 7 8 7.5 Q5 8 5 10" fill="none" stroke="#a8d0f0" stroke-width="1.2" /><rect x="5.5" y="10" width="5" height="4.5" fill="#fff" stroke="#333" stroke-width="1" /></svg>
<svg style="left:325px;top:139px" width="18" height="18" viewBox="0 0 16 16"><path d="M2.5 9 Q2.5 6 8 6 Q13.5 6 13.5 9 V12 Q13.5 14.5 8 14.5 Q2.5 14.5 2.5 12Z" fill="#a8d0f0" stroke="#1f6ab0" stroke-width="1" /><ellipse cx="8" cy="9" rx="3" ry="1.2" fill="#fff" stroke="#1f6ab0" stroke-width="0.9" /><path d="M3 4 Q8 0.5 13 4 M13 4 L11 3.8 M13 4 L12.6 2" fill="none" stroke="#111" stroke-width="1" /></svg>
<svg style="left:348.5px;top:139px" width="18" height="18" viewBox="0 0 16 16"><path d="M1.5 2.5 H13.5 L11.5 12 Q8 15 4.5 12Z" fill="#a8d0f0" stroke="#1f6ab0" stroke-width="1" /><circle cx="8" cy="11.5" r="2.6" fill="#fff" stroke="#333" stroke-width="0.9"/><path d="M1.5 2.5 H13.5" fill="none" stroke="#1f6ab0" stroke-width="1.4" /></svg>
<svg style="left:378px;top:139px" width="18" height="18" viewBox="0 0 16 16"><circle cx="5.5" cy="8" r="4.5" fill="#a8d0f0" stroke="#1f6ab0" stroke-width="1.3"/><circle cx="10.5" cy="8" r="4.5" fill="#a8d0f0" stroke="#1f6ab0" stroke-width="1.3"/><path d="M8 4.3 A4.5 4.5 0 0 1 8 11.7 A4.5 4.5 0 0 1 8 4.3Z" fill="#a8d0f0" stroke="#1f6ab0" stroke-width="0.8" /></svg>
<svg style="left:401px;top:139px" width="18" height="18" viewBox="0 0 16 16"><circle cx="5.5" cy="8" r="4.5" fill="#a8d0f0" stroke="#1f6ab0" stroke-width="1.3"/><circle cx="10.5" cy="8" r="4.5" fill="#fff" stroke="#1f6ab0" stroke-width="1.3"/><path d="M8 4.3 A4.5 4.5 0 0 1 8 11.7 A4.5 4.5 0 0 1 8 4.3Z" fill="#fff" stroke="#1f6ab0" stroke-width="0.8" /></svg>
<svg style="left:424px;top:139px" width="18" height="18" viewBox="0 0 16 16"><circle cx="5.5" cy="8" r="4.5" fill="#fff" stroke="#1f6ab0" stroke-width="1.3"/><circle cx="10.5" cy="8" r="4.5" fill="#fff" stroke="#1f6ab0" stroke-width="1.3"/><path d="M8 4.3 A4.5 4.5 0 0 1 8 11.7 A4.5 4.5 0 0 1 8 4.3Z" fill="#a8d0f0" stroke="#1f6ab0" stroke-width="0.8" /></svg>
<svg style="left:452px;top:139px" width="18" height="18" viewBox="0 0 16 16"><path d="M8 8 V2 M8 8 L2.5 12 M8 8 L13.5 12" fill="none" stroke="#333" stroke-width="1" /><path d="M8 1 L6.6 3.2 H9.4Z" fill="#2a9a2a" stroke="#2a9a2a" stroke-width="0.5" /><circle cx="2.5" cy="12" r="1.4" fill="#c02020" stroke="#c02020" stroke-width="1"/><circle cx="13.5" cy="12" r="1.4" fill="#2a9a2a" stroke="#2a9a2a" stroke-width="1"/><path d="M3 6 L8 3.5 L13 6 V11.5 L8 14.5 L3 11.5Z" fill="none" stroke="#333" stroke-width="0.9" /></svg>
<svg style="left:475.5px;top:139px" width="18" height="18" viewBox="0 0 16 16"><circle cx="8" cy="8" r="6.3" fill="#fff" stroke="#c02020" stroke-width="1.2"/><ellipse cx="8" cy="8" rx="6.3" ry="2.4" fill="none" stroke="#2a9a2a" stroke-width="1.2" /><ellipse cx="8" cy="8" rx="2.4" ry="6.3" fill="none" stroke="#2a5ac8" stroke-width="1.2" /><circle cx="8" cy="8" r="1.3" fill="#c02020" stroke="none" stroke-width="1"/></svg>
<svg style="left:498.5px;top:139px" width="18" height="18" viewBox="0 0 16 16"><path d="M2.5 3 H7.5 V9 H2.5Z" fill="#a8d0f0" stroke="#1f6ab0" stroke-width="1" /><path d="M2.5 9 H13.5 V13.5 H2.5Z" fill="#fff" stroke="#333" stroke-width="1" /><path d="M7.5 5 L10 3 V9" fill="none" stroke="#333" stroke-width="0.8" /></svg>
<svg style="left:522px;top:139px" width="18" height="18" viewBox="0 0 16 16"><path d="M1.5 3.5 L3.5 2 H7.0 V5.5 L5.0 7 H1.5Z" fill="#a8d0f0" stroke="#1f6ab0" stroke-width="0.9" /><path d="M8.5 3.5 L10.5 2 H14.0 V5.5 L12.0 7 H8.5Z" fill="#a8d0f0" stroke="#1f6ab0" stroke-width="0.9" /><path d="M1.5 10.5 L3.5 9 H7.0 V12.5 L5.0 14 H1.5Z" fill="#a8d0f0" stroke="#1f6ab0" stroke-width="0.9" /><path d="M8.5 10.5 L10.5 9 H14.0 V12.5 L12.0 14 H8.5Z" fill="#a8d0f0" stroke="#1f6ab0" stroke-width="0.9" /></svg>
<svg style="left:26px;top:166.5px" width="18" height="18" viewBox="0 0 16 16"><path d="M1.5 1.5 H8 L10.5 4 V11.5 H1.5Z" fill="#fff" stroke="#333" stroke-width="1" /><path d="M3 10 Q3 5.5 7.5 5.5 M3 10 L2.2 7.8 M3 10 L5.2 9.2" fill="none" stroke="#333" stroke-width="1.1" /><rect x="7.5" y="8.5" width="7" height="6" fill="#f4f4f4" stroke="#333" stroke-width="1" /><path d="M9 10.5 H13 M9 12.5 H13" fill="none" stroke="#555" stroke-width="0.8" /></svg>
<svg style="left:55px;top:166.5px" width="18" height="18" viewBox="0 0 16 16"><path d="M2.5 5.5 H10.5 V13.5 H2.5Z" fill="#fff" stroke="#333" stroke-width="1" /><path d="M2.5 5.5 L5.5 2.5 H13.5 L10.5 5.5Z" fill="#9aa0aa" stroke="#333" stroke-width="1" /><path d="M10.5 5.5 L13.5 2.5 V10.5 L10.5 13.5Z" fill="#fff" stroke="#333" stroke-width="1" /><path d="M5.5 2.5 V10.5 H13.5 M5.5 10.5 L2.5 13.5" fill="none" stroke="#888" stroke-width="0.8" /></svg>
<svg style="left:78px;top:166.5px" width="18" height="18" viewBox="0 0 16 16"><path d="M2.5 5.5 H10.5 V13.5 H2.5Z" fill="#fff" stroke="#333" stroke-width="1" /><path d="M2.5 5.5 L5.5 2.5 H13.5 L10.5 5.5Z" fill="#fff" stroke="#333" stroke-width="1" /><path d="M10.5 5.5 L13.5 2.5 V10.5 L10.5 13.5Z" fill="#fff" stroke="#333" stroke-width="1" /><path d="M5.5 2.5 V10.5 H13.5 M5.5 10.5 L2.5 13.5" fill="none" stroke="#888" stroke-width="0.8" /><path d="M2.5 13.5 L5.5 10.5 H13.5 L10.5 13.5Z" fill="#8a909a" stroke="#333" stroke-width="0.8" /></svg>
<svg style="left:101px;top:166.5px" width="18" height="18" viewBox="0 0 16 16"><path d="M2.5 5.5 H10.5 V13.5 H2.5Z" fill="#fff" stroke="#333" stroke-width="1" /><path d="M2.5 5.5 L5.5 2.5 H13.5 L10.5 5.5Z" fill="#fff" stroke="#333" stroke-width="1" /><path d="M10.5 5.5 L13.5 2.5 V10.5 L10.5 13.5Z" fill="#fff" stroke="#333" stroke-width="1" /><path d="M5.5 2.5 V10.5 H13.5 M5.5 10.5 L2.5 13.5" fill="none" stroke="#888" stroke-width="0.8" /><path d="M2.5 5.5 L5.5 2.5 V10.5 L2.5 13.5Z" fill="#8a909a" stroke="#333" stroke-width="0.8" /></svg>
<svg style="left:124px;top:166.5px" width="18" height="18" viewBox="0 0 16 16"><path d="M2.5 5.5 H10.5 V13.5 H2.5Z" fill="#fff" stroke="#333" stroke-width="1" /><path d="M2.5 5.5 L5.5 2.5 H13.5 L10.5 5.5Z" fill="#fff" stroke="#333" stroke-width="1" /><path d="M10.5 5.5 L13.5 2.5 V10.5 L10.5 13.5Z" fill="#fff" stroke="#333" stroke-width="1" /><path d="M5.5 2.5 V10.5 H13.5 M5.5 10.5 L2.5 13.5" fill="none" stroke="#888" stroke-width="0.8" /></svg>
<svg style="left:147px;top:166.5px" width="18" height="18" viewBox="0 0 16 16"><path d="M2.5 5.5 H10.5 V13.5 H2.5Z" fill="#8a909a" stroke="#333" stroke-width="1" /><path d="M2.5 5.5 L5.5 2.5 H13.5 L10.5 5.5Z" fill="#e8eaee" stroke="#333" stroke-width="1" /><path d="M10.5 5.5 L13.5 2.5 V10.5 L10.5 13.5Z" fill="#c0c4cc" stroke="#333" stroke-width="1" /></svg>
<svg style="left:170px;top:166.5px" width="18" height="18" viewBox="0 0 16 16"><path d="M2.5 5.5 H10.5 V13.5 H2.5Z" fill="#c8ccd4" stroke="#333" stroke-width="1" /><path d="M2.5 5.5 L5.5 2.5 H13.5 L10.5 5.5Z" fill="#9aa0aa" stroke="#333" stroke-width="1" /><path d="M10.5 5.5 L13.5 2.5 V10.5 L10.5 13.5Z" fill="#8a909a" stroke="#333" stroke-width="1" /><path d="M5.5 6 H10 V10.5 H5.5Z" fill="#6a707a" stroke="none" stroke-width="1" /></svg>
<svg style="left:198.5px;top:166.5px" width="18" height="18" viewBox="0 0 16 16"><path d="M8 1.5 L13.5 6 L8 14.5 L2.5 6Z" fill="#fff" stroke="#333" stroke-width="1" /><path d="M2.5 6 L8 8 L13.5 6 M8 8 V14.5" fill="none" stroke="#333" stroke-width="0.8" /><path d="M8 1.5 L13.5 6 L8 8Z" fill="#fff" stroke="none" stroke-width="1" /><path d="M2.5 6 L8 8 V14.5Z" fill="#fff" stroke="none" stroke-width="1" /><path d="M13.5 6 L8 8 V14.5Z" fill="#9aa0aa" stroke="none" stroke-width="1" /></svg>
<svg style="left:221.5px;top:166.5px" width="18" height="18" viewBox="0 0 16 16"><path d="M8 1.5 L13.5 6 L8 14.5 L2.5 6Z" fill="#fff" stroke="#333" stroke-width="1" /><path d="M2.5 6 L8 8 L13.5 6 M8 8 V14.5" fill="none" stroke="#333" stroke-width="0.8" /><path d="M8 1.5 L13.5 6 L8 8Z" fill="#fff" stroke="none" stroke-width="1" /><path d="M2.5 6 L8 8 V14.5Z" fill="#9aa0aa" stroke="none" stroke-width="1" /><path d="M13.5 6 L8 8 V14.5Z" fill="#fff" stroke="none" stroke-width="1" /></svg>
<svg style="left:245px;top:166.5px" width="18" height="18" viewBox="0 0 16 16"><path d="M8 1.5 L13.5 6 L8 14.5 L2.5 6Z" fill="#fff" stroke="#333" stroke-width="1" /><path d="M2.5 6 L8 8 L13.5 6 M8 8 V14.5" fill="none" stroke="#333" stroke-width="0.8" /><path d="M8 1.5 L13.5 6 L8 8Z" fill="#9aa0aa" stroke="none" stroke-width="1" /><path d="M2.5 6 L8 8 V14.5Z" fill="#fff" stroke="none" stroke-width="1" /><path d="M13.5 6 L8 8 V14.5Z" fill="#c8ccd4" stroke="none" stroke-width="1" /></svg>
<svg style="left:268px;top:166.5px" width="18" height="18" viewBox="0 0 16 16"><path d="M8 1.5 L13.5 6 L8 14.5 L2.5 6Z" fill="#fff" stroke="#333" stroke-width="1" /><path d="M2.5 6 L8 8 L13.5 6 M8 8 V14.5" fill="none" stroke="#333" stroke-width="0.8" /><path d="M8 1.5 L13.5 6 L8 8Z" fill="#9aa0aa" stroke="none" stroke-width="1" /><path d="M2.5 6 L8 8 V14.5Z" fill="#c8ccd4" stroke="none" stroke-width="1" /><path d="M13.5 6 L8 8 V14.5Z" fill="#6a707a" stroke="none" stroke-width="1" /></svg>
<svg style="left:297px;top:166.5px" width="18" height="18" viewBox="0 0 16 16"><path d="M1.5 6.5 L4.5 3.5 H11 L13.5 6.5 V14.5 H1.5Z" fill="#fff" stroke="#333" stroke-width="1" /><circle cx="7.5" cy="10" r="3" fill="#f4f4f4" stroke="#333" stroke-width="1"/><rect x="4.5" y="1.5" width="4" height="2" fill="#ccc" stroke="#333" stroke-width="0.7" /><path d="M13 0 V1.6" stroke="#e06010" stroke-width="1" transform="rotate(0 13 3)"/><path d="M13 0 V1.6" stroke="#e06010" stroke-width="1" transform="rotate(45 13 3)"/><path d="M13 0 V1.6" stroke="#e06010" stroke-width="1" transform="rotate(90 13 3)"/><path d="M13 0 V1.6" stroke="#e06010" stroke-width="1" transform="rotate(135 13 3)"/><path d="M13 0 V1.6" stroke="#e06010" stroke-width="1" transform="rotate(180 13 3)"/><path d="M13 0 V1.6" stroke="#e06010" stroke-width="1" transform="rotate(225 13 3)"/><path d="M13 0 V1.6" stroke="#e06010" stroke-width="1" transform="rotate(270 13 3)"/><path d="M13 0 V1.6" stroke="#e06010" stroke-width="1" transform="rotate(315 13 3)"/><circle cx="13" cy="3" r="1.3" fill="#f08020" stroke="none" stroke-width="1"/></svg>
<svg style="left:326px;top:166.5px" width="18" height="18" viewBox="0 0 16 16"><circle cx="6" cy="6" r="4.3" fill="#fff" stroke="#333" stroke-width="1.2"/><path d="M15 10 L8 10 M8 10 L11 7.2 M8 10 L11 12.8" fill="none" stroke="#111" stroke-width="2" /><path d="M9 12 L13 15.5" fill="none" stroke="#333" stroke-width="1.8" /></svg>
<svg style="left:498.5px;top:166.5px" width="18" height="18" viewBox="0 0 16 16"><path d="M1.5 2 V14 M14.5 2 V14 M1.5 8 H14.5 M1.5 8 L4 6.5 M1.5 8 L4 9.5 M14.5 8 L12 6.5 M14.5 8 L12 9.5" fill="none" stroke="#222" stroke-width="1.1" /></svg>
<svg style="left:522px;top:166.5px" width="18" height="18" viewBox="0 0 16 16"><path d="M2 6 L10 14 M6 2 L14 10 M4 4 L12 12 M4 4 L4.5 7 M4 4 L7 4.5 M12 12 L9 11.5 M12 12 L11.5 9" fill="none" stroke="#222" stroke-width="1.1" /></svg>
<svg style="left:545px;top:166.5px" width="18" height="18" viewBox="0 0 16 16"><path d="M2.5 13.5 Q3 4 13.5 2.5" fill="none" stroke="#222" stroke-width="1.1" /><path d="M5.5 14 Q6 7 14 5.5" fill="none" stroke="#888" stroke-width="2.2" /><rect x="1" y="12.5" width="2.5" height="2.5" fill="#fff" stroke="#222" stroke-width="0.9" /><rect x="12.5" y="1" width="2.5" height="2.5" fill="#fff" stroke="#222" stroke-width="0.9" /></svg>
<svg style="left:568px;top:166.5px" width="18" height="18" viewBox="0 0 16 16"><path d="M3 15 V6 L7 3 M3 13 H12 L15 10" fill="none" stroke="#222" stroke-width="1.1" /><text x="0" y="5" font-family="Liberation Sans, sans-serif" font-size="6" font-weight='bold' fill="#1f6ab0" >y</text><text x="12" y="5" font-family="Liberation Sans, sans-serif" font-size="6" font-weight='bold' fill="#1f6ab0" >x</text><circle cx="2" cy="9" r="1" fill="none" stroke="#1f6ab0" stroke-width="0.8"/><circle cx="2" cy="14" r="1" fill="none" stroke="#1f6ab0" stroke-width="0.8"/><path d="M5 9 H9 M9 9 V14" fill="none" stroke="#1f6ab0" stroke-width="0.9" stroke-dasharray="1.5 1"/></svg>
<svg style="left:597px;top:166.5px" width="18" height="18" viewBox="0 0 16 16"><circle cx="8" cy="8" r="6.3" fill="#fff" stroke="#222" stroke-width="1.1"/><path d="M8 8 L3.5 3.5 M3.5 3.5 L4 6 M3.5 3.5 L6 4" fill="none" stroke="#222" stroke-width="1" /></svg>
<svg style="left:620px;top:166.5px" width="18" height="18" viewBox="0 0 16 16"><path d="M2 6 Q6 0 13 4" fill="none" stroke="#222" stroke-width="1.1" /><path d="M13 4 L8 8 L10.5 9 L5 14 M13 4 L10.5 4.2 M13 4 L12.5 6.5" fill="none" stroke="#222" stroke-width="1" /></svg>
<svg style="left:643px;top:166.5px" width="18" height="18" viewBox="0 0 16 16"><circle cx="8" cy="8" r="6.3" fill="#fff" stroke="#222" stroke-width="1.1"/><path d="M3.5 3.5 L12.5 12.5 M3.5 3.5 L4 6 M3.5 3.5 L6 4 M12.5 12.5 L12 10 M12.5 12.5 L10 12" fill="none" stroke="#222" stroke-width="1" /></svg>
<svg style="left:666px;top:166.5px" width="18" height="18" viewBox="0 0 16 16"><path d="M1.5 14.5 H14.5 M1.5 14.5 L10 2" fill="none" stroke="#222" stroke-width="1.1" /><path d="M8 5 Q12 8 12 14.5 M8 5 L10.5 5.5 M12 14.5 L10.8 12.2" fill="none" stroke="#222" stroke-width="1" /></svg>
<svg style="left:695px;top:166.5px" width="18" height="18" viewBox="0 0 16 16"><path d="M1.5 2 V14 M14.5 2 V14 M1.5 5 H14.5 M1.5 5 L4 3.5 M1.5 5 L4 6.5 M14.5 5 L12 3.5 M14.5 5 L12 6.5" fill="none" stroke="#222" stroke-width="1.1" /><path d="M9 7 L5.5 11.5 H8 L6.5 15.5 L11.5 10 H9 L10.5 7Z" fill="#f09020" stroke="#a85a10" stroke-width="0.5" /></svg>
<svg style="left:717.5px;top:166.5px" width="18" height="18" viewBox="0 0 16 16"><path d="M2 2 V14 M2 6 H14 M14 4 V8 M2 11 H9 M9 9 V13 M2 6 L4.2 4.8 M2 6 L4.2 7.2 M14 6 L11.8 4.8 M14 6 L11.8 7.2 M2 11 L4.2 9.8 M2 11 L4.2 12.2 M9 11 L6.8 9.8 M9 11 L6.8 12.2" fill="none" stroke="#222" stroke-width="1" /></svg>
<svg style="left:741px;top:166.5px" width="18" height="18" viewBox="0 0 16 16"><path d="M2 2 V13 M8 2 V13 M14 2 V13 M2 8 H14 M2 8 L4 6.8 M2 8 L4 9.2 M8 8 L6 6.8 M8 8 L6 9.2 M8 8 L10 6.8 M8 8 L10 9.2 M14 8 L12 6.8 M14 8 L12 9.2" fill="none" stroke="#222" stroke-width="1" /></svg>
<svg style="left:763.5px;top:166.5px" width="18" height="18" viewBox="0 0 16 16"><path d="M1.5 3.5 H14.5 M1.5 12.5 H14.5 M1.5 2 V5 M14.5 2 V5 M1.5 11 V14 M14.5 11 V14" fill="none" stroke="#222" stroke-width="1" /><rect x="5.5" y="4.5" width="5" height="7" fill="#f8d848" stroke="#a88a10" stroke-width="0.8" /><path d="M8 5.5 V10.5" fill="none" stroke="#222" stroke-width="1" /></svg>
<svg style="left:786.5px;top:166.5px" width="18" height="18" viewBox="0 0 16 16"><path d="M1.5 8 H6 M10 8 H14.5 M8 2 V12 M5 12 H11 M8 14.5 V15" fill="none" stroke="#222" stroke-width="1.1" /><path d="M13 5 V11 M15 5 V11" fill="none" stroke="#888" stroke-width="0.9" /></svg>
<svg style="left:816px;top:166.5px" width="18" height="18" viewBox="0 0 16 16"><rect x="1.5" y="4.5" width="13" height="8" fill="#fff" stroke="#222" stroke-width="1.1" /><path d="M8.5 4.5 V12.5" fill="none" stroke="#222" stroke-width="1" /><circle cx="5" cy="8.5" r="2" fill="none" stroke="#222" stroke-width="1"/><path d="M2.5 8.5 H7.5 M5 6 V11" fill="none" stroke="#222" stroke-width="0.9" /><text x="10" y="11.5" font-family="Liberation Sans, sans-serif" font-size="8" font-weight='bold' fill="#222" >1</text></svg>
<svg style="left:839px;top:166.5px" width="18" height="18" viewBox="0 0 16 16"><circle cx="8" cy="8" r="6.3" fill="#fff" stroke="#222" stroke-width="1.1"/><path d="M6 8 H10 M8 6 V10" fill="none" stroke="#222" stroke-width="1" /></svg>
<svg style="left:862px;top:166.5px" width="18" height="18" viewBox="0 0 16 16"><path d="M1.5 2 V10 M14.5 2 V10 M1.5 5 H14.5 M1.5 5 L4 3.7 M1.5 5 L4 6.3 M14.5 5 L12 3.7 M14.5 5 L12 6.3" fill="none" stroke="#222" stroke-width="1.1" /><path d="M5 11 L7.5 14.5 L13 7" fill="none" stroke="#2a9a2a" stroke-width="2.2" /></svg>
<svg style="left:885px;top:166.5px" width="18" height="18" viewBox="0 0 16 16"><path d="M1 9 L4 7.5 M4 7.5 L6 3 L9.5 13 L11.5 8 H15 M1 9 L3 9.8 M1 9 L2.4 7.2" fill="none" stroke="#222" stroke-width="1.1" /></svg>
<svg style="left:914px;top:166.5px" width="18" height="18" viewBox="0 0 16 16"><path d="M1.5 9 V15 M14.5 9 V15 M1.5 12.5 H14.5 M1.5 12.5 L4 11.2 M1.5 12.5 L4 13.8 M14.5 12.5 L12 11.2 M14.5 12.5 L12 13.8" fill="none" stroke="#222" stroke-width="1" /><path d="M5.5 8 L11 1.5 L13 3 L8 9.5 L5.2 10.2Z" fill="#f0c030" stroke="#8a6a10" stroke-width="0.6" /></svg>
<svg style="left:937px;top:166.5px" width="18" height="18" viewBox="0 0 16 16"><path d="M1.5 9 V15 M14.5 9 V15 M1.5 12.5 H14.5 M1.5 12.5 L4 11.2 M1.5 12.5 L4 13.8 M14.5 12.5 L12 11.2 M14.5 12.5 L12 13.8" fill="none" stroke="#222" stroke-width="1" /><text x="3.5" y="9.5" font-family="Liberation Sans, sans-serif" font-size="11"  fill="#222" >A</text></svg>
<svg style="left:960px;top:166.5px" width="18" height="18" viewBox="0 0 16 16"><path d="M1.5 2 V14 M14.5 2 V14 M1.5 5 H14.5 M1.5 5 L4 3.7 M1.5 5 L4 6.3 M14.5 5 L12 3.7 M14.5 5 L12 6.3" fill="none" stroke="#222" stroke-width="1" /><path d="M6 11.5 A2.6 2.6 0 1 1 8.5 14 M8.5 14 L7.5 12.6 M8.5 14 L7 14.8" fill="none" stroke="#2a9a2a" stroke-width="1.3" /></svg>
<svg style="left:1108.5px;top:166.5px" width="18" height="18" viewBox="0 0 16 16"><path d="M1.5 9 V15 M14.5 9 V15 M1.5 12.5 H14.5 M1.5 12.5 L4 11 M1.5 12.5 L4 14 M14.5 12.5 L12 11 M14.5 12.5 L12 14" fill="none" stroke="#333" stroke-width="1" /><path d="M6 9 L13 1.5 L14.5 3 L8 10Z" fill="#c89858" stroke="#8a5a20" stroke-width="0.6" /><path d="M6 9 Q4 9 3.5 11 Q7 11.5 8 10Z" fill="#b05a20" stroke="#7a3a10" stroke-width="0.5" /></svg>
<svg style="left:287.5px;top:201.5px" width="18" height="18" viewBox="0 0 16 16"><path d="M2.5 13.5 L13.5 2.5" fill="none" stroke="#333" stroke-width="1.1" /><rect x="1.5" y="12.5" width="2" height="2" fill="#fff" stroke="#333" stroke-width="0.8" /><rect x="12.5" y="1.5" width="2" height="2" fill="#fff" stroke="#333" stroke-width="0.8" /></svg>
<svg style="left:287.5px;top:223.5px" width="18" height="18" viewBox="0 0 16 16"><path d="M2 14 L14 2 M2 14 L2.5 10.5 M2 14 L5.5 13.5 M14 2 L10.5 2.5 M14 2 L13.5 5.5" fill="none" stroke="#333" stroke-width="1.1" /><rect x="7" y="7" width="2" height="2" fill="#fff" stroke="#333" stroke-width="0.8" /></svg>
<svg style="left:287.5px;top:245.5px" width="18" height="18" viewBox="0 0 16 16"><path d="M2 12.5 H8.5 M8.5 12.5 A3.6 3.6 0 1 0 8.5 5.3" fill="none" stroke="#333" stroke-width="1.2" /><rect x="1" y="11.5" width="2" height="2" fill="#fff" stroke="#333" stroke-width="0.8" /><rect x="7.5" y="11.5" width="2" height="2" fill="#fff" stroke="#333" stroke-width="0.8" /><rect x="7.5" y="4.3" width="2" height="2" fill="#fff" stroke="#333" stroke-width="0.8" /></svg>
<svg style="left:287.5px;top:267.5px" width="18" height="18" viewBox="0 0 16 16"><path d="M8 1.5 L14.5 6.5 L12 14 H4 L1.5 6.5Z" fill="#fff" stroke="#333" stroke-width="1.2" /></svg>
<svg style="left:287.5px;top:289.5px" width="18" height="18" viewBox="0 0 16 16"><path d="M2.5 4 L13.5 3 V12 L2.5 13Z" fill="#fff" stroke="#333" stroke-width="1.2" /><rect x="1.5" y="12" width="2" height="2" fill="#fff" stroke="#333" stroke-width="0.8" /><rect x="12.5" y="2" width="2" height="2" fill="#fff" stroke="#333" stroke-width="0.8" /></svg>
<svg style="left:287.5px;top:311.5px" width="18" height="18" viewBox="0 0 16 16"><path d="M2.5 14 Q3 4 13.5 2.5" fill="none" stroke="#333" stroke-width="1.2" /><rect x="1.5" y="13" width="2" height="2" fill="#fff" stroke="#333" stroke-width="0.8" /><rect x="12.5" y="1.5" width="2" height="2" fill="#fff" stroke="#333" stroke-width="0.8" /><rect x="4" y="5" width="2" height="2" fill="#fff" stroke="#333" stroke-width="0.8" /></svg>
<svg style="left:287.5px;top:333.5px" width="18" height="18" viewBox="0 0 16 16"><circle cx="8" cy="8" r="6.3" fill="#fff" stroke="#333" stroke-width="1.2"/><path d="M8 8 L12 4" fill="none" stroke="#333" stroke-width="1" /><rect x="7" y="7" width="2" height="2" fill="#fff" stroke="#333" stroke-width="0.8" /></svg>
<svg style="left:287.5px;top:355.5px" width="18" height="18" viewBox="0 0 16 16"><path d="M4 3.5 Q5 0.5 8 2.5 Q11 0.5 12.5 3.5 Q15.5 5 14 8 Q15.5 11 12.5 12.5 Q11 15.5 8 13.5 Q5 15.5 3.5 12.5 Q0.5 11 2.5 8 Q0.5 5 4 3.5Z" fill="#fff" stroke="#333" stroke-width="1.2" /></svg>
<svg style="left:287.5px;top:377.5px" width="18" height="18" viewBox="0 0 16 16"><path d="M1.5 13 Q3 3 8 8 T14.5 3" fill="none" stroke="#333" stroke-width="1.3" /></svg>
<svg style="left:287.5px;top:399.5px" width="18" height="18" viewBox="0 0 16 16"><ellipse cx="8" cy="8" rx="6.5" ry="4" fill="#fff" stroke="#333" stroke-width="1.2" /><rect x="0.5" y="7" width="2" height="2" fill="#fff" stroke="#333" stroke-width="0.8" /><rect x="13.5" y="7" width="2" height="2" fill="#fff" stroke="#333" stroke-width="0.8" /></svg>
<svg style="left:287.5px;top:421.5px" width="18" height="18" viewBox="0 0 16 16"><path d="M3 10 A5.5 3.5 0 1 1 13 10" fill="none" stroke="#333" stroke-width="1.2" /><rect x="12" y="9" width="2" height="2" fill="#fff" stroke="#333" stroke-width="0.8" /><path d="M3 10 L2.5 7.8 M3 10 L5 9.2" fill="none" stroke="#333" stroke-width="1" /></svg>
<svg style="left:287.5px;top:443.5px" width="18" height="18" viewBox="0 0 16 16"><path d="M5.5 1.5 H11 L13.5 4 V9" fill="#fff" stroke="#333" stroke-width="0.9" /><rect x="2.5" y="6.5" width="8" height="5" fill="#f4f4f4" stroke="#333" stroke-width="1" /><rect x="1.5" y="10.5" width="2" height="2" fill="#fff" stroke="#333" stroke-width="0.8" /><circle cx="11" cy="12" r="2.4" fill="#fff" stroke="#333" stroke-width="0.9"/><path d="M12 16 L16 16 L16 12Z" fill="#111" stroke="none" stroke-width="1" /></svg>
<svg style="left:287.5px;top:465.5px" width="18" height="18" viewBox="0 0 16 16"><rect x="2.5" y="4.5" width="8.5" height="5.5" fill="#f4f4f4" stroke="#333" stroke-width="1" /><rect x="1.5" y="9" width="2" height="2" fill="#fff" stroke="#333" stroke-width="0.8" /><circle cx="11.5" cy="10.5" r="2.8" fill="#fff" stroke="#333" stroke-width="0.9"/></svg>
<svg style="left:287.5px;top:487.5px" width="18" height="18" viewBox="0 0 16 16"><rect x="7" y="7" width="2.4" height="2.4" fill="#fff" stroke="#333" stroke-width="0.9" /></svg>
<svg style="left:287.5px;top:509.5px" width="18" height="18" viewBox="0 0 16 16"><rect x="3.5" y="3.5" width="9" height="9" fill="url(#hat)" stroke="#333" stroke-width="1" /><path d="M1 3.5 H15 M1 12.5 H15 M3.5 1 V15 M12.5 1 V15" fill="none" stroke="#333" stroke-width="0.9" /></svg>
<svg style="left:287.5px;top:531.5px" width="18" height="18" viewBox="0 0 16 16"><rect x="3.5" y="3.5" width="9" height="9" fill="url(#grd)" stroke="#333" stroke-width="1" /><path d="M1 3.5 H15 M1 12.5 H15 M3.5 1 V15 M12.5 1 V15" fill="none" stroke="#333" stroke-width="0.9" /><path d="M9 15 L15 9" fill="none" stroke="#333" stroke-width="0.9" /></svg>
<svg style="left:287.5px;top:553.5px" width="18" height="18" viewBox="0 0 16 16"><path d="M2.5 13.5 V2.5 H9.5 L13.5 6.5 V13.5Z" fill="#fff" stroke="#333" stroke-width="1.2" /><circle cx="8.5" cy="8.5" r="2.8" fill="#fff" stroke="#333" stroke-width="1"/></svg>
<svg style="left:287.5px;top:575.5px" width="18" height="18" viewBox="0 0 16 16"><rect x="1.5" y="2.5" width="13" height="11" fill="#fff" stroke="#333" stroke-width="1" /><rect x="1.5" y="2.5" width="13" height="2.5" fill="#6a6e78" stroke="#333" stroke-width="1" /><path d="M1.5 8 H14.5 M1.5 10.8 H14.5 M6 5 V13.5 M10.2 5 V13.5" fill="none" stroke="#777" stroke-width="0.9" /></svg>
<svg style="left:287.5px;top:597.5px" width="18" height="18" viewBox="0 0 16 16"><text x="1.2" y="14.5" font-family="Liberation Sans, sans-serif" font-size="18"  fill="#222" >A</text></svg>
<svg style="left:287.5px;top:619.5px" width="18" height="18" viewBox="0 0 16 16"><circle cx="4" cy="4" r="2.6" fill="#7cc84c" stroke="#3a7a1a" stroke-width="0.8"/><circle cx="12" cy="12" r="2.6" fill="#8cc8f4" stroke="#2a6aa8" stroke-width="0.8"/><path d="M7 4.5 H10.5 V8 M10.5 8.5 L9.2 6.8 M10.5 8.5 L11.8 6.8" fill="none" stroke="#111" stroke-width="1.1" /></svg>
<svg style="left:1889px;top:202px" width="18" height="18" viewBox="0 0 16 16"><path d="M5 10 L12 2 L14.5 4 L8 12.5Z" fill="#e8c8a0" stroke="#7a4a20" stroke-width="0.7" /><path d="M5 10 L8 12.5 L6.5 14 Q4.5 14.5 3.5 12.5Z" fill="#d05a20" stroke="#7a2a08" stroke-width="0.6" /><path d="M1.5 15 H13" fill="none" stroke="#333" stroke-width="1" /></svg>
<svg style="left:1889px;top:224px" width="18" height="18" viewBox="0 0 16 16"><circle cx="4" cy="4" r="2.3" fill="#fff" stroke="#333" stroke-width="0.9"/><path d="M7.5 3 H11 V6 M11 6.5 L9.8 5 M11 6.5 L12.2 5" fill="none" stroke="#111" stroke-width="1" /><circle cx="9" cy="10.5" r="2.6" fill="none" stroke="#1f6ab0" stroke-width="1.1"/><circle cx="11.5" cy="12" r="2.6" fill="none" stroke="#1f6ab0" stroke-width="1.1"/></svg>
<svg style="left:1889px;top:246px" width="18" height="18" viewBox="0 0 16 16"><path d="M8 0.5 V15.5" fill="none" stroke="#333" stroke-width="1.1" /><path d="M6 3 V13 H1.5Z" fill="#fff" stroke="#333" stroke-width="0.9" /><path d="M10 3 V13 H14.5Z" fill="#a8d0f0" stroke="#1f6ab0" stroke-width="0.9" /></svg>
<svg style="left:1889px;top:268px" width="18" height="18" viewBox="0 0 16 16"><path d="M1.5 13.5 V10 Q1.5 8 4.5 7.5 Q5 2.5 8.5 2.5 Q12 2.5 11.5 7.5 H14.5 V13.5Z" fill="#fff" stroke="#333" stroke-width="1.2" /><path d="M4 13.5 V11 Q4 10 6 10 H7 Q7 5 8.5 5 Q9.8 5 9.5 10 H14.5" fill="none" stroke="#1f6ab0" stroke-width="1.2" /></svg>
<svg style="left:1889px;top:290px" width="18" height="18" viewBox="0 0 16 16"><rect x="1.5" y="1.5" width="5" height="5" fill="#fff" stroke="#333" stroke-width="1" /><rect x="9" y="1.5" width="5" height="5" fill="#a8d0f0" stroke="#1f6ab0" stroke-width="1" /><rect x="1.5" y="9" width="5" height="5" fill="#a8d0f0" stroke="#1f6ab0" stroke-width="1" /><path d="M9 9 H14 V11 L11 14 H9Z" fill="#a8d0f0" stroke="#1f6ab0" stroke-width="1" /><path d="M12 16 L16 16 L16 12Z" fill="#111" stroke="none" stroke-width="1" /></svg>
<svg style="left:1889px;top:312px" width="18" height="18" viewBox="0 0 16 16"><path d="M8 1 V15 M1 8 H15 M8 0.5 L6 3 H10Z M8 15.5 L6 13 H10Z M0.5 8 L3 6 V10Z M15.5 8 L13 6 V10Z" fill="#111" stroke="#111" stroke-width="0.9" /><rect x="6.3" y="6.3" width="3.4" height="3.4" fill="#fff" stroke="#333" stroke-width="0.9" /></svg>
<svg style="left:1889px;top:334px" width="18" height="18" viewBox="0 0 16 16"><path d="M8 2.5 A6 6 0 1 0 14 8.5" fill="none" stroke="#555" stroke-width="1.5" /><path d="M7 0.5 L10.5 2.5 L7 4.8Z" fill="#111" stroke="none" stroke-width="1" /></svg>
<svg style="left:1889px;top:356px" width="18" height="18" viewBox="0 0 16 16"><path d="M1.5 1.5 H14.5 V14.5 H12" fill="#a8d0f0" stroke="#1f6ab0" stroke-width="1.2" /><rect x="1.5" y="7" width="7.5" height="7.5" fill="#fff" stroke="#333" stroke-width="1.1" /></svg>
<svg style="left:1889px;top:378px" width="18" height="18" viewBox="0 0 16 16"><path d="M1.5 1.5 H8 V14.5 H1.5Z" fill="#fff" stroke="#333" stroke-width="1.1" /><path d="M8 1.5 H11 L14.5 14.5 H8" fill="#a8d0f0" stroke="#1f6ab0" stroke-width="1.1" /><path d="M5 10.5 H11 M11 10.5 L9 9 M11 10.5 L9 12" fill="none" stroke="#111" stroke-width="1.2" /></svg>
<svg style="left:1889px;top:400px" width="18" height="18" viewBox="0 0 16 16"><path d="M1 8 H5" fill="none" stroke="#1f6ab0" stroke-width="1.2" /><path d="M7 8 H15" fill="none" stroke="#1f6ab0" stroke-width="1.1" stroke-dasharray="1.6 1.3"/><path d="M9.5 2 L5 14" fill="none" stroke="#1f6ab0" stroke-width="1.3" /></svg>
<svg style="left:1889px;top:422px" width="18" height="18" viewBox="0 0 16 16"><path d="M1 8 H7" fill="none" stroke="#111" stroke-width="1.2" stroke-dasharray="2 1.4"/><path d="M8 8 H10" fill="none" stroke="#1f6ab0" stroke-width="1.2" /><path d="M14 2 L9.5 14" fill="none" stroke="#1f6ab0" stroke-width="1.3" /></svg>
<svg style="left:1889px;top:444px" width="18" height="18" viewBox="0 0 16 16"><path d="M2.5 13.5 V4.5 H13.5" fill="none" stroke="#333" stroke-width="1.2" /><rect x="10.2" y="2.6" width="3.6" height="3.6" fill="#1f6ab0" stroke="#1f6ab0" stroke-width="1" /></svg>
<svg style="left:1889px;top:466px" width="18" height="18" viewBox="0 0 16 16"><path d="M2.5 5 V13.5 H13.5 V5" fill="#fff" stroke="#333" stroke-width="1.2" /><rect x="3.6" y="2.6" width="3.2" height="3.2" fill="#1f6ab0" stroke="#1f6ab0" stroke-width="1" /><rect x="9.2" y="2.6" width="3.2" height="3.2" fill="#1f6ab0" stroke="#1f6ab0" stroke-width="1" /></svg>
<svg style="left:1889px;top:488px" width="18" height="18" viewBox="0 0 16 16"><path d="M1.5 8 H14.5 M4.5 5.5 L7.5 8 L4.5 10.5 M11.5 5.5 L8.5 8 L11.5 10.5" fill="none" stroke="#1f6ab0" stroke-width="1.3" /></svg>
<svg style="left:1889px;top:510px" width="18" height="18" viewBox="0 0 16 16"><path d="M2.5 13.5 V8 L9 2.5 H13.5 V13.5" fill="#fff" stroke="#333" stroke-width="1.1" /><path d="M2.5 8 L9 2.5" fill="none" stroke="#1f6ab0" stroke-width="1.4" /></svg>
<svg style="left:1889px;top:532px" width="18" height="18" viewBox="0 0 16 16"><path d="M2.5 13.5 V9 Q2.5 2.5 9 2.5 H13.5 V13.5" fill="#fff" stroke="#333" stroke-width="1.1" /><path d="M2.5 9 Q2.5 2.5 9 2.5" fill="none" stroke="#1f6ab0" stroke-width="1.4" /></svg>
<svg style="left:1889px;top:554px" width="18" height="18" viewBox="0 0 16 16"><path d="M2 14 L3 9 Q5 3 8 7 Q10.5 10 13 4.5 L14 2" fill="none" stroke="#1f6ab0" stroke-width="1.3" /><rect x="2" y="8" width="2.2" height="2.2" fill="#fff" stroke="#333" stroke-width="0.8" /><rect x="12" y="3.5" width="2.2" height="2.2" fill="#fff" stroke="#333" stroke-width="0.8" /></svg>
<svg style="left:1889px;top:576px" width="18" height="18" viewBox="0 0 16 16"><path d="M1.5 8 L5 5.5 H9.5 V10.5 L6 13 H1.5Z M1.5 8 H6 V13 M6 8 L9.5 5.5" fill="#a8d0f0" stroke="#1f6ab0" stroke-width="0.9" /><path d="M8 4 L11 2 H14.5 V6.5 L11.5 8.5 M11 2 V5" fill="none" stroke="#1f6ab0" stroke-width="0.9" /></svg>
<svg style="left:1889px;top:608px" width="18" height="18" viewBox="0 0 16 16"><rect x="1.5" y="1.5" width="7" height="5" fill="#fff" stroke="#333" stroke-width="1" /><rect x="4.5" y="4.5" width="7" height="5" fill="url(#grd)" stroke="#333" stroke-width="1" /><rect x="7.5" y="8.5" width="7" height="5" fill="#fff" stroke="#333" stroke-width="1" /></svg>
<svg style="left:1889px;top:630px" width="18" height="18" viewBox="0 0 16 16"><rect x="1.5" y="1.5" width="7" height="5" fill="#fff" stroke="#333" stroke-width="1" /><rect x="4.5" y="4.5" width="7" height="5" fill="#fff" stroke="#333" stroke-width="1" /><rect x="7.5" y="8.5" width="7" height="5" fill="#fff" stroke="#333" stroke-width="1" /></svg>
<svg style="left:1889px;top:652px" width="18" height="18" viewBox="0 0 16 16"><rect x="2.5" y="2.5" width="8" height="6" fill="#fff" stroke="#333" stroke-width="1" /><rect x="5.5" y="6" width="8" height="7" fill="url(#grd)" stroke="#333" stroke-width="1" /></svg>
<svg style="left:1889px;top:674px" width="18" height="18" viewBox="0 0 16 16"><rect x="5.5" y="6" width="8" height="7" fill="url(#grd)" stroke="#333" stroke-width="1" /><rect x="2.5" y="2.5" width="8" height="6.5" fill="#fff" stroke="#333" stroke-width="1" /></svg>
<svg style="left:1889px;top:701px" width="18" height="18" viewBox="0 0 16 16"><text x="1.5" y="7" font-family="Liberation Sans, sans-serif" font-size="6.5" font-weight='bold' fill="#111" >ABC</text><path d="M3 9 V13.5 H11 V9.5" fill="none" stroke="#333" stroke-width="1" /><path d="M12 16 L16 16 L16 12Z" fill="#111" stroke="none" stroke-width="1" /></svg>
<svg style="left:1889px;top:723px" width="18" height="18" viewBox="0 0 16 16"><rect x="1.5" y="1.5" width="10" height="8" fill="url(#grd)" stroke="#333" stroke-width="1" /><path d="M6 11 V15 M6 14 H15 M14 9 V15 M6 14 L8 12.8 M14 14 L12 12.8" fill="none" stroke="#333" stroke-width="0.9" /></svg>
<div style="left:1890px;top:696px;width:16px;height:1px;background:#9a9a9a"></div>
<svg style="left:199px;top:1016.5px" width="18" height="18" viewBox="0 0 16 16"><path d="M7 2 V12 M2 7 H12" fill="none" stroke="#222" stroke-width="1.1" /><rect x="5.3" y="5.3" width="3.4" height="3.4" fill="#ddd" stroke="#222" stroke-width="0.9" /><rect x="10" y="10" width="3" height="3" fill="#fff" stroke="#2a6aa8" stroke-width="0.9" /><path d="M10.5 12 V15" fill="none" stroke="#c03020" stroke-width="1.4" /></svg>
<svg style="left:221px;top:1016.5px" width="18" height="18" viewBox="0 0 16 16"><rect x="3" y="4" width="1" height="1" fill="#333" stroke="none" stroke-width="1" /><rect x="3" y="6" width="1" height="1" fill="#333" stroke="none" stroke-width="1" /><rect x="3" y="8" width="1" height="1" fill="#333" stroke="none" stroke-width="1" /><rect x="3" y="10" width="1" height="1" fill="#333" stroke="none" stroke-width="1" /><rect x="5" y="4" width="1" height="1" fill="#333" stroke="none" stroke-width="1" /><rect x="5" y="6" width="1" height="1" fill="#333" stroke="none" stroke-width="1" /><rect x="5" y="8" width="1" height="1" fill="#333" stroke="none" stroke-width="1" /><rect x="5" y="10" width="1" height="1" fill="#333" stroke="none" stroke-width="1" /><rect x="7" y="4" width="1" height="1" fill="#333" stroke="none" stroke-width="1" /><rect x="7" y="6" width="1" height="1" fill="#333" stroke="none" stroke-width="1" /><rect x="7" y="8" width="1" height="1" fill="#333" stroke="none" stroke-width="1" /><rect x="7" y="10" width="1" height="1" fill="#333" stroke="none" stroke-width="1" /><rect x="9" y="4" width="1" height="1" fill="#333" stroke="none" stroke-width="1" /><rect x="9" y="6" width="1" height="1" fill="#333" stroke="none" stroke-width="1" /><rect x="9" y="8" width="1" height="1" fill="#333" stroke="none" stroke-width="1" /><rect x="9" y="10" width="1" height="1" fill="#333" stroke="none" stroke-width="1" /><path d="M12.5 3 V10 M12.5 11.5 V12.5" fill="none" stroke="#222" stroke-width="1.2" /></svg>
<svg style="left:243px;top:1016.5px" width="18" height="18" viewBox="0 0 16 16"><rect x="1.5" y="1.5" width="13" height="13" fill="#fff" stroke="#222" stroke-width="1.2" /><path d="M1.5 4.8 H14.5 M1.5 8 H14.5 M1.5 11.2 H14.5 M4.8 1.5 V14.5 M8 1.5 V14.5 M11.2 1.5 V14.5" fill="none" stroke="#222" stroke-width="1.1" /></svg>
<svg style="left:265px;top:1016.5px" width="18" height="18" viewBox="0 0 16 16"><path d="M2.5 1.5 V13.5 H14.5 M8 8 V13.5 M8 8 H14.5" fill="none" stroke="#2a5a7a" stroke-width="1.2" /></svg>
<svg style="left:287px;top:1016.5px" width="18" height="18" viewBox="0 0 16 16"><path d="M12 12.5 A5 5 0 1 1 9 3" fill="none" stroke="#333" stroke-width="1.3" /><path d="M7.5 8.5 L14 3 V8.5 H3" fill="none" stroke="#222" stroke-width="1.1" /></svg>
<svg style="left:309px;top:1016.5px" width="18" height="18" viewBox="0 0 16 16"><rect x="3.5" y="4.5" width="11" height="10" fill="url(#ig)" stroke="#222" stroke-width="1.1" /><circle cx="3.5" cy="4" r="1.8" fill="#fff" stroke="#e05010" stroke-width="1.1"/></svg>
<svg style="left:331px;top:1016.5px" width="18" height="18" viewBox="0 0 16 16"><path d="M4 5 L7 2.5 H14 V10 L11 12.5 H4Z" fill="url(#ig)" stroke="#333" stroke-width="1" /><path d="M4 5 H11 V12.5 M11 5 L14 2.5" fill="none" stroke="#555" stroke-width="0.8" /><circle cx="3.5" cy="12.5" r="1.9" fill="#fff" stroke="#e05010" stroke-width="1.2"/></svg>
<svg style="left:353px;top:1016.5px" width="18" height="18" viewBox="0 0 16 16"><path d="M2 13 L13 3 M2 13 H13" fill="none" stroke="#222" stroke-width="1.2" /></svg>
<svg style="left:375px;top:1016.5px" width="18" height="18" viewBox="0 0 16 16"><path d="M3 2 V14 H15 M3 14 L10.5 6.5 M3 2 L1.8 4 M3 2 L4.2 4 M15 14 L13 12.8 M15 14 L13 15.2" fill="none" stroke="#222" stroke-width="1.1" /><path d="M12 1 L9.5 4.5 H11.5 L10 7.5 L14.5 3.5 H12.5 L14 1Z" fill="#f0a020" stroke="#a86a10" stroke-width="0.5" /></svg>
<svg style="left:397px;top:1016.5px" width="18" height="18" viewBox="0 0 16 16"><path d="M1.5 7 H10 M5.5 2.5 V11.5" fill="none" stroke="#111" stroke-width="1.5" /><rect x="8" y="9" width="6" height="3" fill="#fff" stroke="#111" stroke-width="1.1" /></svg>
<svg style="left:419px;top:1016.5px" width="18" height="18" viewBox="0 0 16 16"><path d="M1.5 8 H14.5 M8 2 V14" fill="none" stroke="#111" stroke-width="1.8" /></svg>
<svg style="left:441px;top:1016.5px" width="18" height="18" viewBox="0 0 16 16"><rect x="1.5" y="1.5" width="13" height="13" fill="url(#chkb)" stroke="#2a7ad0" stroke-width="1.4" /></svg>
<svg style="left:463px;top:1016.5px" width="18" height="18" viewBox="0 0 16 16"><rect x="4" y="2.5" width="8" height="11" fill="#fff" stroke="#111" stroke-width="1.2" /><rect x="5.8" y="4.5" width="1.4" height="1.4" fill="#111" stroke="none" stroke-width="1" /><rect x="5.8" y="7.3" width="1.4" height="1.4" fill="#111" stroke="none" stroke-width="1" /><rect x="5.8" y="10.1" width="1.4" height="1.4" fill="#111" stroke="none" stroke-width="1" /><rect x="8.8" y="4.5" width="1.4" height="1.4" fill="#111" stroke="none" stroke-width="1" /><rect x="8.8" y="7.3" width="1.4" height="1.4" fill="#111" stroke="none" stroke-width="1" /><rect x="8.8" y="10.1" width="1.4" height="1.4" fill="#111" stroke="none" stroke-width="1" /></svg>
<svg style="left:485px;top:1016.5px" width="18" height="18" viewBox="0 0 16 16"><path d="M4.5 1 V8 M1 4.5 H8" fill="none" stroke="#333" stroke-width="1.2" /><rect x="5.5" y="5.5" width="6" height="6" fill="#fff" stroke="#555" stroke-width="0.9" /><rect x="8.5" y="8.5" width="6.5" height="6.5" fill="#7cc050" stroke="#3a7a1a" stroke-width="0.9" /></svg>
<svg style="left:507px;top:1016.5px" width="18" height="18" viewBox="0 0 16 16"><path d="M5.5 1.5 H10.5 V5.5 H14.5 V10.5 H10.5 V14.5 H5.5 V10.5 H1.5 V5.5 H5.5Z" fill="#fff" stroke="#333" stroke-width="1.2" /></svg>
<svg style="left:1608px;top:1016.5px" width="18" height="18" viewBox="0 0 16 16"><rect x="2.5" y="2.5" width="11" height="9" fill="#fff" stroke="#222" stroke-width="1.1" /><path d="M5 10 V5 L9 10Z" fill="none" stroke="#222" stroke-width="1" /><path d="M1.5 14 H14.5" fill="none" stroke="#222" stroke-width="1.6" /></svg>
<svg style="left:1630px;top:1016.5px" width="18" height="18" viewBox="0 0 16 16"><rect x="1.5" y="2.5" width="5.8" height="7" fill="#fff" stroke="#222" stroke-width="1.1" /><rect x="8.7" y="2.5" width="5.8" height="7" fill="#fff" stroke="#222" stroke-width="1.1" /><path d="M1.5 12 H14.5 M1.5 14.5 H14.5" fill="none" stroke="#555" stroke-width="1.3" /></svg>
<svg style="left:1664px;top:1016.5px" width="18" height="18" viewBox="0 0 16 16"><path d="M8 1.5 L10 7 L14.5 13.5 L12.5 14 L8 9.5 L3.5 14 L1.5 13.5 L6 7Z" fill="#fff" stroke="#222" stroke-width="1" /></svg>
<svg style="left:1715px;top:1016.5px" width="18" height="18" viewBox="0 0 16 16"><path d="M7 1.5 L9 7 L13 13.5 L11 14 L7 9.5 L3 14 L1.5 13.5 L5 7Z" fill="#fff" stroke="#222" stroke-width="1" /><circle cx="12" cy="10.5" r="2.2" fill="#f8d040" stroke="#c89010" stroke-width="0.7"/></svg>
<svg style="left:1737px;top:1016.5px" width="18" height="18" viewBox="0 0 16 16"><path d="M8 1.5 L10 7 L14.5 13.5 L12.5 14 L8 9.5 L3.5 14 L1.5 13.5 L6 7Z" fill="#ccc" stroke="#999" stroke-width="1" /><path d="M3 4 L6 7 M13 4 L10 7" fill="none" stroke="#aaa" stroke-width="1" /></svg>
<svg style="left:1765px;top:1016.5px" width="18" height="18" viewBox="0 0 16 16"><rect x="7" y="0.8" width="2" height="3" fill="#fff" stroke="#333" stroke-width="0.8" transform="rotate(0 8 8)"/><rect x="7" y="0.8" width="2" height="3" fill="#fff" stroke="#333" stroke-width="0.8" transform="rotate(45 8 8)"/><rect x="7" y="0.8" width="2" height="3" fill="#fff" stroke="#333" stroke-width="0.8" transform="rotate(90 8 8)"/><rect x="7" y="0.8" width="2" height="3" fill="#fff" stroke="#333" stroke-width="0.8" transform="rotate(135 8 8)"/><rect x="7" y="0.8" width="2" height="3" fill="#fff" stroke="#333" stroke-width="0.8" transform="rotate(180 8 8)"/><rect x="7" y="0.8" width="2" height="3" fill="#fff" stroke="#333" stroke-width="0.8" transform="rotate(225 8 8)"/><rect x="7" y="0.8" width="2" height="3" fill="#fff" stroke="#333" stroke-width="0.8" transform="rotate(270 8 8)"/><rect x="7" y="0.8" width="2" height="3" fill="#fff" stroke="#333" stroke-width="0.8" transform="rotate(315 8 8)"/><circle cx="8" cy="8" r="4.6" fill="#fff" stroke="#333" stroke-width="1"/><circle cx="8" cy="8" r="2" fill="#f0f0f0" stroke="#333" stroke-width="0.9"/></svg>
<svg style="left:1787px;top:1016.5px" width="18" height="18" viewBox="0 0 16 16"><rect x="1.5" y="8" width="9" height="6.5" fill="#fff" stroke="#222" stroke-width="1.2" /><path d="M8 8 V5 Q8 2 11 2 Q14 2 14 5 V6.5" fill="none" stroke="#222" stroke-width="1.5" /><path d="M6 10 V12.5" fill="none" stroke="#222" stroke-width="1.3" /></svg>
<svg style="left:1809px;top:1016.5px" width="18" height="18" viewBox="0 0 16 16"><circle cx="8" cy="8" r="6" fill="#f07828" stroke="#c85a10" stroke-width="1"/><path d="M5 11 L9.5 6.5" fill="none" stroke="#fff" stroke-width="1.8" /><path d="M4 5.5 A5 5 0 0 1 12 5.5" fill="none" stroke="#f8c8a0" stroke-width="0.9" stroke-dasharray="1 1.5"/></svg>
<svg style="left:1838px;top:1016.5px" width="18" height="18" viewBox="0 0 16 16"><path d="M4.5 6.5 Q4.5 1.5 8 1.5 Q11.5 1.5 11.5 6.5 Q11.5 8.5 9.5 10.5 V12 H6.5 V10.5 Q4.5 8.5 4.5 6.5Z" fill="#f8e8a0" stroke="#c8a840" stroke-width="0.9" /><rect x="6.8" y="12" width="2.4" height="3" fill="#fff" stroke="#999" stroke-width="0.6" /></svg>
<svg style="left:1878px;top:1016.5px" width="18" height="18" viewBox="0 0 16 16"><rect x="1.5" y="2.5" width="13" height="11" fill="url(#ig)" stroke="#222" stroke-width="1.1" /><rect x="1.5" y="2.5" width="13" height="2.6" fill="#444" stroke="#222" stroke-width="0.8" /><path d="M9 3.8 H10 M11 3.8 H12 M13 3.8 H13.6" fill="none" stroke="#fff" stroke-width="1" /></svg>
<div style="left:0px;top:1040px;width:1920px;height:40px;background:linear-gradient(90deg,#a6c0de 0,#a9c3e0 1676px,#8098b8 1704px,#7d95b5 1920px);border-top:1px solid #5a6a82;box-shadow:inset 0 1px 0 #c4d6ea"></div>
<svg style="left:6px;top:1040px;" width="44" height="40" viewBox="0 0 44 40"><defs><radialGradient id="orb" cx="0.5" cy="0.35" r="0.7"><stop offset="0" stop-color="#6ab6e8"/><stop offset="0.55" stop-color="#2b6db8"/><stop offset="1" stop-color="#123a78"/></radialGradient></defs><circle cx="21" cy="20" r="18" fill="url(#orb)" stroke="#1e4a86" stroke-width="1"/><path d="M5 14 A18 18 0 0 1 37 14 A30 14 0 0 1 5 14Z" fill="#bfe0f6" opacity="0.45"/><path d="M12 13 Q16 11 20 13.5 L18.6 20 Q15 18 10.5 19.6Z" fill="#e8542a"/><path d="M21.5 14 Q25.5 16.5 30 14.5 L28.4 21 Q24.4 23 20.2 20.6Z" fill="#8cc83c"/><path d="M10 21.2 Q14.5 19.4 18.2 21.8 L16.8 28 Q13 26 8.6 27.6Z" fill="#3c9ae0"/><path d="M19.8 22.4 Q24 25 28 23 L26.6 29.4 Q22.6 31.4 18.4 28.8Z" fill="#f8c82a"/></svg>
<div style="left:60px;top:1041px;width:51px;height:39px;background:linear-gradient(#c6d8ec,#b2c8e2 50%,#a2bcda 52%,#b4cce4);border:1px solid #7e94b0;border-bottom:none;border-radius:3px 3px 0 0;box-shadow:inset 0 0 0 1px rgba(255,255,255,.55);"></div>
<div style="left:113px;top:1042px;width:3px;height:38px;border-left:1px solid #8aa0bc;border-right:1px solid #c8d8ea"></div>
<svg style="left:64px;top:1043px;" width="42" height="38" viewBox="0 0 36 34"><path d="M3 8 H13 L15 5 H29 V26 H3Z" fill="#e8c860" stroke="#b8962e" stroke-width="0.8"/><path d="M5 10 H31 V27 H5Z" fill="#f6e08a" stroke="#c4a23a" stroke-width="0.8"/><rect x="6" y="6" width="3" height="2" fill="#3cae3c"/><rect x="12" y="7" width="3" height="2" fill="#d43a2a"/><rect x="21" y="9" width="3" height="2" fill="#3a7ad4"/><path d="M7 18 H29 Q31 18 31 20 V30 H26 V24 H10 V30 H5 V20 Q5 18 7 18Z" fill="#8cc4ee" stroke="#4a8ac8" stroke-width="0.8" opacity="0.95"/></svg>
<svg style="left:134px;top:1044px;" width="36" height="34" viewBox="0 0 36 34"><text x="6" y="29" font-family="Liberation Sans, sans-serif" font-weight="bold" font-size="34" fill="#2c9ae0">e</text><path d="M4 27 C-2 14 20 0 31 4 C24 2 6 14 6 27Z" fill="#f0c020"/><path d="M31 4 C35 6 33 12 29 15" fill="none" stroke="#f0c020" stroke-width="2"/></svg>
<svg style="left:196px;top:1046px;" width="32" height="32" viewBox="0 0 32 32"><rect x="7" y="3" width="18" height="22" fill="#c4dcf2" stroke="#8ab0d4" stroke-width="0.8"/><rect x="3" y="4" width="18" height="22" fill="#d8e8f8" stroke="#8ab0d4" stroke-width="0.8"/><circle cx="13" cy="15" r="8.5" fill="#f08020" stroke="#c85a10" stroke-width="0.8"/><path d="M10 10 L18.5 15 L10 20Z" fill="#fff"/></svg>
<svg style="left:258px;top:1044px;" width="32" height="32" viewBox="0 0 32 32"><circle cx="16" cy="16" r="14" fill="#2aa0d0" stroke="#9aa4ae" stroke-width="2"/><path d="M6 12 L11 16 L6 20Z" fill="#fff"/><text x="10.5" y="21" font-family="Liberation Sans, sans-serif" font-weight="bold" font-size="12" fill="#fff" textLength="17" lengthAdjust="spacingAndGlyphs">BS</text></svg>
<svg style="left:320px;top:1044px;" width="32" height="33" viewBox="0 0 32 33"><defs><linearGradient id="lin" x1="0" y1="0" x2="1" y2="1"><stop offset="0" stop-color="#1c2454"/><stop offset="0.5" stop-color="#3a4c8c"/><stop offset="1" stop-color="#141a44"/></linearGradient></defs><path d="M1 2 L31 0 L31 32 L1 31Z" fill="url(#lin)"/><path d="M13.5 3 V29 M17.5 3 V29" stroke="#c8d0e8" stroke-width="1.6"/><text x="2" y="19" font-family="Liberation Serif, serif" font-size="5.5" fill="#e0e4f4" textLength="28" lengthAdjust="spacingAndGlyphs">LINEAGE</text></svg>
<div style="left:370px;top:1041px;width:58px;height:39px;background:linear-gradient(#dcdcd8,#c8c8c4 50%,#bcbcb8 52%,#cacac6);border:1px solid #8a94a0;border-bottom:none;border-radius:3px 3px 0 0;box-shadow:inset 0 0 0 1px rgba(255,255,255,.55);"></div>
<svg style="left:382px;top:1044px;" width="36" height="34" viewBox="0 0 36 34"><g><ellipse cx="23.2" cy="15.0" rx="5.4" ry="4.2" transform="rotate(0 23.2 15.0)" fill="#3cc81c" stroke="#1c8a10" stroke-width="0.6"/><ellipse cx="20.8" cy="20.8" rx="5.4" ry="4.2" transform="rotate(45 20.8 20.8)" fill="#3cc81c" stroke="#1c8a10" stroke-width="0.6"/><ellipse cx="15.0" cy="23.2" rx="5.4" ry="4.2" transform="rotate(90 15.0 23.2)" fill="#3cc81c" stroke="#1c8a10" stroke-width="0.6"/><ellipse cx="9.2" cy="20.8" rx="5.4" ry="4.2" transform="rotate(135 9.2 20.8)" fill="#e02818" stroke="#1c8a10" stroke-width="0.6"/><ellipse cx="6.8" cy="15.0" rx="5.4" ry="4.2" transform="rotate(180 6.8 15.0)" fill="#3cc81c" stroke="#1c8a10" stroke-width="0.6"/><ellipse cx="9.2" cy="9.2" rx="5.4" ry="4.2" transform="rotate(225 9.2 9.2)" fill="#3cc81c" stroke="#1c8a10" stroke-width="0.6"/><ellipse cx="15.0" cy="6.8" rx="5.4" ry="4.2" transform="rotate(270 15.0 6.8)" fill="#3cc81c" stroke="#1c8a10" stroke-width="0.6"/><ellipse cx="20.8" cy="9.2" rx="5.4" ry="4.2" transform="rotate(315 20.8 9.2)" fill="#3cc81c" stroke="#1c8a10" stroke-width="0.6"/><circle cx="15" cy="15" r="4" fill="#f8d820" stroke="#c8a010" stroke-width="0.6"/><rect x="18" y="20" width="14" height="10" fill="#fff" stroke="#111" stroke-width="1"/><path d="M18 20 L25 26 L32 20" fill="none" stroke="#111" stroke-width="1"/><rect x="21" y="15" width="8" height="7" fill="#f8e020" stroke="#a88a00" stroke-width="0.6" transform="rotate(-20 25 18)"/></g></svg>
<div style="left:432px;top:1041px;width:58px;height:39px;background:linear-gradient(#c6d8ec,#b2c8e2 50%,#a2bcda 52%,#b4cce4);border:1px solid #7e94b0;border-bottom:none;border-radius:3px 3px 0 0;box-shadow:inset 0 0 0 1px rgba(255,255,255,.55);"></div>
<svg style="left:446px;top:1046px;" width="30" height="30" viewBox="0 0 30 30"><circle cx="15" cy="15" r="14" fill="#e0e0e0"/><path d="M15 15 L2.9 8 A14 14 0 0 1 27.1 8 Z" fill="#dd4b39"/><path d="M15 15 L27.1 8 A14 14 0 0 1 15 29 Z" fill="#f7cb3a"/><path d="M15 15 L15 29 A14 14 0 0 1 2.9 8 Z" fill="#4caf50"/><circle cx="15" cy="15" r="6.6" fill="#f4f4f4"/><circle cx="15" cy="15" r="5.2" fill="#4a8af4"/></svg>
<div style="left:494px;top:1041px;width:58px;height:39px;background:linear-gradient(#c6d8ec,#b2c8e2 50%,#a2bcda 52%,#b4cce4);border:1px solid #7e94b0;border-bottom:none;border-radius:3px 3px 0 0;box-shadow:inset 0 0 0 1px rgba(255,255,255,.55);"></div>
<svg style="left:508px;top:1045px;" width="32" height="32" viewBox="0 0 32 32"><circle cx="16" cy="16" r="15" fill="#f4f4f4" stroke="#111" stroke-width="1.6"/><path d="M3 11 A14 14 0 0 0 3 21 L8 25 V8Z M29 11 A14 14 0 0 1 29 21 L24 25 V8Z" fill="#111"/><path d="M11 4 V12 Q11 15 16 15 Q21 15 21 12 V4" fill="none" stroke="#111" stroke-width="2.6"/><rect x="9" y="15.5" width="14" height="9" fill="#111"/><text x="10" y="23" font-family="Liberation Sans, sans-serif" font-weight="bold" font-size="7.5" fill="#fff" textLength="12" lengthAdjust="spacingAndGlyphs">BLE</text><path d="M11 27 H21" stroke="#111" stroke-width="2"/></svg>
<div style="left:556px;top:1041px;width:58px;height:39px;background:linear-gradient(#c6d8ec,#b2c8e2 50%,#a2bcda 52%,#b4cce4);border:1px solid #7e94b0;border-bottom:none;border-radius:3px 3px 0 0;box-shadow:inset 0 0 0 1px rgba(255,255,255,.55);"></div>
<svg style="left:569px;top:1045px;" width="32" height="32" viewBox="0 0 32 32"><rect x="1.5" y="2.5" width="29" height="27" rx="10" fill="#f4f8f8" stroke="#0a6e78" stroke-width="3"/><text x="7.5" y="25" font-family="Liberation Sans, sans-serif" font-weight="bold" font-size="27" fill="#0a6e78" textLength="18" lengthAdjust="spacingAndGlyphs">e</text></svg>
<div style="left:673px;top:1042px;width:4px;height:38px;background:#e8b4bc;border:1px solid #9aa0b4;border-left:none;border-radius:0 3px 0 0"></div>
<div style="left:618px;top:1041px;width:54px;height:39px;background:linear-gradient(90deg,#f4c8cc,#e86a72 30%,#e0505a 50%,#f0b0b6 85%,#f8e4e6);border:1px solid #8a8a9a;border-bottom:none;border-radius:3px 3px 0 0;box-shadow:inset 0 0 0 1px rgba(255,255,255,.55);"></div>
<svg style="left:627px;top:1044px;" width="36" height="34" viewBox="0 0 36 34"><rect x="0" y="0" width="36" height="34" fill="#e24a54" opacity="0.55"/><path d="M18 3 L5 29 L7 31.5 L12 31.5 L13.5 27 L22.5 27 L24 31.5 L29 31.5 L31 29 Z" fill="#a81410"/><path d="M18 3 L5 29 L13 25 Z" fill="#d42c22"/><path d="M13 25 L23 25 L31 29 L29 31.5 L24 31.5 L22.5 27 L13.5 27 L12 31.5 L7 31.5 L5 29Z" fill="#7c0c08"/><path d="M14 25 L18 14 L22 25Z" fill="#e8868a"/></svg>
<div style="left:680px;top:1041px;width:54px;height:39px;background:linear-gradient(#c6d8ec,#b2c8e2 50%,#a2bcda 52%,#b4cce4);border:1px solid #7e94b0;border-bottom:none;border-radius:3px 3px 0 0;box-shadow:inset 0 0 0 1px rgba(255,255,255,.55);"></div>
<div style="left:735px;top:1042px;width:4px;height:38px;border:1px solid #8aa0bc;border-left:none;border-radius:0 3px 0 0;background:#b8cce4"></div>
<svg style="left:689px;top:1044px;" width="40" height="34" viewBox="0 0 40 34"><path d="M4 20 C2 12 12 6 20 8 C30 10 30 20 24 22 C20 23 22 27 18 28 C10 30 5 26 4 20Z" fill="#dce8f4" stroke="#6a8ab0" stroke-width="1"/><circle cx="10" cy="18" r="2.2" fill="#d83a2a"/><circle cx="14" cy="12.5" r="2.2" fill="#3cae3c"/><circle cx="20.5" cy="12" r="2.2" fill="#e8c020"/><circle cx="12.5" cy="23.5" r="2.2" fill="#3a7ad4"/><path d="M33 2 L36 4 L24 30 L21 32 L22 28Z" fill="#e8a050" stroke="#a86a20" stroke-width="0.7"/><path d="M33 2 L36 4 L37 0Z" fill="#c89050"/></svg>
<div class="t" style="left:1718.5px;top:1051.34px;font-size:12px;color:#f4f6fa;letter-spacing:-1.335px;">CS</div>
<svg style="left:1748px;top:1057px;" width="10" height="6" viewBox="0 0 10 6"><path d="M0.5 5.5 L5 0.5 L9.5 5.5Z" fill="#f4f6fa"/></svg>
<svg style="left:1768px;top:1051px;" width="22" height="20" viewBox="0 0 22 20"><path d="M3 2 V18" stroke="#f4f4f4" stroke-width="1.6"/><path d="M4 3 Q8 1 11 3.5 Q13 5 16 4 V11 Q13 12.5 10.5 10.5 Q8 8.5 4 10.5Z" fill="#f4f4f4" stroke="#d0d4dc" stroke-width="0.6"/><circle cx="13.5" cy="13.5" r="4.6" fill="#e02a2a" stroke="#fff" stroke-width="0.8"/><path d="M11.6 11.6 L15.4 15.4 M15.4 11.6 L11.6 15.4" stroke="#fff" stroke-width="1.5"/></svg>
<svg style="left:1793px;top:1052px;" width="20" height="18" viewBox="0 0 20 18"><rect x="6.5" y="4.5" width="11" height="9" fill="#5a7294" stroke="#f4f4f4" stroke-width="1.4"/><path d="M8 16.5 H16" stroke="#f4f4f4" stroke-width="1.6"/><path d="M3.5 1 V5 M2 5 H5 V9 H2Z M3.5 9 V13 H6" stroke="#f4f4f4" stroke-width="1.2" fill="none"/></svg>
<svg style="left:1817px;top:1052px;" width="20" height="18" viewBox="0 0 20 18"><path d="M2 6.5 H5 L9.5 2.5 V15.5 L5 11.5 H2Z" fill="#f4f4f4"/><path d="M11.5 6 Q13 9 11.5 12 M13.5 4.5 Q16 9 13.5 13.5 M15.6 3 Q19 9 15.6 15" stroke="#f4f4f4" stroke-width="1.1" fill="none"/></svg>
<div class="t" style="left:1860px;top:1046.64px;font-size:12px;color:#f8fafc;letter-spacing:-0.525px;">23:05</div>
<div class="t" style="left:1846px;top:1063.84px;font-size:12px;color:#f8fafc;letter-spacing:-0.645px;">23.12.2014</div>
<div style="left:1906px;top:1041px;width:14px;height:39px;background:linear-gradient(135deg,#a8b8cc,#5e7490 55%,#7a8ea8);border-left:1px solid #4a5a70;box-shadow:inset 1px 0 0 #c0ccdc"></div>
</div></body></html>
